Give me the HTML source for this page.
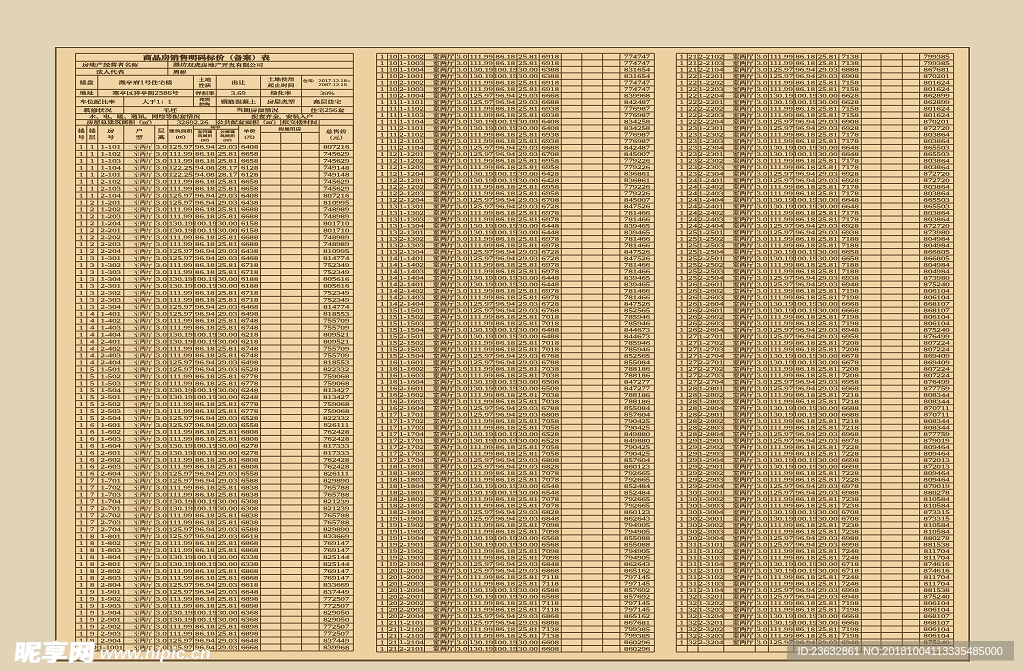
<!DOCTYPE html>
<html lang="zh-CN"><head><meta charset="utf-8"><title>商品房销售明码标价（备案）表</title>
<style>
html,body{margin:0;padding:0;background:#e1d4b6;overflow:hidden}
body{width:1024px;height:671px;position:relative}
svg{display:block;position:absolute;left:0;top:0}
text{font-family:"Liberation Serif","Noto Serif CJK SC",serif;fill:#4a3418}
.b{font-weight:900;stroke-width:0.22}
.h{font-weight:700;stroke:#4a3418;stroke-width:0.1}
.d{stroke:#4a3418;stroke-width:0.12}
.k{font-weight:700;stroke-width:0.1}
.k tspan{stroke:none}
.k1{font-weight:700;stroke:none}
.n{font-weight:400;stroke-width:0.12}
.k tspan{fill:#c2ab84}
.wm{font-family:"Liberation Sans","Noto Sans CJK SC",sans-serif}
</style></head><body>
<div style="will-change:transform;position:absolute;left:0;top:0;width:1024px;height:671px">
<svg width="1024" height="671" viewBox="0 0 1024 671">
<defs><filter id="sh" filterUnits="userSpaceOnUse" x="0" y="0" width="1024" height="671" color-interpolation-filters="sRGB"><feConvolveMatrix order="3" kernelMatrix="0 -0.13 0 -0.13 1.52 -0.13 0 -0.13 0" preserveAlpha="true" edgeMode="duplicate"/></filter></defs>
<g filter="url(#sh)">
<rect x="0" y="0" width="1024" height="671" fill="#e1d4b6"/>
<rect x="53.8" y="46" width="917.4" height="616.5" fill="#f6e7c9" fill-opacity="0.45"/>
<rect x="55" y="47" width="915" height="614.5" fill="#edd1a1"/>
<rect x="57.1" y="48.7" width="910.8" height="610.2" fill="none" stroke="#ffecc8" stroke-opacity="0.3" stroke-width="1.2"/>
<rect x="54.9" y="47" width="1.7" height="614.5" fill="#6b5434"/>
<rect x="968.3" y="47" width="1.7" height="614.5" fill="#6b5434"/>
<rect x="55" y="47" width="915" height="1.1" fill="#6b5434"/>
<rect x="55" y="659.5" width="915" height="2" fill="#6b5434"/>
<rect x="75.55" y="53.35" width="277.8" height="597.6" fill="#efd5a6"/>
<rect x="376.6" y="53.35" width="277.75" height="598.65" fill="#efd5a6"/>
<rect x="676.3" y="53.35" width="277.3" height="598.65" fill="#efd5a6"/>
<g stroke="#5f4222">
<line x1="75.55" y1="143.4" x2="353.35" y2="143.4" stroke-width="0.9"/>
<line x1="75.55" y1="150.35" x2="353.35" y2="150.35" stroke-width="0.9"/>
<line x1="75.55" y1="157.31" x2="353.35" y2="157.31" stroke-width="0.9"/>
<line x1="75.55" y1="164.26" x2="353.35" y2="164.26" stroke-width="0.9"/>
<line x1="75.55" y1="171.21" x2="353.35" y2="171.21" stroke-width="0.9"/>
<line x1="75.55" y1="178.16" x2="353.35" y2="178.16" stroke-width="0.9"/>
<line x1="75.55" y1="185.12" x2="353.35" y2="185.12" stroke-width="0.9"/>
<line x1="75.55" y1="192.07" x2="353.35" y2="192.07" stroke-width="0.9"/>
<line x1="75.55" y1="199.02" x2="353.35" y2="199.02" stroke-width="0.9"/>
<line x1="75.55" y1="205.97" x2="353.35" y2="205.97" stroke-width="0.9"/>
<line x1="75.55" y1="212.93" x2="353.35" y2="212.93" stroke-width="0.9"/>
<line x1="75.55" y1="219.88" x2="353.35" y2="219.88" stroke-width="0.9"/>
<line x1="75.55" y1="226.83" x2="353.35" y2="226.83" stroke-width="0.9"/>
<line x1="75.55" y1="233.79" x2="353.35" y2="233.79" stroke-width="0.9"/>
<line x1="75.55" y1="240.74" x2="353.35" y2="240.74" stroke-width="0.9"/>
<line x1="75.55" y1="247.69" x2="353.35" y2="247.69" stroke-width="0.9"/>
<line x1="75.55" y1="254.64" x2="353.35" y2="254.64" stroke-width="0.9"/>
<line x1="75.55" y1="261.6" x2="353.35" y2="261.6" stroke-width="0.9"/>
<line x1="75.55" y1="268.55" x2="353.35" y2="268.55" stroke-width="0.9"/>
<line x1="75.55" y1="275.5" x2="353.35" y2="275.5" stroke-width="0.9"/>
<line x1="75.55" y1="282.45" x2="353.35" y2="282.45" stroke-width="0.9"/>
<line x1="75.55" y1="289.41" x2="353.35" y2="289.41" stroke-width="0.9"/>
<line x1="75.55" y1="296.36" x2="353.35" y2="296.36" stroke-width="0.9"/>
<line x1="75.55" y1="303.31" x2="353.35" y2="303.31" stroke-width="0.9"/>
<line x1="75.55" y1="310.27" x2="353.35" y2="310.27" stroke-width="0.9"/>
<line x1="75.55" y1="317.22" x2="353.35" y2="317.22" stroke-width="0.9"/>
<line x1="75.55" y1="324.17" x2="353.35" y2="324.17" stroke-width="0.9"/>
<line x1="75.55" y1="331.12" x2="353.35" y2="331.12" stroke-width="0.9"/>
<line x1="75.55" y1="338.08" x2="353.35" y2="338.08" stroke-width="0.9"/>
<line x1="75.55" y1="345.03" x2="353.35" y2="345.03" stroke-width="0.9"/>
<line x1="75.55" y1="351.98" x2="353.35" y2="351.98" stroke-width="0.9"/>
<line x1="75.55" y1="358.93" x2="353.35" y2="358.93" stroke-width="0.9"/>
<line x1="75.55" y1="365.89" x2="353.35" y2="365.89" stroke-width="0.9"/>
<line x1="75.55" y1="372.84" x2="353.35" y2="372.84" stroke-width="0.9"/>
<line x1="75.55" y1="379.79" x2="353.35" y2="379.79" stroke-width="0.9"/>
<line x1="75.55" y1="386.75" x2="353.35" y2="386.75" stroke-width="0.9"/>
<line x1="75.55" y1="393.7" x2="353.35" y2="393.7" stroke-width="0.9"/>
<line x1="75.55" y1="400.65" x2="353.35" y2="400.65" stroke-width="0.9"/>
<line x1="75.55" y1="407.6" x2="353.35" y2="407.6" stroke-width="0.9"/>
<line x1="75.55" y1="414.56" x2="353.35" y2="414.56" stroke-width="0.9"/>
<line x1="75.55" y1="421.51" x2="353.35" y2="421.51" stroke-width="0.9"/>
<line x1="75.55" y1="428.46" x2="353.35" y2="428.46" stroke-width="0.9"/>
<line x1="75.55" y1="435.42" x2="353.35" y2="435.42" stroke-width="0.9"/>
<line x1="75.55" y1="442.37" x2="353.35" y2="442.37" stroke-width="0.9"/>
<line x1="75.55" y1="449.32" x2="353.35" y2="449.32" stroke-width="0.9"/>
<line x1="75.55" y1="456.27" x2="353.35" y2="456.27" stroke-width="0.9"/>
<line x1="75.55" y1="463.23" x2="353.35" y2="463.23" stroke-width="0.9"/>
<line x1="75.55" y1="470.18" x2="353.35" y2="470.18" stroke-width="0.9"/>
<line x1="75.55" y1="477.13" x2="353.35" y2="477.13" stroke-width="0.9"/>
<line x1="75.55" y1="484.08" x2="353.35" y2="484.08" stroke-width="0.9"/>
<line x1="75.55" y1="491.04" x2="353.35" y2="491.04" stroke-width="0.9"/>
<line x1="75.55" y1="497.99" x2="353.35" y2="497.99" stroke-width="0.9"/>
<line x1="75.55" y1="504.94" x2="353.35" y2="504.94" stroke-width="0.9"/>
<line x1="75.55" y1="511.9" x2="353.35" y2="511.9" stroke-width="0.9"/>
<line x1="75.55" y1="518.85" x2="353.35" y2="518.85" stroke-width="0.9"/>
<line x1="75.55" y1="525.8" x2="353.35" y2="525.8" stroke-width="0.9"/>
<line x1="75.55" y1="532.75" x2="353.35" y2="532.75" stroke-width="0.9"/>
<line x1="75.55" y1="539.71" x2="353.35" y2="539.71" stroke-width="0.9"/>
<line x1="75.55" y1="546.66" x2="353.35" y2="546.66" stroke-width="0.9"/>
<line x1="75.55" y1="553.61" x2="353.35" y2="553.61" stroke-width="0.9"/>
<line x1="75.55" y1="560.56" x2="353.35" y2="560.56" stroke-width="0.9"/>
<line x1="75.55" y1="567.52" x2="353.35" y2="567.52" stroke-width="0.9"/>
<line x1="75.55" y1="574.47" x2="353.35" y2="574.47" stroke-width="0.9"/>
<line x1="75.55" y1="581.42" x2="353.35" y2="581.42" stroke-width="0.9"/>
<line x1="75.55" y1="588.38" x2="353.35" y2="588.38" stroke-width="0.9"/>
<line x1="75.55" y1="595.33" x2="353.35" y2="595.33" stroke-width="0.9"/>
<line x1="75.55" y1="602.28" x2="353.35" y2="602.28" stroke-width="0.9"/>
<line x1="75.55" y1="609.23" x2="353.35" y2="609.23" stroke-width="0.9"/>
<line x1="75.55" y1="616.19" x2="353.35" y2="616.19" stroke-width="0.9"/>
<line x1="75.55" y1="623.14" x2="353.35" y2="623.14" stroke-width="0.9"/>
<line x1="75.55" y1="630.09" x2="353.35" y2="630.09" stroke-width="0.9"/>
<line x1="75.55" y1="637.04" x2="353.35" y2="637.04" stroke-width="0.9"/>
<line x1="75.55" y1="644" x2="353.35" y2="644" stroke-width="0.9"/>
<line x1="75.55" y1="650.95" x2="353.35" y2="650.95" stroke-width="0.9"/>
<line x1="75.55" y1="143.4" x2="75.55" y2="650.95" stroke-width="0.96"/>
<line x1="86.75" y1="143.4" x2="86.75" y2="650.95" stroke-width="0.96"/>
<line x1="97.75" y1="143.4" x2="97.75" y2="650.95" stroke-width="0.96"/>
<line x1="123.75" y1="143.4" x2="123.75" y2="650.95" stroke-width="0.96"/>
<line x1="154.75" y1="143.4" x2="154.75" y2="650.95" stroke-width="0.96"/>
<line x1="167.85" y1="143.4" x2="167.85" y2="650.95" stroke-width="0.96"/>
<line x1="193.45" y1="143.4" x2="193.45" y2="650.95" stroke-width="0.96"/>
<line x1="216.25" y1="143.4" x2="216.25" y2="650.95" stroke-width="0.96"/>
<line x1="238.65" y1="143.4" x2="238.65" y2="650.95" stroke-width="0.96"/>
<line x1="260.55" y1="143.4" x2="260.55" y2="650.95" stroke-width="0.96"/>
<line x1="280.75" y1="143.4" x2="280.75" y2="650.95" stroke-width="0.96"/>
<line x1="301.55" y1="143.4" x2="301.55" y2="650.95" stroke-width="0.96"/>
<line x1="319.15" y1="143.4" x2="319.15" y2="650.95" stroke-width="0.96"/>
<line x1="353.35" y1="143.4" x2="353.35" y2="650.95" stroke-width="0.96"/>
<line x1="376.6" y1="53.35" x2="654.35" y2="53.35" stroke-width="0.9"/>
<line x1="376.6" y1="59.86" x2="654.35" y2="59.86" stroke-width="0.9"/>
<line x1="376.6" y1="66.36" x2="654.35" y2="66.36" stroke-width="0.9"/>
<line x1="376.6" y1="72.87" x2="654.35" y2="72.87" stroke-width="0.9"/>
<line x1="376.6" y1="79.38" x2="654.35" y2="79.38" stroke-width="0.9"/>
<line x1="376.6" y1="85.89" x2="654.35" y2="85.89" stroke-width="0.9"/>
<line x1="376.6" y1="92.39" x2="654.35" y2="92.39" stroke-width="0.9"/>
<line x1="376.6" y1="98.9" x2="654.35" y2="98.9" stroke-width="0.9"/>
<line x1="376.6" y1="105.41" x2="654.35" y2="105.41" stroke-width="0.9"/>
<line x1="376.6" y1="111.91" x2="654.35" y2="111.91" stroke-width="0.9"/>
<line x1="376.6" y1="118.42" x2="654.35" y2="118.42" stroke-width="0.9"/>
<line x1="376.6" y1="124.93" x2="654.35" y2="124.93" stroke-width="0.9"/>
<line x1="376.6" y1="131.43" x2="654.35" y2="131.43" stroke-width="0.9"/>
<line x1="376.6" y1="137.94" x2="654.35" y2="137.94" stroke-width="0.9"/>
<line x1="376.6" y1="144.45" x2="654.35" y2="144.45" stroke-width="0.9"/>
<line x1="376.6" y1="150.96" x2="654.35" y2="150.96" stroke-width="0.9"/>
<line x1="376.6" y1="157.46" x2="654.35" y2="157.46" stroke-width="0.9"/>
<line x1="376.6" y1="163.97" x2="654.35" y2="163.97" stroke-width="0.9"/>
<line x1="376.6" y1="170.48" x2="654.35" y2="170.48" stroke-width="0.9"/>
<line x1="376.6" y1="176.98" x2="654.35" y2="176.98" stroke-width="0.9"/>
<line x1="376.6" y1="183.49" x2="654.35" y2="183.49" stroke-width="0.9"/>
<line x1="376.6" y1="190" x2="654.35" y2="190" stroke-width="0.9"/>
<line x1="376.6" y1="196.51" x2="654.35" y2="196.51" stroke-width="0.9"/>
<line x1="376.6" y1="203.01" x2="654.35" y2="203.01" stroke-width="0.9"/>
<line x1="376.6" y1="209.52" x2="654.35" y2="209.52" stroke-width="0.9"/>
<line x1="376.6" y1="216.03" x2="654.35" y2="216.03" stroke-width="0.9"/>
<line x1="376.6" y1="222.53" x2="654.35" y2="222.53" stroke-width="0.9"/>
<line x1="376.6" y1="229.04" x2="654.35" y2="229.04" stroke-width="0.9"/>
<line x1="376.6" y1="235.55" x2="654.35" y2="235.55" stroke-width="0.9"/>
<line x1="376.6" y1="242.05" x2="654.35" y2="242.05" stroke-width="0.9"/>
<line x1="376.6" y1="248.56" x2="654.35" y2="248.56" stroke-width="0.9"/>
<line x1="376.6" y1="255.07" x2="654.35" y2="255.07" stroke-width="0.9"/>
<line x1="376.6" y1="261.58" x2="654.35" y2="261.58" stroke-width="0.9"/>
<line x1="376.6" y1="268.08" x2="654.35" y2="268.08" stroke-width="0.9"/>
<line x1="376.6" y1="274.59" x2="654.35" y2="274.59" stroke-width="0.9"/>
<line x1="376.6" y1="281.1" x2="654.35" y2="281.1" stroke-width="0.9"/>
<line x1="376.6" y1="287.6" x2="654.35" y2="287.6" stroke-width="0.9"/>
<line x1="376.6" y1="294.11" x2="654.35" y2="294.11" stroke-width="0.9"/>
<line x1="376.6" y1="300.62" x2="654.35" y2="300.62" stroke-width="0.9"/>
<line x1="376.6" y1="307.13" x2="654.35" y2="307.13" stroke-width="0.9"/>
<line x1="376.6" y1="313.63" x2="654.35" y2="313.63" stroke-width="0.9"/>
<line x1="376.6" y1="320.14" x2="654.35" y2="320.14" stroke-width="0.9"/>
<line x1="376.6" y1="326.65" x2="654.35" y2="326.65" stroke-width="0.9"/>
<line x1="376.6" y1="333.15" x2="654.35" y2="333.15" stroke-width="0.9"/>
<line x1="376.6" y1="339.66" x2="654.35" y2="339.66" stroke-width="0.9"/>
<line x1="376.6" y1="346.17" x2="654.35" y2="346.17" stroke-width="0.9"/>
<line x1="376.6" y1="352.68" x2="654.35" y2="352.68" stroke-width="0.9"/>
<line x1="376.6" y1="359.18" x2="654.35" y2="359.18" stroke-width="0.9"/>
<line x1="376.6" y1="365.69" x2="654.35" y2="365.69" stroke-width="0.9"/>
<line x1="376.6" y1="372.2" x2="654.35" y2="372.2" stroke-width="0.9"/>
<line x1="376.6" y1="378.7" x2="654.35" y2="378.7" stroke-width="0.9"/>
<line x1="376.6" y1="385.21" x2="654.35" y2="385.21" stroke-width="0.9"/>
<line x1="376.6" y1="391.72" x2="654.35" y2="391.72" stroke-width="0.9"/>
<line x1="376.6" y1="398.22" x2="654.35" y2="398.22" stroke-width="0.9"/>
<line x1="376.6" y1="404.73" x2="654.35" y2="404.73" stroke-width="0.9"/>
<line x1="376.6" y1="411.24" x2="654.35" y2="411.24" stroke-width="0.9"/>
<line x1="376.6" y1="417.75" x2="654.35" y2="417.75" stroke-width="0.9"/>
<line x1="376.6" y1="424.25" x2="654.35" y2="424.25" stroke-width="0.9"/>
<line x1="376.6" y1="430.76" x2="654.35" y2="430.76" stroke-width="0.9"/>
<line x1="376.6" y1="437.27" x2="654.35" y2="437.27" stroke-width="0.9"/>
<line x1="376.6" y1="443.77" x2="654.35" y2="443.77" stroke-width="0.9"/>
<line x1="376.6" y1="450.28" x2="654.35" y2="450.28" stroke-width="0.9"/>
<line x1="376.6" y1="456.79" x2="654.35" y2="456.79" stroke-width="0.9"/>
<line x1="376.6" y1="463.3" x2="654.35" y2="463.3" stroke-width="0.9"/>
<line x1="376.6" y1="469.8" x2="654.35" y2="469.8" stroke-width="0.9"/>
<line x1="376.6" y1="476.31" x2="654.35" y2="476.31" stroke-width="0.9"/>
<line x1="376.6" y1="482.82" x2="654.35" y2="482.82" stroke-width="0.9"/>
<line x1="376.6" y1="489.32" x2="654.35" y2="489.32" stroke-width="0.9"/>
<line x1="376.6" y1="495.83" x2="654.35" y2="495.83" stroke-width="0.9"/>
<line x1="376.6" y1="502.34" x2="654.35" y2="502.34" stroke-width="0.9"/>
<line x1="376.6" y1="508.84" x2="654.35" y2="508.84" stroke-width="0.9"/>
<line x1="376.6" y1="515.35" x2="654.35" y2="515.35" stroke-width="0.9"/>
<line x1="376.6" y1="521.86" x2="654.35" y2="521.86" stroke-width="0.9"/>
<line x1="376.6" y1="528.37" x2="654.35" y2="528.37" stroke-width="0.9"/>
<line x1="376.6" y1="534.87" x2="654.35" y2="534.87" stroke-width="0.9"/>
<line x1="376.6" y1="541.38" x2="654.35" y2="541.38" stroke-width="0.9"/>
<line x1="376.6" y1="547.89" x2="654.35" y2="547.89" stroke-width="0.9"/>
<line x1="376.6" y1="554.39" x2="654.35" y2="554.39" stroke-width="0.9"/>
<line x1="376.6" y1="560.9" x2="654.35" y2="560.9" stroke-width="0.9"/>
<line x1="376.6" y1="567.41" x2="654.35" y2="567.41" stroke-width="0.9"/>
<line x1="376.6" y1="573.92" x2="654.35" y2="573.92" stroke-width="0.9"/>
<line x1="376.6" y1="580.42" x2="654.35" y2="580.42" stroke-width="0.9"/>
<line x1="376.6" y1="586.93" x2="654.35" y2="586.93" stroke-width="0.9"/>
<line x1="376.6" y1="593.44" x2="654.35" y2="593.44" stroke-width="0.9"/>
<line x1="376.6" y1="599.94" x2="654.35" y2="599.94" stroke-width="0.9"/>
<line x1="376.6" y1="606.45" x2="654.35" y2="606.45" stroke-width="0.9"/>
<line x1="376.6" y1="612.96" x2="654.35" y2="612.96" stroke-width="0.9"/>
<line x1="376.6" y1="619.46" x2="654.35" y2="619.46" stroke-width="0.9"/>
<line x1="376.6" y1="625.97" x2="654.35" y2="625.97" stroke-width="0.9"/>
<line x1="376.6" y1="632.48" x2="654.35" y2="632.48" stroke-width="0.9"/>
<line x1="376.6" y1="638.99" x2="654.35" y2="638.99" stroke-width="0.9"/>
<line x1="376.6" y1="645.49" x2="654.35" y2="645.49" stroke-width="0.9"/>
<line x1="376.6" y1="652" x2="654.35" y2="652" stroke-width="0.9"/>
<line x1="376.6" y1="53.35" x2="376.6" y2="652" stroke-width="0.96"/>
<line x1="387.6" y1="53.35" x2="387.6" y2="652" stroke-width="0.96"/>
<line x1="398.6" y1="53.35" x2="398.6" y2="652" stroke-width="0.96"/>
<line x1="424.5" y1="53.35" x2="424.5" y2="652" stroke-width="0.96"/>
<line x1="455.3" y1="53.35" x2="455.3" y2="652" stroke-width="0.96"/>
<line x1="468.4" y1="53.35" x2="468.4" y2="652" stroke-width="0.96"/>
<line x1="493.9" y1="53.35" x2="493.9" y2="652" stroke-width="0.96"/>
<line x1="516.9" y1="53.35" x2="516.9" y2="652" stroke-width="0.96"/>
<line x1="539.3" y1="53.35" x2="539.3" y2="652" stroke-width="0.96"/>
<line x1="561.3" y1="53.35" x2="561.3" y2="652" stroke-width="0.96"/>
<line x1="581.8" y1="53.35" x2="581.8" y2="652" stroke-width="0.96"/>
<line x1="602.6" y1="53.35" x2="602.6" y2="652" stroke-width="0.96"/>
<line x1="619.9" y1="53.35" x2="619.9" y2="652" stroke-width="0.96"/>
<line x1="654.35" y1="53.35" x2="654.35" y2="652" stroke-width="0.96"/>
<line x1="676.3" y1="53.35" x2="953.6" y2="53.35" stroke-width="0.9"/>
<line x1="676.3" y1="59.86" x2="953.6" y2="59.86" stroke-width="0.9"/>
<line x1="676.3" y1="66.36" x2="953.6" y2="66.36" stroke-width="0.9"/>
<line x1="676.3" y1="72.87" x2="953.6" y2="72.87" stroke-width="0.9"/>
<line x1="676.3" y1="79.38" x2="953.6" y2="79.38" stroke-width="0.9"/>
<line x1="676.3" y1="85.89" x2="953.6" y2="85.89" stroke-width="0.9"/>
<line x1="676.3" y1="92.39" x2="953.6" y2="92.39" stroke-width="0.9"/>
<line x1="676.3" y1="98.9" x2="953.6" y2="98.9" stroke-width="0.9"/>
<line x1="676.3" y1="105.41" x2="953.6" y2="105.41" stroke-width="0.9"/>
<line x1="676.3" y1="111.91" x2="953.6" y2="111.91" stroke-width="0.9"/>
<line x1="676.3" y1="118.42" x2="953.6" y2="118.42" stroke-width="0.9"/>
<line x1="676.3" y1="124.93" x2="953.6" y2="124.93" stroke-width="0.9"/>
<line x1="676.3" y1="131.43" x2="953.6" y2="131.43" stroke-width="0.9"/>
<line x1="676.3" y1="137.94" x2="953.6" y2="137.94" stroke-width="0.9"/>
<line x1="676.3" y1="144.45" x2="953.6" y2="144.45" stroke-width="0.9"/>
<line x1="676.3" y1="150.96" x2="953.6" y2="150.96" stroke-width="0.9"/>
<line x1="676.3" y1="157.46" x2="953.6" y2="157.46" stroke-width="0.9"/>
<line x1="676.3" y1="163.97" x2="953.6" y2="163.97" stroke-width="0.9"/>
<line x1="676.3" y1="170.48" x2="953.6" y2="170.48" stroke-width="0.9"/>
<line x1="676.3" y1="176.98" x2="953.6" y2="176.98" stroke-width="0.9"/>
<line x1="676.3" y1="183.49" x2="953.6" y2="183.49" stroke-width="0.9"/>
<line x1="676.3" y1="190" x2="953.6" y2="190" stroke-width="0.9"/>
<line x1="676.3" y1="196.51" x2="953.6" y2="196.51" stroke-width="0.9"/>
<line x1="676.3" y1="203.01" x2="953.6" y2="203.01" stroke-width="0.9"/>
<line x1="676.3" y1="209.52" x2="953.6" y2="209.52" stroke-width="0.9"/>
<line x1="676.3" y1="216.03" x2="953.6" y2="216.03" stroke-width="0.9"/>
<line x1="676.3" y1="222.53" x2="953.6" y2="222.53" stroke-width="0.9"/>
<line x1="676.3" y1="229.04" x2="953.6" y2="229.04" stroke-width="0.9"/>
<line x1="676.3" y1="235.55" x2="953.6" y2="235.55" stroke-width="0.9"/>
<line x1="676.3" y1="242.05" x2="953.6" y2="242.05" stroke-width="0.9"/>
<line x1="676.3" y1="248.56" x2="953.6" y2="248.56" stroke-width="0.9"/>
<line x1="676.3" y1="255.07" x2="953.6" y2="255.07" stroke-width="0.9"/>
<line x1="676.3" y1="261.58" x2="953.6" y2="261.58" stroke-width="0.9"/>
<line x1="676.3" y1="268.08" x2="953.6" y2="268.08" stroke-width="0.9"/>
<line x1="676.3" y1="274.59" x2="953.6" y2="274.59" stroke-width="0.9"/>
<line x1="676.3" y1="281.1" x2="953.6" y2="281.1" stroke-width="0.9"/>
<line x1="676.3" y1="287.6" x2="953.6" y2="287.6" stroke-width="0.9"/>
<line x1="676.3" y1="294.11" x2="953.6" y2="294.11" stroke-width="0.9"/>
<line x1="676.3" y1="300.62" x2="953.6" y2="300.62" stroke-width="0.9"/>
<line x1="676.3" y1="307.13" x2="953.6" y2="307.13" stroke-width="0.9"/>
<line x1="676.3" y1="313.63" x2="953.6" y2="313.63" stroke-width="0.9"/>
<line x1="676.3" y1="320.14" x2="953.6" y2="320.14" stroke-width="0.9"/>
<line x1="676.3" y1="326.65" x2="953.6" y2="326.65" stroke-width="0.9"/>
<line x1="676.3" y1="333.15" x2="953.6" y2="333.15" stroke-width="0.9"/>
<line x1="676.3" y1="339.66" x2="953.6" y2="339.66" stroke-width="0.9"/>
<line x1="676.3" y1="346.17" x2="953.6" y2="346.17" stroke-width="0.9"/>
<line x1="676.3" y1="352.68" x2="953.6" y2="352.68" stroke-width="0.9"/>
<line x1="676.3" y1="359.18" x2="953.6" y2="359.18" stroke-width="0.9"/>
<line x1="676.3" y1="365.69" x2="953.6" y2="365.69" stroke-width="0.9"/>
<line x1="676.3" y1="372.2" x2="953.6" y2="372.2" stroke-width="0.9"/>
<line x1="676.3" y1="378.7" x2="953.6" y2="378.7" stroke-width="0.9"/>
<line x1="676.3" y1="385.21" x2="953.6" y2="385.21" stroke-width="0.9"/>
<line x1="676.3" y1="391.72" x2="953.6" y2="391.72" stroke-width="0.9"/>
<line x1="676.3" y1="398.22" x2="953.6" y2="398.22" stroke-width="0.9"/>
<line x1="676.3" y1="404.73" x2="953.6" y2="404.73" stroke-width="0.9"/>
<line x1="676.3" y1="411.24" x2="953.6" y2="411.24" stroke-width="0.9"/>
<line x1="676.3" y1="417.75" x2="953.6" y2="417.75" stroke-width="0.9"/>
<line x1="676.3" y1="424.25" x2="953.6" y2="424.25" stroke-width="0.9"/>
<line x1="676.3" y1="430.76" x2="953.6" y2="430.76" stroke-width="0.9"/>
<line x1="676.3" y1="437.27" x2="953.6" y2="437.27" stroke-width="0.9"/>
<line x1="676.3" y1="443.77" x2="953.6" y2="443.77" stroke-width="0.9"/>
<line x1="676.3" y1="450.28" x2="953.6" y2="450.28" stroke-width="0.9"/>
<line x1="676.3" y1="456.79" x2="953.6" y2="456.79" stroke-width="0.9"/>
<line x1="676.3" y1="463.3" x2="953.6" y2="463.3" stroke-width="0.9"/>
<line x1="676.3" y1="469.8" x2="953.6" y2="469.8" stroke-width="0.9"/>
<line x1="676.3" y1="476.31" x2="953.6" y2="476.31" stroke-width="0.9"/>
<line x1="676.3" y1="482.82" x2="953.6" y2="482.82" stroke-width="0.9"/>
<line x1="676.3" y1="489.32" x2="953.6" y2="489.32" stroke-width="0.9"/>
<line x1="676.3" y1="495.83" x2="953.6" y2="495.83" stroke-width="0.9"/>
<line x1="676.3" y1="502.34" x2="953.6" y2="502.34" stroke-width="0.9"/>
<line x1="676.3" y1="508.84" x2="953.6" y2="508.84" stroke-width="0.9"/>
<line x1="676.3" y1="515.35" x2="953.6" y2="515.35" stroke-width="0.9"/>
<line x1="676.3" y1="521.86" x2="953.6" y2="521.86" stroke-width="0.9"/>
<line x1="676.3" y1="528.37" x2="953.6" y2="528.37" stroke-width="0.9"/>
<line x1="676.3" y1="534.87" x2="953.6" y2="534.87" stroke-width="0.9"/>
<line x1="676.3" y1="541.38" x2="953.6" y2="541.38" stroke-width="0.9"/>
<line x1="676.3" y1="547.89" x2="953.6" y2="547.89" stroke-width="0.9"/>
<line x1="676.3" y1="554.39" x2="953.6" y2="554.39" stroke-width="0.9"/>
<line x1="676.3" y1="560.9" x2="953.6" y2="560.9" stroke-width="0.9"/>
<line x1="676.3" y1="567.41" x2="953.6" y2="567.41" stroke-width="0.9"/>
<line x1="676.3" y1="573.92" x2="953.6" y2="573.92" stroke-width="0.9"/>
<line x1="676.3" y1="580.42" x2="953.6" y2="580.42" stroke-width="0.9"/>
<line x1="676.3" y1="586.93" x2="953.6" y2="586.93" stroke-width="0.9"/>
<line x1="676.3" y1="593.44" x2="953.6" y2="593.44" stroke-width="0.9"/>
<line x1="676.3" y1="599.94" x2="953.6" y2="599.94" stroke-width="0.9"/>
<line x1="676.3" y1="606.45" x2="953.6" y2="606.45" stroke-width="0.9"/>
<line x1="676.3" y1="612.96" x2="953.6" y2="612.96" stroke-width="0.9"/>
<line x1="676.3" y1="619.46" x2="953.6" y2="619.46" stroke-width="0.9"/>
<line x1="676.3" y1="625.97" x2="953.6" y2="625.97" stroke-width="0.9"/>
<line x1="676.3" y1="632.48" x2="953.6" y2="632.48" stroke-width="0.9"/>
<line x1="676.3" y1="638.99" x2="953.6" y2="638.99" stroke-width="0.9"/>
<line x1="676.3" y1="645.49" x2="953.6" y2="645.49" stroke-width="0.9"/>
<line x1="676.3" y1="652" x2="953.6" y2="652" stroke-width="0.9"/>
<line x1="676.3" y1="53.35" x2="676.3" y2="652" stroke-width="0.96"/>
<line x1="687.3" y1="53.35" x2="687.3" y2="652" stroke-width="0.96"/>
<line x1="698.1" y1="53.35" x2="698.1" y2="652" stroke-width="0.96"/>
<line x1="723.8" y1="53.35" x2="723.8" y2="652" stroke-width="0.96"/>
<line x1="755.3" y1="53.35" x2="755.3" y2="652" stroke-width="0.96"/>
<line x1="768.4" y1="53.35" x2="768.4" y2="652" stroke-width="0.96"/>
<line x1="793.8" y1="53.35" x2="793.8" y2="652" stroke-width="0.96"/>
<line x1="816.6" y1="53.35" x2="816.6" y2="652" stroke-width="0.96"/>
<line x1="838.9" y1="53.35" x2="838.9" y2="652" stroke-width="0.96"/>
<line x1="861.3" y1="53.35" x2="861.3" y2="652" stroke-width="0.96"/>
<line x1="881" y1="53.35" x2="881" y2="652" stroke-width="0.96"/>
<line x1="902.3" y1="53.35" x2="902.3" y2="652" stroke-width="0.96"/>
<line x1="919.6" y1="53.35" x2="919.6" y2="652" stroke-width="0.96"/>
<line x1="953.6" y1="53.35" x2="953.6" y2="652" stroke-width="0.96"/>
<line x1="75.55" y1="53.4" x2="353.35" y2="53.4" stroke-width="0.9"/>
<line x1="75.55" y1="61.3" x2="353.35" y2="61.3" stroke-width="0.9"/>
<line x1="75.55" y1="68.3" x2="353.35" y2="68.3" stroke-width="0.9"/>
<line x1="75.55" y1="75.3" x2="353.35" y2="75.3" stroke-width="0.9"/>
<line x1="75.55" y1="89.4" x2="353.35" y2="89.4" stroke-width="0.9"/>
<line x1="75.55" y1="96.75" x2="353.35" y2="96.75" stroke-width="0.9"/>
<line x1="75.55" y1="106.6" x2="353.35" y2="106.6" stroke-width="0.9"/>
<line x1="75.55" y1="113.6" x2="353.35" y2="113.6" stroke-width="0.9"/>
<line x1="75.55" y1="119.6" x2="353.35" y2="119.6" stroke-width="0.9"/>
<line x1="75.55" y1="125.25" x2="353.35" y2="125.25" stroke-width="0.9"/>
<line x1="75.55" y1="53.4" x2="75.55" y2="143.4" stroke-width="0.96"/>
<line x1="353.35" y1="53.4" x2="353.35" y2="143.4" stroke-width="0.96"/>
<line x1="167.85" y1="61.3" x2="167.85" y2="75.3" stroke-width="0.96"/>
<line x1="97.75" y1="75.3" x2="97.75" y2="96.75" stroke-width="0.96"/>
<line x1="193.45" y1="75.3" x2="193.45" y2="96.75" stroke-width="0.96"/>
<line x1="216.25" y1="75.3" x2="216.25" y2="96.75" stroke-width="0.96"/>
<line x1="260.55" y1="75.3" x2="260.55" y2="96.75" stroke-width="0.96"/>
<line x1="301.55" y1="75.3" x2="301.55" y2="96.75" stroke-width="0.96"/>
<line x1="123.75" y1="96.75" x2="123.75" y2="106.6" stroke-width="0.96"/>
<line x1="193.45" y1="96.75" x2="193.45" y2="106.6" stroke-width="0.96"/>
<line x1="216.25" y1="96.75" x2="216.25" y2="106.6" stroke-width="0.96"/>
<line x1="260.55" y1="96.75" x2="260.55" y2="106.6" stroke-width="0.96"/>
<line x1="301.55" y1="96.75" x2="301.55" y2="106.6" stroke-width="0.96"/>
<line x1="123.75" y1="106.6" x2="123.75" y2="113.6" stroke-width="0.96"/>
<line x1="216.25" y1="106.6" x2="216.25" y2="113.6" stroke-width="0.96"/>
<line x1="301.55" y1="106.6" x2="301.55" y2="113.6" stroke-width="0.96"/>
<line x1="216.25" y1="113.6" x2="216.25" y2="119.6" stroke-width="0.96"/>
<line x1="167.85" y1="119.6" x2="167.85" y2="125.25" stroke-width="0.96"/>
<line x1="216.25" y1="119.6" x2="216.25" y2="125.25" stroke-width="0.96"/>
<line x1="280.75" y1="119.6" x2="280.75" y2="125.25" stroke-width="0.96"/>
<line x1="319.15" y1="119.6" x2="319.15" y2="125.25" stroke-width="0.96"/>
<line x1="75.55" y1="125.25" x2="75.55" y2="143.4" stroke-width="0.96"/>
<line x1="86.75" y1="125.25" x2="86.75" y2="143.4" stroke-width="0.96"/>
<line x1="97.75" y1="125.25" x2="97.75" y2="143.4" stroke-width="0.96"/>
<line x1="123.75" y1="125.25" x2="123.75" y2="143.4" stroke-width="0.96"/>
<line x1="154.75" y1="125.25" x2="154.75" y2="143.4" stroke-width="0.96"/>
<line x1="167.85" y1="125.25" x2="167.85" y2="143.4" stroke-width="0.96"/>
<line x1="193.45" y1="125.25" x2="193.45" y2="143.4" stroke-width="0.96"/>
<line x1="216.25" y1="129.3" x2="216.25" y2="143.4" stroke-width="0.96"/>
<line x1="238.65" y1="125.25" x2="238.65" y2="143.4" stroke-width="0.96"/>
<line x1="260.55" y1="125.25" x2="260.55" y2="143.4" stroke-width="0.96"/>
<line x1="280.75" y1="132.4" x2="280.75" y2="143.4" stroke-width="0.96"/>
<line x1="301.55" y1="132.4" x2="301.55" y2="143.4" stroke-width="0.96"/>
<line x1="319.15" y1="125.25" x2="319.15" y2="143.4" stroke-width="0.96"/>
<line x1="353.35" y1="125.25" x2="353.35" y2="143.4" stroke-width="0.96"/>
<line x1="193.45" y1="129.3" x2="238.65" y2="129.3" stroke-width="0.9"/>
<line x1="260.55" y1="132.4" x2="319.15" y2="132.4" stroke-width="0.9"/>
</g>
<g class="h">
<text transform="matrix(1.44 0.002 0 1 206.35 60)" font-size="6.3" text-anchor="middle" class="b">商品房销售明码标价（备案）表</text>
<text transform="matrix(1.5 0.002 0 1 110.2 66.6)" font-size="4.7" text-anchor="middle">房地产经营者名称</text>
<text transform="matrix(1.5 0.002 0 1 173.1 66.6)" font-size="4.63" text-anchor="start">潍坊双虎房地产开发有限公司</text>
<text transform="matrix(1.5 0.002 0 1 110.2 73.8)" font-size="4.7" text-anchor="middle">法人代表</text>
<text transform="matrix(1.5 0.002 0 1 173.1 73.8)" font-size="4.5" text-anchor="start">周彬</text>
<text transform="matrix(1.5 0.002 0 1 86.65 84.3)" font-size="4.7" text-anchor="middle">楼盘</text>
<text transform="matrix(1.5 0.002 0 1 145.6 84.3)" font-size="4.7" text-anchor="middle">潍亭府<tspan class="n" font-size="5.73">1</tspan>号住宅楼</text>
<text transform="matrix(1.5 0.002 0 1 204.85 81.3)" font-size="4.3" text-anchor="middle">土地</text>
<text transform="matrix(1.5 0.002 0 1 204.85 87.1)" font-size="4.3" text-anchor="middle">性质</text>
<text transform="matrix(1.5 0.002 0 1 238.4 84.3)" font-size="4.7" text-anchor="middle">出让</text>
<text transform="matrix(1.5 0.002 0 1 281.05 80.9)" font-size="4.5" text-anchor="middle">土地使用</text>
<text transform="matrix(1.5 0.002 0 1 281.05 86.9)" font-size="4.5" text-anchor="middle">起止时间</text>
<text transform="matrix(1.5 0.002 0 1 303.1 82)" font-size="3.2" text-anchor="start">住宅:</text>
<text transform="matrix(1.5 0.002 0 1 318.6 82)" font-size="4.2" text-anchor="start" class="n">2017.12.16–</text>
<text transform="matrix(1.5 0.002 0 1 318.6 86)" font-size="4.2" text-anchor="start" class="n">2087.12.15</text>
<text transform="matrix(1.5 0.002 0 1 86.65 94.7)" font-size="4.7" text-anchor="middle">地址</text>
<text transform="matrix(1.5 0.002 0 1 145.6 94.7)" font-size="4.7" text-anchor="middle">寒亭区祥亭街<tspan class="n" font-size="5.73">2586</tspan>号</text>
<text transform="matrix(1.5 0.002 0 1 204.85 94.7)" font-size="4.4" text-anchor="middle">容积率</text>
<text transform="matrix(1.5 0.002 0 1 238.4 94.9)" font-size="5.6" text-anchor="middle" class="n">3.69</text>
<text transform="matrix(1.5 0.002 0 1 281.05 94.7)" font-size="4.7" text-anchor="middle">绿化率</text>
<text transform="matrix(1.5 0.002 0 1 327.45 94.9)" font-size="5.3" text-anchor="middle" class="n">30%</text>
<text transform="matrix(1.5 0.002 0 1 97.6 103.5)" font-size="4.7" text-anchor="middle">车位配比率</text>
<text transform="matrix(1.5 0.002 0 1 156.9 103.5)" font-size="4.7" text-anchor="middle">大于<tspan class="n" font-size="5.73">1</tspan>：<tspan class="n" font-size="5.73">1</tspan></text>
<text transform="matrix(1.5 0.002 0 1 204.85 100.9)" font-size="3.7" text-anchor="middle">建筑</text>
<text transform="matrix(1.5 0.002 0 1 204.85 105.5)" font-size="3.7" text-anchor="middle">结构</text>
<text transform="matrix(1.5 0.002 0 1 238.4 103.5)" font-size="4.7" text-anchor="middle">钢筋混凝土</text>
<text transform="matrix(1.5 0.002 0 1 281.05 103.5)" font-size="4.7" text-anchor="middle">房屋类型</text>
<text transform="matrix(1.5 0.002 0 1 327.45 103.5)" font-size="4.7" text-anchor="middle">高层住宅</text>
<text transform="matrix(1.5 0.002 0 1 97.7 111.9)" font-size="4.7" text-anchor="middle">装修状况</text>
<text transform="matrix(1.5 0.002 0 1 170 111.9)" font-size="4.7" text-anchor="middle">毛坯</text>
<text transform="matrix(1.5 0.002 0 1 257.4 111.9)" font-size="4.7" text-anchor="middle">当期房源情况</text>
<text transform="matrix(1.5 0.002 0 1 327.45 111.9)" font-size="4.7" text-anchor="middle">住宅<tspan class="n" font-size="5.73">256</tspan>套</text>
<text transform="matrix(1.5 0.002 0 1 144.6 118.3)" font-size="4.65" text-anchor="middle">水、电、暖、通讯、网络等配套情况</text>
<text transform="matrix(1.5 0.002 0 1 282.4 118.3)" font-size="4.57" text-anchor="middle">配套齐全，安装入户</text>
<text transform="matrix(1.5 0.002 0 1 121.2 124.1)" font-size="4.65" text-anchor="middle">房屋总建筑面积（㎡）</text>
<text transform="matrix(1.5 0.002 0 1 192.6 124.2)" font-size="5.6" text-anchor="middle" class="n">32692.26</text>
<text transform="matrix(1.5 0.002 0 1 248.4 124.1)" font-size="4.7" text-anchor="middle">公共配套面积（㎡）</text>
<text transform="matrix(1.5 0.002 0 1 299.6 124.1)" font-size="4.7" text-anchor="middle">拟交楼时间</text>
<text transform="matrix(1.5 0.002 0 1 81.15 132.6)" font-size="4.7" text-anchor="middle">楼</text>
<text transform="matrix(1.5 0.002 0 1 81.15 139)" font-size="4.7" text-anchor="middle">号</text>
<text transform="matrix(1.5 0.002 0 1 92.25 132.6)" font-size="4.7" text-anchor="middle">楼</text>
<text transform="matrix(1.5 0.002 0 1 92.25 139)" font-size="4.7" text-anchor="middle">层</text>
<text transform="matrix(1.5 0.002 0 1 110.75 132.6)" font-size="4.7" text-anchor="middle">房</text>
<text transform="matrix(1.5 0.002 0 1 110.75 139)" font-size="4.7" text-anchor="middle">号</text>
<text transform="matrix(1.5 0.002 0 1 139.25 132.6)" font-size="4.7" text-anchor="middle">户</text>
<text transform="matrix(1.5 0.002 0 1 139.25 139)" font-size="4.7" text-anchor="middle">型</text>
<text transform="matrix(1.5 0.002 0 1 161.3 132.6)" font-size="4.7" text-anchor="middle">层</text>
<text transform="matrix(1.5 0.002 0 1 161.3 139)" font-size="4.7" text-anchor="middle">高</text>
<text transform="matrix(1.5 0.002 0 1 180.65 132.5)" font-size="3.95" text-anchor="middle">建筑面积</text>
<text transform="matrix(1.5 0.002 0 1 180.65 138.3)" font-size="3.95" text-anchor="middle">(㎡)</text>
<text transform="matrix(1.5 0.002 0 1 215.25 128.6)" font-size="3.4" text-anchor="middle">其中</text>
<text transform="matrix(1.5 0.002 0 1 204.85 133)" font-size="3.3" text-anchor="middle">套内建</text>
<text transform="matrix(1.5 0.002 0 1 204.85 137.1)" font-size="3.3" text-anchor="middle">筑面积</text>
<text transform="matrix(1.5 0.002 0 1 204.85 141.3)" font-size="3.3" text-anchor="middle">(㎡)</text>
<text transform="matrix(1.5 0.002 0 1 227.45 133)" font-size="3.3" text-anchor="middle">公摊建</text>
<text transform="matrix(1.5 0.002 0 1 227.45 137.1)" font-size="3.3" text-anchor="middle">筑面积</text>
<text transform="matrix(1.5 0.002 0 1 227.45 141.3)" font-size="3.3" text-anchor="middle">(㎡)</text>
<text transform="matrix(1.5 0.002 0 1 249.6 132.5)" font-size="4" text-anchor="middle">单价</text>
<text transform="matrix(1.5 0.002 0 1 249.6 138.3)" font-size="4" text-anchor="middle">(元)</text>
<text transform="matrix(1.5 0.002 0 1 289.85 130.5)" font-size="3.8" text-anchor="middle">附属用房</text>
<text transform="matrix(1.5 0.002 0 1 336.25 133.2)" font-size="4.7" text-anchor="middle">总售价</text>
<text transform="matrix(1.5 0.002 0 1 336.25 139.4)" font-size="4.7" text-anchor="middle">（元）</text>
</g>
<g class="d">
<text transform="matrix(1.56 0.002 0 1 81.15 148.78)" font-size="5.6" text-anchor="middle">1</text>
<text transform="matrix(1.56 0.002 0 1 92.25 148.78)" font-size="5.6" text-anchor="middle">1</text>
<text transform="matrix(1.56 0.002 0 1 110.75 148.78)" font-size="5.6" text-anchor="middle">1-101</text>
<text transform="matrix(1.17 0.002 0 1 139.75 148.93)" font-size="5.4" text-anchor="middle" class="k k1"><tspan>三</tspan>室两厅</text>
<text transform="matrix(1.56 0.002 0 1 161.3 148.78)" font-size="5.6" text-anchor="middle">3.0</text>
<text transform="matrix(1.56 0.002 0 1 180.65 148.78)" font-size="5.6" text-anchor="middle">125.97</text>
<text transform="matrix(1.56 0.002 0 1 204.85 148.78)" font-size="5.6" text-anchor="middle">96.94</text>
<text transform="matrix(1.56 0.002 0 1 227.45 148.78)" font-size="5.6" text-anchor="middle">29.03</text>
<text transform="matrix(1.56 0.002 0 1 249.6 148.78)" font-size="5.6" text-anchor="middle">6408</text>
<text transform="matrix(1.56 0.002 0 1 336.25 148.78)" font-size="5.6" text-anchor="middle">807216</text>
<text transform="matrix(1.56 0.002 0 1 81.15 155.73)" font-size="5.6" text-anchor="middle">1</text>
<text transform="matrix(1.56 0.002 0 1 92.25 155.73)" font-size="5.6" text-anchor="middle">1</text>
<text transform="matrix(1.56 0.002 0 1 110.75 155.73)" font-size="5.6" text-anchor="middle">1-102</text>
<text transform="matrix(1.17 0.002 0 1 139.75 155.88)" font-size="5.4" text-anchor="middle" class="k k1"><tspan>三</tspan>室两厅</text>
<text transform="matrix(1.56 0.002 0 1 161.3 155.73)" font-size="5.6" text-anchor="middle">3.0</text>
<text transform="matrix(1.56 0.002 0 1 180.65 155.73)" font-size="5.6" text-anchor="middle">111.99</text>
<text transform="matrix(1.56 0.002 0 1 204.85 155.73)" font-size="5.6" text-anchor="middle">86.18</text>
<text transform="matrix(1.56 0.002 0 1 227.45 155.73)" font-size="5.6" text-anchor="middle">25.81</text>
<text transform="matrix(1.56 0.002 0 1 249.6 155.73)" font-size="5.6" text-anchor="middle">6658</text>
<text transform="matrix(1.56 0.002 0 1 336.25 155.73)" font-size="5.6" text-anchor="middle">745629</text>
<text transform="matrix(1.56 0.002 0 1 81.15 162.68)" font-size="5.6" text-anchor="middle">1</text>
<text transform="matrix(1.56 0.002 0 1 92.25 162.68)" font-size="5.6" text-anchor="middle">1</text>
<text transform="matrix(1.56 0.002 0 1 110.75 162.68)" font-size="5.6" text-anchor="middle">1-103</text>
<text transform="matrix(1.17 0.002 0 1 139.75 162.83)" font-size="5.4" text-anchor="middle" class="k k1"><tspan>三</tspan>室两厅</text>
<text transform="matrix(1.56 0.002 0 1 161.3 162.68)" font-size="5.6" text-anchor="middle">3.0</text>
<text transform="matrix(1.56 0.002 0 1 180.65 162.68)" font-size="5.6" text-anchor="middle">111.99</text>
<text transform="matrix(1.56 0.002 0 1 204.85 162.68)" font-size="5.6" text-anchor="middle">86.18</text>
<text transform="matrix(1.56 0.002 0 1 227.45 162.68)" font-size="5.6" text-anchor="middle">25.81</text>
<text transform="matrix(1.56 0.002 0 1 249.6 162.68)" font-size="5.6" text-anchor="middle">6658</text>
<text transform="matrix(1.56 0.002 0 1 336.25 162.68)" font-size="5.6" text-anchor="middle">745629</text>
<text transform="matrix(1.56 0.002 0 1 81.15 169.63)" font-size="5.6" text-anchor="middle">1</text>
<text transform="matrix(1.56 0.002 0 1 92.25 169.63)" font-size="5.6" text-anchor="middle">1</text>
<text transform="matrix(1.56 0.002 0 1 110.75 169.63)" font-size="5.6" text-anchor="middle">1-104</text>
<text transform="matrix(1.17 0.002 0 1 139.75 169.78)" font-size="5.4" text-anchor="middle" class="k k1"><tspan>三</tspan>室两厅</text>
<text transform="matrix(1.56 0.002 0 1 161.3 169.63)" font-size="5.6" text-anchor="middle">3.0</text>
<text transform="matrix(1.56 0.002 0 1 180.65 169.63)" font-size="5.6" text-anchor="middle">122.25</text>
<text transform="matrix(1.56 0.002 0 1 204.85 169.63)" font-size="5.6" text-anchor="middle">94.08</text>
<text transform="matrix(1.56 0.002 0 1 227.45 169.63)" font-size="5.6" text-anchor="middle">28.17</text>
<text transform="matrix(1.56 0.002 0 1 249.6 169.63)" font-size="5.6" text-anchor="middle">6128</text>
<text transform="matrix(1.56 0.002 0 1 336.25 169.63)" font-size="5.6" text-anchor="middle">749148</text>
<text transform="matrix(1.56 0.002 0 1 81.15 176.59)" font-size="5.6" text-anchor="middle">1</text>
<text transform="matrix(1.56 0.002 0 1 92.25 176.59)" font-size="5.6" text-anchor="middle">1</text>
<text transform="matrix(1.56 0.002 0 1 110.75 176.59)" font-size="5.6" text-anchor="middle">2-101</text>
<text transform="matrix(1.17 0.002 0 1 139.75 176.74)" font-size="5.4" text-anchor="middle" class="k k1"><tspan>三</tspan>室两厅</text>
<text transform="matrix(1.56 0.002 0 1 161.3 176.59)" font-size="5.6" text-anchor="middle">3.0</text>
<text transform="matrix(1.56 0.002 0 1 180.65 176.59)" font-size="5.6" text-anchor="middle">122.25</text>
<text transform="matrix(1.56 0.002 0 1 204.85 176.59)" font-size="5.6" text-anchor="middle">94.08</text>
<text transform="matrix(1.56 0.002 0 1 227.45 176.59)" font-size="5.6" text-anchor="middle">28.17</text>
<text transform="matrix(1.56 0.002 0 1 249.6 176.59)" font-size="5.6" text-anchor="middle">6128</text>
<text transform="matrix(1.56 0.002 0 1 336.25 176.59)" font-size="5.6" text-anchor="middle">749148</text>
<text transform="matrix(1.56 0.002 0 1 81.15 183.54)" font-size="5.6" text-anchor="middle">1</text>
<text transform="matrix(1.56 0.002 0 1 92.25 183.54)" font-size="5.6" text-anchor="middle">1</text>
<text transform="matrix(1.56 0.002 0 1 110.75 183.54)" font-size="5.6" text-anchor="middle">2-102</text>
<text transform="matrix(1.17 0.002 0 1 139.75 183.69)" font-size="5.4" text-anchor="middle" class="k k1"><tspan>三</tspan>室两厅</text>
<text transform="matrix(1.56 0.002 0 1 161.3 183.54)" font-size="5.6" text-anchor="middle">3.0</text>
<text transform="matrix(1.56 0.002 0 1 180.65 183.54)" font-size="5.6" text-anchor="middle">111.99</text>
<text transform="matrix(1.56 0.002 0 1 204.85 183.54)" font-size="5.6" text-anchor="middle">86.18</text>
<text transform="matrix(1.56 0.002 0 1 227.45 183.54)" font-size="5.6" text-anchor="middle">25.81</text>
<text transform="matrix(1.56 0.002 0 1 249.6 183.54)" font-size="5.6" text-anchor="middle">6658</text>
<text transform="matrix(1.56 0.002 0 1 336.25 183.54)" font-size="5.6" text-anchor="middle">745629</text>
<text transform="matrix(1.56 0.002 0 1 81.15 190.49)" font-size="5.6" text-anchor="middle">1</text>
<text transform="matrix(1.56 0.002 0 1 92.25 190.49)" font-size="5.6" text-anchor="middle">1</text>
<text transform="matrix(1.56 0.002 0 1 110.75 190.49)" font-size="5.6" text-anchor="middle">2-103</text>
<text transform="matrix(1.17 0.002 0 1 139.75 190.64)" font-size="5.4" text-anchor="middle" class="k k1"><tspan>三</tspan>室两厅</text>
<text transform="matrix(1.56 0.002 0 1 161.3 190.49)" font-size="5.6" text-anchor="middle">3.0</text>
<text transform="matrix(1.56 0.002 0 1 180.65 190.49)" font-size="5.6" text-anchor="middle">111.99</text>
<text transform="matrix(1.56 0.002 0 1 204.85 190.49)" font-size="5.6" text-anchor="middle">86.18</text>
<text transform="matrix(1.56 0.002 0 1 227.45 190.49)" font-size="5.6" text-anchor="middle">25.81</text>
<text transform="matrix(1.56 0.002 0 1 249.6 190.49)" font-size="5.6" text-anchor="middle">6658</text>
<text transform="matrix(1.56 0.002 0 1 336.25 190.49)" font-size="5.6" text-anchor="middle">745629</text>
<text transform="matrix(1.56 0.002 0 1 81.15 197.45)" font-size="5.6" text-anchor="middle">1</text>
<text transform="matrix(1.56 0.002 0 1 92.25 197.45)" font-size="5.6" text-anchor="middle">1</text>
<text transform="matrix(1.56 0.002 0 1 110.75 197.45)" font-size="5.6" text-anchor="middle">2-104</text>
<text transform="matrix(1.17 0.002 0 1 139.75 197.6)" font-size="5.4" text-anchor="middle" class="k k1"><tspan>三</tspan>室两厅</text>
<text transform="matrix(1.56 0.002 0 1 161.3 197.45)" font-size="5.6" text-anchor="middle">3.0</text>
<text transform="matrix(1.56 0.002 0 1 180.65 197.45)" font-size="5.6" text-anchor="middle">125.97</text>
<text transform="matrix(1.56 0.002 0 1 204.85 197.45)" font-size="5.6" text-anchor="middle">96.94</text>
<text transform="matrix(1.56 0.002 0 1 227.45 197.45)" font-size="5.6" text-anchor="middle">29.03</text>
<text transform="matrix(1.56 0.002 0 1 249.6 197.45)" font-size="5.6" text-anchor="middle">6408</text>
<text transform="matrix(1.56 0.002 0 1 336.25 197.45)" font-size="5.6" text-anchor="middle">807216</text>
<text transform="matrix(1.56 0.002 0 1 81.15 204.4)" font-size="5.6" text-anchor="middle">1</text>
<text transform="matrix(1.56 0.002 0 1 92.25 204.4)" font-size="5.6" text-anchor="middle">2</text>
<text transform="matrix(1.56 0.002 0 1 110.75 204.4)" font-size="5.6" text-anchor="middle">1-201</text>
<text transform="matrix(1.17 0.002 0 1 139.75 204.55)" font-size="5.4" text-anchor="middle" class="k k1"><tspan>三</tspan>室两厅</text>
<text transform="matrix(1.56 0.002 0 1 161.3 204.4)" font-size="5.6" text-anchor="middle">3.0</text>
<text transform="matrix(1.56 0.002 0 1 180.65 204.4)" font-size="5.6" text-anchor="middle">125.97</text>
<text transform="matrix(1.56 0.002 0 1 204.85 204.4)" font-size="5.6" text-anchor="middle">96.94</text>
<text transform="matrix(1.56 0.002 0 1 227.45 204.4)" font-size="5.6" text-anchor="middle">29.03</text>
<text transform="matrix(1.56 0.002 0 1 249.6 204.4)" font-size="5.6" text-anchor="middle">6438</text>
<text transform="matrix(1.56 0.002 0 1 336.25 204.4)" font-size="5.6" text-anchor="middle">810995</text>
<text transform="matrix(1.56 0.002 0 1 81.15 211.35)" font-size="5.6" text-anchor="middle">1</text>
<text transform="matrix(1.56 0.002 0 1 92.25 211.35)" font-size="5.6" text-anchor="middle">2</text>
<text transform="matrix(1.56 0.002 0 1 110.75 211.35)" font-size="5.6" text-anchor="middle">1-202</text>
<text transform="matrix(1.17 0.002 0 1 139.75 211.5)" font-size="5.4" text-anchor="middle" class="k k1"><tspan>三</tspan>室两厅</text>
<text transform="matrix(1.56 0.002 0 1 161.3 211.35)" font-size="5.6" text-anchor="middle">3.0</text>
<text transform="matrix(1.56 0.002 0 1 180.65 211.35)" font-size="5.6" text-anchor="middle">111.99</text>
<text transform="matrix(1.56 0.002 0 1 204.85 211.35)" font-size="5.6" text-anchor="middle">86.18</text>
<text transform="matrix(1.56 0.002 0 1 227.45 211.35)" font-size="5.6" text-anchor="middle">25.81</text>
<text transform="matrix(1.56 0.002 0 1 249.6 211.35)" font-size="5.6" text-anchor="middle">6688</text>
<text transform="matrix(1.56 0.002 0 1 336.25 211.35)" font-size="5.6" text-anchor="middle">748989</text>
<text transform="matrix(1.56 0.002 0 1 81.15 218.3)" font-size="5.6" text-anchor="middle">1</text>
<text transform="matrix(1.56 0.002 0 1 92.25 218.3)" font-size="5.6" text-anchor="middle">2</text>
<text transform="matrix(1.56 0.002 0 1 110.75 218.3)" font-size="5.6" text-anchor="middle">1-203</text>
<text transform="matrix(1.17 0.002 0 1 139.75 218.45)" font-size="5.4" text-anchor="middle" class="k k1"><tspan>三</tspan>室两厅</text>
<text transform="matrix(1.56 0.002 0 1 161.3 218.3)" font-size="5.6" text-anchor="middle">3.0</text>
<text transform="matrix(1.56 0.002 0 1 180.65 218.3)" font-size="5.6" text-anchor="middle">111.99</text>
<text transform="matrix(1.56 0.002 0 1 204.85 218.3)" font-size="5.6" text-anchor="middle">86.18</text>
<text transform="matrix(1.56 0.002 0 1 227.45 218.3)" font-size="5.6" text-anchor="middle">25.81</text>
<text transform="matrix(1.56 0.002 0 1 249.6 218.3)" font-size="5.6" text-anchor="middle">6688</text>
<text transform="matrix(1.56 0.002 0 1 336.25 218.3)" font-size="5.6" text-anchor="middle">748989</text>
<text transform="matrix(1.56 0.002 0 1 81.15 225.26)" font-size="5.6" text-anchor="middle">1</text>
<text transform="matrix(1.56 0.002 0 1 92.25 225.26)" font-size="5.6" text-anchor="middle">2</text>
<text transform="matrix(1.56 0.002 0 1 110.75 225.26)" font-size="5.6" text-anchor="middle">1-204</text>
<text transform="matrix(1.17 0.002 0 1 139.75 225.41)" font-size="5.4" text-anchor="middle" class="k k1"><tspan>三</tspan>室两厅</text>
<text transform="matrix(1.56 0.002 0 1 161.3 225.26)" font-size="5.6" text-anchor="middle">3.0</text>
<text transform="matrix(1.56 0.002 0 1 180.65 225.26)" font-size="5.6" text-anchor="middle">130.19</text>
<text transform="matrix(1.56 0.002 0 1 204.85 225.26)" font-size="5.6" text-anchor="middle">100.19</text>
<text transform="matrix(1.56 0.002 0 1 227.45 225.26)" font-size="5.6" text-anchor="middle">30.00</text>
<text transform="matrix(1.56 0.002 0 1 249.6 225.26)" font-size="5.6" text-anchor="middle">6158</text>
<text transform="matrix(1.56 0.002 0 1 336.25 225.26)" font-size="5.6" text-anchor="middle">801710</text>
<text transform="matrix(1.56 0.002 0 1 81.15 232.21)" font-size="5.6" text-anchor="middle">1</text>
<text transform="matrix(1.56 0.002 0 1 92.25 232.21)" font-size="5.6" text-anchor="middle">2</text>
<text transform="matrix(1.56 0.002 0 1 110.75 232.21)" font-size="5.6" text-anchor="middle">2-201</text>
<text transform="matrix(1.17 0.002 0 1 139.75 232.36)" font-size="5.4" text-anchor="middle" class="k k1"><tspan>三</tspan>室两厅</text>
<text transform="matrix(1.56 0.002 0 1 161.3 232.21)" font-size="5.6" text-anchor="middle">3.0</text>
<text transform="matrix(1.56 0.002 0 1 180.65 232.21)" font-size="5.6" text-anchor="middle">130.19</text>
<text transform="matrix(1.56 0.002 0 1 204.85 232.21)" font-size="5.6" text-anchor="middle">100.19</text>
<text transform="matrix(1.56 0.002 0 1 227.45 232.21)" font-size="5.6" text-anchor="middle">30.00</text>
<text transform="matrix(1.56 0.002 0 1 249.6 232.21)" font-size="5.6" text-anchor="middle">6158</text>
<text transform="matrix(1.56 0.002 0 1 336.25 232.21)" font-size="5.6" text-anchor="middle">801710</text>
<text transform="matrix(1.56 0.002 0 1 81.15 239.16)" font-size="5.6" text-anchor="middle">1</text>
<text transform="matrix(1.56 0.002 0 1 92.25 239.16)" font-size="5.6" text-anchor="middle">2</text>
<text transform="matrix(1.56 0.002 0 1 110.75 239.16)" font-size="5.6" text-anchor="middle">2-202</text>
<text transform="matrix(1.17 0.002 0 1 139.75 239.31)" font-size="5.4" text-anchor="middle" class="k k1"><tspan>三</tspan>室两厅</text>
<text transform="matrix(1.56 0.002 0 1 161.3 239.16)" font-size="5.6" text-anchor="middle">3.0</text>
<text transform="matrix(1.56 0.002 0 1 180.65 239.16)" font-size="5.6" text-anchor="middle">111.99</text>
<text transform="matrix(1.56 0.002 0 1 204.85 239.16)" font-size="5.6" text-anchor="middle">86.18</text>
<text transform="matrix(1.56 0.002 0 1 227.45 239.16)" font-size="5.6" text-anchor="middle">25.81</text>
<text transform="matrix(1.56 0.002 0 1 249.6 239.16)" font-size="5.6" text-anchor="middle">6688</text>
<text transform="matrix(1.56 0.002 0 1 336.25 239.16)" font-size="5.6" text-anchor="middle">748989</text>
<text transform="matrix(1.56 0.002 0 1 81.15 246.11)" font-size="5.6" text-anchor="middle">1</text>
<text transform="matrix(1.56 0.002 0 1 92.25 246.11)" font-size="5.6" text-anchor="middle">2</text>
<text transform="matrix(1.56 0.002 0 1 110.75 246.11)" font-size="5.6" text-anchor="middle">2-203</text>
<text transform="matrix(1.17 0.002 0 1 139.75 246.26)" font-size="5.4" text-anchor="middle" class="k k1"><tspan>三</tspan>室两厅</text>
<text transform="matrix(1.56 0.002 0 1 161.3 246.11)" font-size="5.6" text-anchor="middle">3.0</text>
<text transform="matrix(1.56 0.002 0 1 180.65 246.11)" font-size="5.6" text-anchor="middle">111.99</text>
<text transform="matrix(1.56 0.002 0 1 204.85 246.11)" font-size="5.6" text-anchor="middle">86.18</text>
<text transform="matrix(1.56 0.002 0 1 227.45 246.11)" font-size="5.6" text-anchor="middle">25.81</text>
<text transform="matrix(1.56 0.002 0 1 249.6 246.11)" font-size="5.6" text-anchor="middle">6688</text>
<text transform="matrix(1.56 0.002 0 1 336.25 246.11)" font-size="5.6" text-anchor="middle">748989</text>
<text transform="matrix(1.56 0.002 0 1 81.15 253.07)" font-size="5.6" text-anchor="middle">1</text>
<text transform="matrix(1.56 0.002 0 1 92.25 253.07)" font-size="5.6" text-anchor="middle">2</text>
<text transform="matrix(1.56 0.002 0 1 110.75 253.07)" font-size="5.6" text-anchor="middle">2-204</text>
<text transform="matrix(1.17 0.002 0 1 139.75 253.22)" font-size="5.4" text-anchor="middle" class="k k1"><tspan>三</tspan>室两厅</text>
<text transform="matrix(1.56 0.002 0 1 161.3 253.07)" font-size="5.6" text-anchor="middle">3.0</text>
<text transform="matrix(1.56 0.002 0 1 180.65 253.07)" font-size="5.6" text-anchor="middle">125.97</text>
<text transform="matrix(1.56 0.002 0 1 204.85 253.07)" font-size="5.6" text-anchor="middle">96.94</text>
<text transform="matrix(1.56 0.002 0 1 227.45 253.07)" font-size="5.6" text-anchor="middle">29.03</text>
<text transform="matrix(1.56 0.002 0 1 249.6 253.07)" font-size="5.6" text-anchor="middle">6438</text>
<text transform="matrix(1.56 0.002 0 1 336.25 253.07)" font-size="5.6" text-anchor="middle">810995</text>
<text transform="matrix(1.56 0.002 0 1 81.15 260.02)" font-size="5.6" text-anchor="middle">1</text>
<text transform="matrix(1.56 0.002 0 1 92.25 260.02)" font-size="5.6" text-anchor="middle">3</text>
<text transform="matrix(1.56 0.002 0 1 110.75 260.02)" font-size="5.6" text-anchor="middle">1-301</text>
<text transform="matrix(1.17 0.002 0 1 139.75 260.17)" font-size="5.4" text-anchor="middle" class="k k1"><tspan>三</tspan>室两厅</text>
<text transform="matrix(1.56 0.002 0 1 161.3 260.02)" font-size="5.6" text-anchor="middle">3.0</text>
<text transform="matrix(1.56 0.002 0 1 180.65 260.02)" font-size="5.6" text-anchor="middle">125.97</text>
<text transform="matrix(1.56 0.002 0 1 204.85 260.02)" font-size="5.6" text-anchor="middle">96.94</text>
<text transform="matrix(1.56 0.002 0 1 227.45 260.02)" font-size="5.6" text-anchor="middle">29.03</text>
<text transform="matrix(1.56 0.002 0 1 249.6 260.02)" font-size="5.6" text-anchor="middle">6468</text>
<text transform="matrix(1.56 0.002 0 1 336.25 260.02)" font-size="5.6" text-anchor="middle">814774</text>
<text transform="matrix(1.56 0.002 0 1 81.15 266.97)" font-size="5.6" text-anchor="middle">1</text>
<text transform="matrix(1.56 0.002 0 1 92.25 266.97)" font-size="5.6" text-anchor="middle">3</text>
<text transform="matrix(1.56 0.002 0 1 110.75 266.97)" font-size="5.6" text-anchor="middle">1-302</text>
<text transform="matrix(1.17 0.002 0 1 139.75 267.12)" font-size="5.4" text-anchor="middle" class="k k1"><tspan>三</tspan>室两厅</text>
<text transform="matrix(1.56 0.002 0 1 161.3 266.97)" font-size="5.6" text-anchor="middle">3.0</text>
<text transform="matrix(1.56 0.002 0 1 180.65 266.97)" font-size="5.6" text-anchor="middle">111.99</text>
<text transform="matrix(1.56 0.002 0 1 204.85 266.97)" font-size="5.6" text-anchor="middle">86.18</text>
<text transform="matrix(1.56 0.002 0 1 227.45 266.97)" font-size="5.6" text-anchor="middle">25.81</text>
<text transform="matrix(1.56 0.002 0 1 249.6 266.97)" font-size="5.6" text-anchor="middle">6718</text>
<text transform="matrix(1.56 0.002 0 1 336.25 266.97)" font-size="5.6" text-anchor="middle">752349</text>
<text transform="matrix(1.56 0.002 0 1 81.15 273.93)" font-size="5.6" text-anchor="middle">1</text>
<text transform="matrix(1.56 0.002 0 1 92.25 273.93)" font-size="5.6" text-anchor="middle">3</text>
<text transform="matrix(1.56 0.002 0 1 110.75 273.93)" font-size="5.6" text-anchor="middle">1-303</text>
<text transform="matrix(1.17 0.002 0 1 139.75 274.08)" font-size="5.4" text-anchor="middle" class="k k1"><tspan>三</tspan>室两厅</text>
<text transform="matrix(1.56 0.002 0 1 161.3 273.93)" font-size="5.6" text-anchor="middle">3.0</text>
<text transform="matrix(1.56 0.002 0 1 180.65 273.93)" font-size="5.6" text-anchor="middle">111.99</text>
<text transform="matrix(1.56 0.002 0 1 204.85 273.93)" font-size="5.6" text-anchor="middle">86.18</text>
<text transform="matrix(1.56 0.002 0 1 227.45 273.93)" font-size="5.6" text-anchor="middle">25.81</text>
<text transform="matrix(1.56 0.002 0 1 249.6 273.93)" font-size="5.6" text-anchor="middle">6718</text>
<text transform="matrix(1.56 0.002 0 1 336.25 273.93)" font-size="5.6" text-anchor="middle">752349</text>
<text transform="matrix(1.56 0.002 0 1 81.15 280.88)" font-size="5.6" text-anchor="middle">1</text>
<text transform="matrix(1.56 0.002 0 1 92.25 280.88)" font-size="5.6" text-anchor="middle">3</text>
<text transform="matrix(1.56 0.002 0 1 110.75 280.88)" font-size="5.6" text-anchor="middle">1-304</text>
<text transform="matrix(1.17 0.002 0 1 139.75 281.03)" font-size="5.4" text-anchor="middle" class="k k1"><tspan>三</tspan>室两厅</text>
<text transform="matrix(1.56 0.002 0 1 161.3 280.88)" font-size="5.6" text-anchor="middle">3.0</text>
<text transform="matrix(1.56 0.002 0 1 180.65 280.88)" font-size="5.6" text-anchor="middle">130.19</text>
<text transform="matrix(1.56 0.002 0 1 204.85 280.88)" font-size="5.6" text-anchor="middle">100.19</text>
<text transform="matrix(1.56 0.002 0 1 227.45 280.88)" font-size="5.6" text-anchor="middle">30.00</text>
<text transform="matrix(1.56 0.002 0 1 249.6 280.88)" font-size="5.6" text-anchor="middle">6188</text>
<text transform="matrix(1.56 0.002 0 1 336.25 280.88)" font-size="5.6" text-anchor="middle">805616</text>
<text transform="matrix(1.56 0.002 0 1 81.15 287.83)" font-size="5.6" text-anchor="middle">1</text>
<text transform="matrix(1.56 0.002 0 1 92.25 287.83)" font-size="5.6" text-anchor="middle">3</text>
<text transform="matrix(1.56 0.002 0 1 110.75 287.83)" font-size="5.6" text-anchor="middle">2-301</text>
<text transform="matrix(1.17 0.002 0 1 139.75 287.98)" font-size="5.4" text-anchor="middle" class="k k1"><tspan>三</tspan>室两厅</text>
<text transform="matrix(1.56 0.002 0 1 161.3 287.83)" font-size="5.6" text-anchor="middle">3.0</text>
<text transform="matrix(1.56 0.002 0 1 180.65 287.83)" font-size="5.6" text-anchor="middle">130.19</text>
<text transform="matrix(1.56 0.002 0 1 204.85 287.83)" font-size="5.6" text-anchor="middle">100.19</text>
<text transform="matrix(1.56 0.002 0 1 227.45 287.83)" font-size="5.6" text-anchor="middle">30.00</text>
<text transform="matrix(1.56 0.002 0 1 249.6 287.83)" font-size="5.6" text-anchor="middle">6188</text>
<text transform="matrix(1.56 0.002 0 1 336.25 287.83)" font-size="5.6" text-anchor="middle">805616</text>
<text transform="matrix(1.56 0.002 0 1 81.15 294.78)" font-size="5.6" text-anchor="middle">1</text>
<text transform="matrix(1.56 0.002 0 1 92.25 294.78)" font-size="5.6" text-anchor="middle">3</text>
<text transform="matrix(1.56 0.002 0 1 110.75 294.78)" font-size="5.6" text-anchor="middle">2-302</text>
<text transform="matrix(1.17 0.002 0 1 139.75 294.93)" font-size="5.4" text-anchor="middle" class="k k1"><tspan>三</tspan>室两厅</text>
<text transform="matrix(1.56 0.002 0 1 161.3 294.78)" font-size="5.6" text-anchor="middle">3.0</text>
<text transform="matrix(1.56 0.002 0 1 180.65 294.78)" font-size="5.6" text-anchor="middle">111.99</text>
<text transform="matrix(1.56 0.002 0 1 204.85 294.78)" font-size="5.6" text-anchor="middle">86.18</text>
<text transform="matrix(1.56 0.002 0 1 227.45 294.78)" font-size="5.6" text-anchor="middle">25.81</text>
<text transform="matrix(1.56 0.002 0 1 249.6 294.78)" font-size="5.6" text-anchor="middle">6718</text>
<text transform="matrix(1.56 0.002 0 1 336.25 294.78)" font-size="5.6" text-anchor="middle">752349</text>
<text transform="matrix(1.56 0.002 0 1 81.15 301.74)" font-size="5.6" text-anchor="middle">1</text>
<text transform="matrix(1.56 0.002 0 1 92.25 301.74)" font-size="5.6" text-anchor="middle">3</text>
<text transform="matrix(1.56 0.002 0 1 110.75 301.74)" font-size="5.6" text-anchor="middle">2-303</text>
<text transform="matrix(1.17 0.002 0 1 139.75 301.89)" font-size="5.4" text-anchor="middle" class="k k1"><tspan>三</tspan>室两厅</text>
<text transform="matrix(1.56 0.002 0 1 161.3 301.74)" font-size="5.6" text-anchor="middle">3.0</text>
<text transform="matrix(1.56 0.002 0 1 180.65 301.74)" font-size="5.6" text-anchor="middle">111.99</text>
<text transform="matrix(1.56 0.002 0 1 204.85 301.74)" font-size="5.6" text-anchor="middle">86.18</text>
<text transform="matrix(1.56 0.002 0 1 227.45 301.74)" font-size="5.6" text-anchor="middle">25.81</text>
<text transform="matrix(1.56 0.002 0 1 249.6 301.74)" font-size="5.6" text-anchor="middle">6718</text>
<text transform="matrix(1.56 0.002 0 1 336.25 301.74)" font-size="5.6" text-anchor="middle">752349</text>
<text transform="matrix(1.56 0.002 0 1 81.15 308.69)" font-size="5.6" text-anchor="middle">1</text>
<text transform="matrix(1.56 0.002 0 1 92.25 308.69)" font-size="5.6" text-anchor="middle">3</text>
<text transform="matrix(1.56 0.002 0 1 110.75 308.69)" font-size="5.6" text-anchor="middle">2-304</text>
<text transform="matrix(1.17 0.002 0 1 139.75 308.84)" font-size="5.4" text-anchor="middle" class="k k1"><tspan>三</tspan>室两厅</text>
<text transform="matrix(1.56 0.002 0 1 161.3 308.69)" font-size="5.6" text-anchor="middle">3.0</text>
<text transform="matrix(1.56 0.002 0 1 180.65 308.69)" font-size="5.6" text-anchor="middle">125.97</text>
<text transform="matrix(1.56 0.002 0 1 204.85 308.69)" font-size="5.6" text-anchor="middle">96.94</text>
<text transform="matrix(1.56 0.002 0 1 227.45 308.69)" font-size="5.6" text-anchor="middle">29.03</text>
<text transform="matrix(1.56 0.002 0 1 249.6 308.69)" font-size="5.6" text-anchor="middle">6468</text>
<text transform="matrix(1.56 0.002 0 1 336.25 308.69)" font-size="5.6" text-anchor="middle">814774</text>
<text transform="matrix(1.56 0.002 0 1 81.15 315.64)" font-size="5.6" text-anchor="middle">1</text>
<text transform="matrix(1.56 0.002 0 1 92.25 315.64)" font-size="5.6" text-anchor="middle">4</text>
<text transform="matrix(1.56 0.002 0 1 110.75 315.64)" font-size="5.6" text-anchor="middle">1-401</text>
<text transform="matrix(1.17 0.002 0 1 139.75 315.79)" font-size="5.4" text-anchor="middle" class="k k1"><tspan>三</tspan>室两厅</text>
<text transform="matrix(1.56 0.002 0 1 161.3 315.64)" font-size="5.6" text-anchor="middle">3.0</text>
<text transform="matrix(1.56 0.002 0 1 180.65 315.64)" font-size="5.6" text-anchor="middle">125.97</text>
<text transform="matrix(1.56 0.002 0 1 204.85 315.64)" font-size="5.6" text-anchor="middle">96.94</text>
<text transform="matrix(1.56 0.002 0 1 227.45 315.64)" font-size="5.6" text-anchor="middle">29.03</text>
<text transform="matrix(1.56 0.002 0 1 249.6 315.64)" font-size="5.6" text-anchor="middle">6498</text>
<text transform="matrix(1.56 0.002 0 1 336.25 315.64)" font-size="5.6" text-anchor="middle">818553</text>
<text transform="matrix(1.56 0.002 0 1 81.15 322.59)" font-size="5.6" text-anchor="middle">1</text>
<text transform="matrix(1.56 0.002 0 1 92.25 322.59)" font-size="5.6" text-anchor="middle">4</text>
<text transform="matrix(1.56 0.002 0 1 110.75 322.59)" font-size="5.6" text-anchor="middle">1-402</text>
<text transform="matrix(1.17 0.002 0 1 139.75 322.74)" font-size="5.4" text-anchor="middle" class="k k1"><tspan>三</tspan>室两厅</text>
<text transform="matrix(1.56 0.002 0 1 161.3 322.59)" font-size="5.6" text-anchor="middle">3.0</text>
<text transform="matrix(1.56 0.002 0 1 180.65 322.59)" font-size="5.6" text-anchor="middle">111.99</text>
<text transform="matrix(1.56 0.002 0 1 204.85 322.59)" font-size="5.6" text-anchor="middle">86.18</text>
<text transform="matrix(1.56 0.002 0 1 227.45 322.59)" font-size="5.6" text-anchor="middle">25.81</text>
<text transform="matrix(1.56 0.002 0 1 249.6 322.59)" font-size="5.6" text-anchor="middle">6748</text>
<text transform="matrix(1.56 0.002 0 1 336.25 322.59)" font-size="5.6" text-anchor="middle">755709</text>
<text transform="matrix(1.56 0.002 0 1 81.15 329.55)" font-size="5.6" text-anchor="middle">1</text>
<text transform="matrix(1.56 0.002 0 1 92.25 329.55)" font-size="5.6" text-anchor="middle">4</text>
<text transform="matrix(1.56 0.002 0 1 110.75 329.55)" font-size="5.6" text-anchor="middle">1-403</text>
<text transform="matrix(1.17 0.002 0 1 139.75 329.7)" font-size="5.4" text-anchor="middle" class="k k1"><tspan>三</tspan>室两厅</text>
<text transform="matrix(1.56 0.002 0 1 161.3 329.55)" font-size="5.6" text-anchor="middle">3.0</text>
<text transform="matrix(1.56 0.002 0 1 180.65 329.55)" font-size="5.6" text-anchor="middle">111.99</text>
<text transform="matrix(1.56 0.002 0 1 204.85 329.55)" font-size="5.6" text-anchor="middle">86.18</text>
<text transform="matrix(1.56 0.002 0 1 227.45 329.55)" font-size="5.6" text-anchor="middle">25.81</text>
<text transform="matrix(1.56 0.002 0 1 249.6 329.55)" font-size="5.6" text-anchor="middle">6748</text>
<text transform="matrix(1.56 0.002 0 1 336.25 329.55)" font-size="5.6" text-anchor="middle">755709</text>
<text transform="matrix(1.56 0.002 0 1 81.15 336.5)" font-size="5.6" text-anchor="middle">1</text>
<text transform="matrix(1.56 0.002 0 1 92.25 336.5)" font-size="5.6" text-anchor="middle">4</text>
<text transform="matrix(1.56 0.002 0 1 110.75 336.5)" font-size="5.6" text-anchor="middle">1-404</text>
<text transform="matrix(1.17 0.002 0 1 139.75 336.65)" font-size="5.4" text-anchor="middle" class="k k1"><tspan>三</tspan>室两厅</text>
<text transform="matrix(1.56 0.002 0 1 161.3 336.5)" font-size="5.6" text-anchor="middle">3.0</text>
<text transform="matrix(1.56 0.002 0 1 180.65 336.5)" font-size="5.6" text-anchor="middle">130.19</text>
<text transform="matrix(1.56 0.002 0 1 204.85 336.5)" font-size="5.6" text-anchor="middle">100.19</text>
<text transform="matrix(1.56 0.002 0 1 227.45 336.5)" font-size="5.6" text-anchor="middle">30.00</text>
<text transform="matrix(1.56 0.002 0 1 249.6 336.5)" font-size="5.6" text-anchor="middle">6218</text>
<text transform="matrix(1.56 0.002 0 1 336.25 336.5)" font-size="5.6" text-anchor="middle">809521</text>
<text transform="matrix(1.56 0.002 0 1 81.15 343.45)" font-size="5.6" text-anchor="middle">1</text>
<text transform="matrix(1.56 0.002 0 1 92.25 343.45)" font-size="5.6" text-anchor="middle">4</text>
<text transform="matrix(1.56 0.002 0 1 110.75 343.45)" font-size="5.6" text-anchor="middle">2-401</text>
<text transform="matrix(1.17 0.002 0 1 139.75 343.6)" font-size="5.4" text-anchor="middle" class="k k1"><tspan>三</tspan>室两厅</text>
<text transform="matrix(1.56 0.002 0 1 161.3 343.45)" font-size="5.6" text-anchor="middle">3.0</text>
<text transform="matrix(1.56 0.002 0 1 180.65 343.45)" font-size="5.6" text-anchor="middle">130.19</text>
<text transform="matrix(1.56 0.002 0 1 204.85 343.45)" font-size="5.6" text-anchor="middle">100.19</text>
<text transform="matrix(1.56 0.002 0 1 227.45 343.45)" font-size="5.6" text-anchor="middle">30.00</text>
<text transform="matrix(1.56 0.002 0 1 249.6 343.45)" font-size="5.6" text-anchor="middle">6218</text>
<text transform="matrix(1.56 0.002 0 1 336.25 343.45)" font-size="5.6" text-anchor="middle">809521</text>
<text transform="matrix(1.56 0.002 0 1 81.15 350.41)" font-size="5.6" text-anchor="middle">1</text>
<text transform="matrix(1.56 0.002 0 1 92.25 350.41)" font-size="5.6" text-anchor="middle">4</text>
<text transform="matrix(1.56 0.002 0 1 110.75 350.41)" font-size="5.6" text-anchor="middle">2-402</text>
<text transform="matrix(1.17 0.002 0 1 139.75 350.56)" font-size="5.4" text-anchor="middle" class="k k1"><tspan>三</tspan>室两厅</text>
<text transform="matrix(1.56 0.002 0 1 161.3 350.41)" font-size="5.6" text-anchor="middle">3.0</text>
<text transform="matrix(1.56 0.002 0 1 180.65 350.41)" font-size="5.6" text-anchor="middle">111.99</text>
<text transform="matrix(1.56 0.002 0 1 204.85 350.41)" font-size="5.6" text-anchor="middle">86.18</text>
<text transform="matrix(1.56 0.002 0 1 227.45 350.41)" font-size="5.6" text-anchor="middle">25.81</text>
<text transform="matrix(1.56 0.002 0 1 249.6 350.41)" font-size="5.6" text-anchor="middle">6748</text>
<text transform="matrix(1.56 0.002 0 1 336.25 350.41)" font-size="5.6" text-anchor="middle">755709</text>
<text transform="matrix(1.56 0.002 0 1 81.15 357.36)" font-size="5.6" text-anchor="middle">1</text>
<text transform="matrix(1.56 0.002 0 1 92.25 357.36)" font-size="5.6" text-anchor="middle">4</text>
<text transform="matrix(1.56 0.002 0 1 110.75 357.36)" font-size="5.6" text-anchor="middle">2-403</text>
<text transform="matrix(1.17 0.002 0 1 139.75 357.51)" font-size="5.4" text-anchor="middle" class="k k1"><tspan>三</tspan>室两厅</text>
<text transform="matrix(1.56 0.002 0 1 161.3 357.36)" font-size="5.6" text-anchor="middle">3.0</text>
<text transform="matrix(1.56 0.002 0 1 180.65 357.36)" font-size="5.6" text-anchor="middle">111.99</text>
<text transform="matrix(1.56 0.002 0 1 204.85 357.36)" font-size="5.6" text-anchor="middle">86.18</text>
<text transform="matrix(1.56 0.002 0 1 227.45 357.36)" font-size="5.6" text-anchor="middle">25.81</text>
<text transform="matrix(1.56 0.002 0 1 249.6 357.36)" font-size="5.6" text-anchor="middle">6748</text>
<text transform="matrix(1.56 0.002 0 1 336.25 357.36)" font-size="5.6" text-anchor="middle">755709</text>
<text transform="matrix(1.56 0.002 0 1 81.15 364.31)" font-size="5.6" text-anchor="middle">1</text>
<text transform="matrix(1.56 0.002 0 1 92.25 364.31)" font-size="5.6" text-anchor="middle">4</text>
<text transform="matrix(1.56 0.002 0 1 110.75 364.31)" font-size="5.6" text-anchor="middle">2-404</text>
<text transform="matrix(1.17 0.002 0 1 139.75 364.46)" font-size="5.4" text-anchor="middle" class="k k1"><tspan>三</tspan>室两厅</text>
<text transform="matrix(1.56 0.002 0 1 161.3 364.31)" font-size="5.6" text-anchor="middle">3.0</text>
<text transform="matrix(1.56 0.002 0 1 180.65 364.31)" font-size="5.6" text-anchor="middle">125.97</text>
<text transform="matrix(1.56 0.002 0 1 204.85 364.31)" font-size="5.6" text-anchor="middle">96.94</text>
<text transform="matrix(1.56 0.002 0 1 227.45 364.31)" font-size="5.6" text-anchor="middle">29.03</text>
<text transform="matrix(1.56 0.002 0 1 249.6 364.31)" font-size="5.6" text-anchor="middle">6498</text>
<text transform="matrix(1.56 0.002 0 1 336.25 364.31)" font-size="5.6" text-anchor="middle">818553</text>
<text transform="matrix(1.56 0.002 0 1 81.15 371.26)" font-size="5.6" text-anchor="middle">1</text>
<text transform="matrix(1.56 0.002 0 1 92.25 371.26)" font-size="5.6" text-anchor="middle">5</text>
<text transform="matrix(1.56 0.002 0 1 110.75 371.26)" font-size="5.6" text-anchor="middle">1-501</text>
<text transform="matrix(1.17 0.002 0 1 139.75 371.41)" font-size="5.4" text-anchor="middle" class="k k1"><tspan>三</tspan>室两厅</text>
<text transform="matrix(1.56 0.002 0 1 161.3 371.26)" font-size="5.6" text-anchor="middle">3.0</text>
<text transform="matrix(1.56 0.002 0 1 180.65 371.26)" font-size="5.6" text-anchor="middle">125.97</text>
<text transform="matrix(1.56 0.002 0 1 204.85 371.26)" font-size="5.6" text-anchor="middle">96.94</text>
<text transform="matrix(1.56 0.002 0 1 227.45 371.26)" font-size="5.6" text-anchor="middle">29.03</text>
<text transform="matrix(1.56 0.002 0 1 249.6 371.26)" font-size="5.6" text-anchor="middle">6528</text>
<text transform="matrix(1.56 0.002 0 1 336.25 371.26)" font-size="5.6" text-anchor="middle">822332</text>
<text transform="matrix(1.56 0.002 0 1 81.15 378.22)" font-size="5.6" text-anchor="middle">1</text>
<text transform="matrix(1.56 0.002 0 1 92.25 378.22)" font-size="5.6" text-anchor="middle">5</text>
<text transform="matrix(1.56 0.002 0 1 110.75 378.22)" font-size="5.6" text-anchor="middle">1-502</text>
<text transform="matrix(1.17 0.002 0 1 139.75 378.37)" font-size="5.4" text-anchor="middle" class="k k1"><tspan>三</tspan>室两厅</text>
<text transform="matrix(1.56 0.002 0 1 161.3 378.22)" font-size="5.6" text-anchor="middle">3.0</text>
<text transform="matrix(1.56 0.002 0 1 180.65 378.22)" font-size="5.6" text-anchor="middle">111.99</text>
<text transform="matrix(1.56 0.002 0 1 204.85 378.22)" font-size="5.6" text-anchor="middle">86.18</text>
<text transform="matrix(1.56 0.002 0 1 227.45 378.22)" font-size="5.6" text-anchor="middle">25.81</text>
<text transform="matrix(1.56 0.002 0 1 249.6 378.22)" font-size="5.6" text-anchor="middle">6778</text>
<text transform="matrix(1.56 0.002 0 1 336.25 378.22)" font-size="5.6" text-anchor="middle">759068</text>
<text transform="matrix(1.56 0.002 0 1 81.15 385.17)" font-size="5.6" text-anchor="middle">1</text>
<text transform="matrix(1.56 0.002 0 1 92.25 385.17)" font-size="5.6" text-anchor="middle">5</text>
<text transform="matrix(1.56 0.002 0 1 110.75 385.17)" font-size="5.6" text-anchor="middle">1-503</text>
<text transform="matrix(1.17 0.002 0 1 139.75 385.32)" font-size="5.4" text-anchor="middle" class="k k1"><tspan>三</tspan>室两厅</text>
<text transform="matrix(1.56 0.002 0 1 161.3 385.17)" font-size="5.6" text-anchor="middle">3.0</text>
<text transform="matrix(1.56 0.002 0 1 180.65 385.17)" font-size="5.6" text-anchor="middle">111.99</text>
<text transform="matrix(1.56 0.002 0 1 204.85 385.17)" font-size="5.6" text-anchor="middle">86.18</text>
<text transform="matrix(1.56 0.002 0 1 227.45 385.17)" font-size="5.6" text-anchor="middle">25.81</text>
<text transform="matrix(1.56 0.002 0 1 249.6 385.17)" font-size="5.6" text-anchor="middle">6778</text>
<text transform="matrix(1.56 0.002 0 1 336.25 385.17)" font-size="5.6" text-anchor="middle">759068</text>
<text transform="matrix(1.56 0.002 0 1 81.15 392.12)" font-size="5.6" text-anchor="middle">1</text>
<text transform="matrix(1.56 0.002 0 1 92.25 392.12)" font-size="5.6" text-anchor="middle">5</text>
<text transform="matrix(1.56 0.002 0 1 110.75 392.12)" font-size="5.6" text-anchor="middle">1-504</text>
<text transform="matrix(1.17 0.002 0 1 139.75 392.27)" font-size="5.4" text-anchor="middle" class="k k1"><tspan>三</tspan>室两厅</text>
<text transform="matrix(1.56 0.002 0 1 161.3 392.12)" font-size="5.6" text-anchor="middle">3.0</text>
<text transform="matrix(1.56 0.002 0 1 180.65 392.12)" font-size="5.6" text-anchor="middle">130.19</text>
<text transform="matrix(1.56 0.002 0 1 204.85 392.12)" font-size="5.6" text-anchor="middle">100.19</text>
<text transform="matrix(1.56 0.002 0 1 227.45 392.12)" font-size="5.6" text-anchor="middle">30.00</text>
<text transform="matrix(1.56 0.002 0 1 249.6 392.12)" font-size="5.6" text-anchor="middle">6248</text>
<text transform="matrix(1.56 0.002 0 1 336.25 392.12)" font-size="5.6" text-anchor="middle">813427</text>
<text transform="matrix(1.56 0.002 0 1 81.15 399.08)" font-size="5.6" text-anchor="middle">1</text>
<text transform="matrix(1.56 0.002 0 1 92.25 399.08)" font-size="5.6" text-anchor="middle">5</text>
<text transform="matrix(1.56 0.002 0 1 110.75 399.08)" font-size="5.6" text-anchor="middle">2-501</text>
<text transform="matrix(1.17 0.002 0 1 139.75 399.23)" font-size="5.4" text-anchor="middle" class="k k1"><tspan>三</tspan>室两厅</text>
<text transform="matrix(1.56 0.002 0 1 161.3 399.08)" font-size="5.6" text-anchor="middle">3.0</text>
<text transform="matrix(1.56 0.002 0 1 180.65 399.08)" font-size="5.6" text-anchor="middle">130.19</text>
<text transform="matrix(1.56 0.002 0 1 204.85 399.08)" font-size="5.6" text-anchor="middle">100.19</text>
<text transform="matrix(1.56 0.002 0 1 227.45 399.08)" font-size="5.6" text-anchor="middle">30.00</text>
<text transform="matrix(1.56 0.002 0 1 249.6 399.08)" font-size="5.6" text-anchor="middle">6248</text>
<text transform="matrix(1.56 0.002 0 1 336.25 399.08)" font-size="5.6" text-anchor="middle">813427</text>
<text transform="matrix(1.56 0.002 0 1 81.15 406.03)" font-size="5.6" text-anchor="middle">1</text>
<text transform="matrix(1.56 0.002 0 1 92.25 406.03)" font-size="5.6" text-anchor="middle">5</text>
<text transform="matrix(1.56 0.002 0 1 110.75 406.03)" font-size="5.6" text-anchor="middle">2-502</text>
<text transform="matrix(1.17 0.002 0 1 139.75 406.18)" font-size="5.4" text-anchor="middle" class="k k1"><tspan>三</tspan>室两厅</text>
<text transform="matrix(1.56 0.002 0 1 161.3 406.03)" font-size="5.6" text-anchor="middle">3.0</text>
<text transform="matrix(1.56 0.002 0 1 180.65 406.03)" font-size="5.6" text-anchor="middle">111.99</text>
<text transform="matrix(1.56 0.002 0 1 204.85 406.03)" font-size="5.6" text-anchor="middle">86.18</text>
<text transform="matrix(1.56 0.002 0 1 227.45 406.03)" font-size="5.6" text-anchor="middle">25.81</text>
<text transform="matrix(1.56 0.002 0 1 249.6 406.03)" font-size="5.6" text-anchor="middle">6778</text>
<text transform="matrix(1.56 0.002 0 1 336.25 406.03)" font-size="5.6" text-anchor="middle">759068</text>
<text transform="matrix(1.56 0.002 0 1 81.15 412.98)" font-size="5.6" text-anchor="middle">1</text>
<text transform="matrix(1.56 0.002 0 1 92.25 412.98)" font-size="5.6" text-anchor="middle">5</text>
<text transform="matrix(1.56 0.002 0 1 110.75 412.98)" font-size="5.6" text-anchor="middle">2-503</text>
<text transform="matrix(1.17 0.002 0 1 139.75 413.13)" font-size="5.4" text-anchor="middle" class="k k1"><tspan>三</tspan>室两厅</text>
<text transform="matrix(1.56 0.002 0 1 161.3 412.98)" font-size="5.6" text-anchor="middle">3.0</text>
<text transform="matrix(1.56 0.002 0 1 180.65 412.98)" font-size="5.6" text-anchor="middle">111.99</text>
<text transform="matrix(1.56 0.002 0 1 204.85 412.98)" font-size="5.6" text-anchor="middle">86.18</text>
<text transform="matrix(1.56 0.002 0 1 227.45 412.98)" font-size="5.6" text-anchor="middle">25.81</text>
<text transform="matrix(1.56 0.002 0 1 249.6 412.98)" font-size="5.6" text-anchor="middle">6778</text>
<text transform="matrix(1.56 0.002 0 1 336.25 412.98)" font-size="5.6" text-anchor="middle">759068</text>
<text transform="matrix(1.56 0.002 0 1 81.15 419.93)" font-size="5.6" text-anchor="middle">1</text>
<text transform="matrix(1.56 0.002 0 1 92.25 419.93)" font-size="5.6" text-anchor="middle">5</text>
<text transform="matrix(1.56 0.002 0 1 110.75 419.93)" font-size="5.6" text-anchor="middle">2-504</text>
<text transform="matrix(1.17 0.002 0 1 139.75 420.08)" font-size="5.4" text-anchor="middle" class="k k1"><tspan>三</tspan>室两厅</text>
<text transform="matrix(1.56 0.002 0 1 161.3 419.93)" font-size="5.6" text-anchor="middle">3.0</text>
<text transform="matrix(1.56 0.002 0 1 180.65 419.93)" font-size="5.6" text-anchor="middle">125.97</text>
<text transform="matrix(1.56 0.002 0 1 204.85 419.93)" font-size="5.6" text-anchor="middle">96.94</text>
<text transform="matrix(1.56 0.002 0 1 227.45 419.93)" font-size="5.6" text-anchor="middle">29.03</text>
<text transform="matrix(1.56 0.002 0 1 249.6 419.93)" font-size="5.6" text-anchor="middle">6528</text>
<text transform="matrix(1.56 0.002 0 1 336.25 419.93)" font-size="5.6" text-anchor="middle">822332</text>
<text transform="matrix(1.56 0.002 0 1 81.15 426.89)" font-size="5.6" text-anchor="middle">1</text>
<text transform="matrix(1.56 0.002 0 1 92.25 426.89)" font-size="5.6" text-anchor="middle">6</text>
<text transform="matrix(1.56 0.002 0 1 110.75 426.89)" font-size="5.6" text-anchor="middle">1-601</text>
<text transform="matrix(1.17 0.002 0 1 139.75 427.04)" font-size="5.4" text-anchor="middle" class="k k1"><tspan>三</tspan>室两厅</text>
<text transform="matrix(1.56 0.002 0 1 161.3 426.89)" font-size="5.6" text-anchor="middle">3.0</text>
<text transform="matrix(1.56 0.002 0 1 180.65 426.89)" font-size="5.6" text-anchor="middle">125.97</text>
<text transform="matrix(1.56 0.002 0 1 204.85 426.89)" font-size="5.6" text-anchor="middle">96.94</text>
<text transform="matrix(1.56 0.002 0 1 227.45 426.89)" font-size="5.6" text-anchor="middle">29.03</text>
<text transform="matrix(1.56 0.002 0 1 249.6 426.89)" font-size="5.6" text-anchor="middle">6558</text>
<text transform="matrix(1.56 0.002 0 1 336.25 426.89)" font-size="5.6" text-anchor="middle">826111</text>
<text transform="matrix(1.56 0.002 0 1 81.15 433.84)" font-size="5.6" text-anchor="middle">1</text>
<text transform="matrix(1.56 0.002 0 1 92.25 433.84)" font-size="5.6" text-anchor="middle">6</text>
<text transform="matrix(1.56 0.002 0 1 110.75 433.84)" font-size="5.6" text-anchor="middle">1-602</text>
<text transform="matrix(1.17 0.002 0 1 139.75 433.99)" font-size="5.4" text-anchor="middle" class="k k1"><tspan>三</tspan>室两厅</text>
<text transform="matrix(1.56 0.002 0 1 161.3 433.84)" font-size="5.6" text-anchor="middle">3.0</text>
<text transform="matrix(1.56 0.002 0 1 180.65 433.84)" font-size="5.6" text-anchor="middle">111.99</text>
<text transform="matrix(1.56 0.002 0 1 204.85 433.84)" font-size="5.6" text-anchor="middle">86.18</text>
<text transform="matrix(1.56 0.002 0 1 227.45 433.84)" font-size="5.6" text-anchor="middle">25.81</text>
<text transform="matrix(1.56 0.002 0 1 249.6 433.84)" font-size="5.6" text-anchor="middle">6808</text>
<text transform="matrix(1.56 0.002 0 1 336.25 433.84)" font-size="5.6" text-anchor="middle">762428</text>
<text transform="matrix(1.56 0.002 0 1 81.15 440.79)" font-size="5.6" text-anchor="middle">1</text>
<text transform="matrix(1.56 0.002 0 1 92.25 440.79)" font-size="5.6" text-anchor="middle">6</text>
<text transform="matrix(1.56 0.002 0 1 110.75 440.79)" font-size="5.6" text-anchor="middle">1-603</text>
<text transform="matrix(1.17 0.002 0 1 139.75 440.94)" font-size="5.4" text-anchor="middle" class="k k1"><tspan>三</tspan>室两厅</text>
<text transform="matrix(1.56 0.002 0 1 161.3 440.79)" font-size="5.6" text-anchor="middle">3.0</text>
<text transform="matrix(1.56 0.002 0 1 180.65 440.79)" font-size="5.6" text-anchor="middle">111.99</text>
<text transform="matrix(1.56 0.002 0 1 204.85 440.79)" font-size="5.6" text-anchor="middle">86.18</text>
<text transform="matrix(1.56 0.002 0 1 227.45 440.79)" font-size="5.6" text-anchor="middle">25.81</text>
<text transform="matrix(1.56 0.002 0 1 249.6 440.79)" font-size="5.6" text-anchor="middle">6808</text>
<text transform="matrix(1.56 0.002 0 1 336.25 440.79)" font-size="5.6" text-anchor="middle">762428</text>
<text transform="matrix(1.56 0.002 0 1 81.15 447.74)" font-size="5.6" text-anchor="middle">1</text>
<text transform="matrix(1.56 0.002 0 1 92.25 447.74)" font-size="5.6" text-anchor="middle">6</text>
<text transform="matrix(1.56 0.002 0 1 110.75 447.74)" font-size="5.6" text-anchor="middle">1-604</text>
<text transform="matrix(1.17 0.002 0 1 139.75 447.89)" font-size="5.4" text-anchor="middle" class="k k1"><tspan>三</tspan>室两厅</text>
<text transform="matrix(1.56 0.002 0 1 161.3 447.74)" font-size="5.6" text-anchor="middle">3.0</text>
<text transform="matrix(1.56 0.002 0 1 180.65 447.74)" font-size="5.6" text-anchor="middle">130.19</text>
<text transform="matrix(1.56 0.002 0 1 204.85 447.74)" font-size="5.6" text-anchor="middle">100.19</text>
<text transform="matrix(1.56 0.002 0 1 227.45 447.74)" font-size="5.6" text-anchor="middle">30.00</text>
<text transform="matrix(1.56 0.002 0 1 249.6 447.74)" font-size="5.6" text-anchor="middle">6278</text>
<text transform="matrix(1.56 0.002 0 1 336.25 447.74)" font-size="5.6" text-anchor="middle">817333</text>
<text transform="matrix(1.56 0.002 0 1 81.15 454.7)" font-size="5.6" text-anchor="middle">1</text>
<text transform="matrix(1.56 0.002 0 1 92.25 454.7)" font-size="5.6" text-anchor="middle">6</text>
<text transform="matrix(1.56 0.002 0 1 110.75 454.7)" font-size="5.6" text-anchor="middle">2-601</text>
<text transform="matrix(1.17 0.002 0 1 139.75 454.85)" font-size="5.4" text-anchor="middle" class="k k1"><tspan>三</tspan>室两厅</text>
<text transform="matrix(1.56 0.002 0 1 161.3 454.7)" font-size="5.6" text-anchor="middle">3.0</text>
<text transform="matrix(1.56 0.002 0 1 180.65 454.7)" font-size="5.6" text-anchor="middle">130.19</text>
<text transform="matrix(1.56 0.002 0 1 204.85 454.7)" font-size="5.6" text-anchor="middle">100.19</text>
<text transform="matrix(1.56 0.002 0 1 227.45 454.7)" font-size="5.6" text-anchor="middle">30.00</text>
<text transform="matrix(1.56 0.002 0 1 249.6 454.7)" font-size="5.6" text-anchor="middle">6278</text>
<text transform="matrix(1.56 0.002 0 1 336.25 454.7)" font-size="5.6" text-anchor="middle">817333</text>
<text transform="matrix(1.56 0.002 0 1 81.15 461.65)" font-size="5.6" text-anchor="middle">1</text>
<text transform="matrix(1.56 0.002 0 1 92.25 461.65)" font-size="5.6" text-anchor="middle">6</text>
<text transform="matrix(1.56 0.002 0 1 110.75 461.65)" font-size="5.6" text-anchor="middle">2-602</text>
<text transform="matrix(1.17 0.002 0 1 139.75 461.8)" font-size="5.4" text-anchor="middle" class="k k1"><tspan>三</tspan>室两厅</text>
<text transform="matrix(1.56 0.002 0 1 161.3 461.65)" font-size="5.6" text-anchor="middle">3.0</text>
<text transform="matrix(1.56 0.002 0 1 180.65 461.65)" font-size="5.6" text-anchor="middle">111.99</text>
<text transform="matrix(1.56 0.002 0 1 204.85 461.65)" font-size="5.6" text-anchor="middle">86.18</text>
<text transform="matrix(1.56 0.002 0 1 227.45 461.65)" font-size="5.6" text-anchor="middle">25.81</text>
<text transform="matrix(1.56 0.002 0 1 249.6 461.65)" font-size="5.6" text-anchor="middle">6808</text>
<text transform="matrix(1.56 0.002 0 1 336.25 461.65)" font-size="5.6" text-anchor="middle">762428</text>
<text transform="matrix(1.56 0.002 0 1 81.15 468.6)" font-size="5.6" text-anchor="middle">1</text>
<text transform="matrix(1.56 0.002 0 1 92.25 468.6)" font-size="5.6" text-anchor="middle">6</text>
<text transform="matrix(1.56 0.002 0 1 110.75 468.6)" font-size="5.6" text-anchor="middle">2-603</text>
<text transform="matrix(1.17 0.002 0 1 139.75 468.75)" font-size="5.4" text-anchor="middle" class="k k1"><tspan>三</tspan>室两厅</text>
<text transform="matrix(1.56 0.002 0 1 161.3 468.6)" font-size="5.6" text-anchor="middle">3.0</text>
<text transform="matrix(1.56 0.002 0 1 180.65 468.6)" font-size="5.6" text-anchor="middle">111.99</text>
<text transform="matrix(1.56 0.002 0 1 204.85 468.6)" font-size="5.6" text-anchor="middle">86.18</text>
<text transform="matrix(1.56 0.002 0 1 227.45 468.6)" font-size="5.6" text-anchor="middle">25.81</text>
<text transform="matrix(1.56 0.002 0 1 249.6 468.6)" font-size="5.6" text-anchor="middle">6808</text>
<text transform="matrix(1.56 0.002 0 1 336.25 468.6)" font-size="5.6" text-anchor="middle">762428</text>
<text transform="matrix(1.56 0.002 0 1 81.15 475.56)" font-size="5.6" text-anchor="middle">1</text>
<text transform="matrix(1.56 0.002 0 1 92.25 475.56)" font-size="5.6" text-anchor="middle">6</text>
<text transform="matrix(1.56 0.002 0 1 110.75 475.56)" font-size="5.6" text-anchor="middle">2-604</text>
<text transform="matrix(1.17 0.002 0 1 139.75 475.71)" font-size="5.4" text-anchor="middle" class="k k1"><tspan>三</tspan>室两厅</text>
<text transform="matrix(1.56 0.002 0 1 161.3 475.56)" font-size="5.6" text-anchor="middle">3.0</text>
<text transform="matrix(1.56 0.002 0 1 180.65 475.56)" font-size="5.6" text-anchor="middle">125.97</text>
<text transform="matrix(1.56 0.002 0 1 204.85 475.56)" font-size="5.6" text-anchor="middle">96.94</text>
<text transform="matrix(1.56 0.002 0 1 227.45 475.56)" font-size="5.6" text-anchor="middle">29.03</text>
<text transform="matrix(1.56 0.002 0 1 249.6 475.56)" font-size="5.6" text-anchor="middle">6558</text>
<text transform="matrix(1.56 0.002 0 1 336.25 475.56)" font-size="5.6" text-anchor="middle">826111</text>
<text transform="matrix(1.56 0.002 0 1 81.15 482.51)" font-size="5.6" text-anchor="middle">1</text>
<text transform="matrix(1.56 0.002 0 1 92.25 482.51)" font-size="5.6" text-anchor="middle">7</text>
<text transform="matrix(1.56 0.002 0 1 110.75 482.51)" font-size="5.6" text-anchor="middle">1-701</text>
<text transform="matrix(1.17 0.002 0 1 139.75 482.66)" font-size="5.4" text-anchor="middle" class="k k1"><tspan>三</tspan>室两厅</text>
<text transform="matrix(1.56 0.002 0 1 161.3 482.51)" font-size="5.6" text-anchor="middle">3.0</text>
<text transform="matrix(1.56 0.002 0 1 180.65 482.51)" font-size="5.6" text-anchor="middle">125.97</text>
<text transform="matrix(1.56 0.002 0 1 204.85 482.51)" font-size="5.6" text-anchor="middle">96.94</text>
<text transform="matrix(1.56 0.002 0 1 227.45 482.51)" font-size="5.6" text-anchor="middle">29.03</text>
<text transform="matrix(1.56 0.002 0 1 249.6 482.51)" font-size="5.6" text-anchor="middle">6588</text>
<text transform="matrix(1.56 0.002 0 1 336.25 482.51)" font-size="5.6" text-anchor="middle">829890</text>
<text transform="matrix(1.56 0.002 0 1 81.15 489.46)" font-size="5.6" text-anchor="middle">1</text>
<text transform="matrix(1.56 0.002 0 1 92.25 489.46)" font-size="5.6" text-anchor="middle">7</text>
<text transform="matrix(1.56 0.002 0 1 110.75 489.46)" font-size="5.6" text-anchor="middle">1-702</text>
<text transform="matrix(1.17 0.002 0 1 139.75 489.61)" font-size="5.4" text-anchor="middle" class="k k1"><tspan>三</tspan>室两厅</text>
<text transform="matrix(1.56 0.002 0 1 161.3 489.46)" font-size="5.6" text-anchor="middle">3.0</text>
<text transform="matrix(1.56 0.002 0 1 180.65 489.46)" font-size="5.6" text-anchor="middle">111.99</text>
<text transform="matrix(1.56 0.002 0 1 204.85 489.46)" font-size="5.6" text-anchor="middle">86.18</text>
<text transform="matrix(1.56 0.002 0 1 227.45 489.46)" font-size="5.6" text-anchor="middle">25.81</text>
<text transform="matrix(1.56 0.002 0 1 249.6 489.46)" font-size="5.6" text-anchor="middle">6838</text>
<text transform="matrix(1.56 0.002 0 1 336.25 489.46)" font-size="5.6" text-anchor="middle">765788</text>
<text transform="matrix(1.56 0.002 0 1 81.15 496.41)" font-size="5.6" text-anchor="middle">1</text>
<text transform="matrix(1.56 0.002 0 1 92.25 496.41)" font-size="5.6" text-anchor="middle">7</text>
<text transform="matrix(1.56 0.002 0 1 110.75 496.41)" font-size="5.6" text-anchor="middle">1-703</text>
<text transform="matrix(1.17 0.002 0 1 139.75 496.56)" font-size="5.4" text-anchor="middle" class="k k1"><tspan>三</tspan>室两厅</text>
<text transform="matrix(1.56 0.002 0 1 161.3 496.41)" font-size="5.6" text-anchor="middle">3.0</text>
<text transform="matrix(1.56 0.002 0 1 180.65 496.41)" font-size="5.6" text-anchor="middle">111.99</text>
<text transform="matrix(1.56 0.002 0 1 204.85 496.41)" font-size="5.6" text-anchor="middle">86.18</text>
<text transform="matrix(1.56 0.002 0 1 227.45 496.41)" font-size="5.6" text-anchor="middle">25.81</text>
<text transform="matrix(1.56 0.002 0 1 249.6 496.41)" font-size="5.6" text-anchor="middle">6838</text>
<text transform="matrix(1.56 0.002 0 1 336.25 496.41)" font-size="5.6" text-anchor="middle">765788</text>
<text transform="matrix(1.56 0.002 0 1 81.15 503.37)" font-size="5.6" text-anchor="middle">1</text>
<text transform="matrix(1.56 0.002 0 1 92.25 503.37)" font-size="5.6" text-anchor="middle">7</text>
<text transform="matrix(1.56 0.002 0 1 110.75 503.37)" font-size="5.6" text-anchor="middle">1-704</text>
<text transform="matrix(1.17 0.002 0 1 139.75 503.52)" font-size="5.4" text-anchor="middle" class="k k1"><tspan>三</tspan>室两厅</text>
<text transform="matrix(1.56 0.002 0 1 161.3 503.37)" font-size="5.6" text-anchor="middle">3.0</text>
<text transform="matrix(1.56 0.002 0 1 180.65 503.37)" font-size="5.6" text-anchor="middle">130.19</text>
<text transform="matrix(1.56 0.002 0 1 204.85 503.37)" font-size="5.6" text-anchor="middle">100.19</text>
<text transform="matrix(1.56 0.002 0 1 227.45 503.37)" font-size="5.6" text-anchor="middle">30.00</text>
<text transform="matrix(1.56 0.002 0 1 249.6 503.37)" font-size="5.6" text-anchor="middle">6308</text>
<text transform="matrix(1.56 0.002 0 1 336.25 503.37)" font-size="5.6" text-anchor="middle">821239</text>
<text transform="matrix(1.56 0.002 0 1 81.15 510.32)" font-size="5.6" text-anchor="middle">1</text>
<text transform="matrix(1.56 0.002 0 1 92.25 510.32)" font-size="5.6" text-anchor="middle">7</text>
<text transform="matrix(1.56 0.002 0 1 110.75 510.32)" font-size="5.6" text-anchor="middle">2-701</text>
<text transform="matrix(1.17 0.002 0 1 139.75 510.47)" font-size="5.4" text-anchor="middle" class="k k1"><tspan>三</tspan>室两厅</text>
<text transform="matrix(1.56 0.002 0 1 161.3 510.32)" font-size="5.6" text-anchor="middle">3.0</text>
<text transform="matrix(1.56 0.002 0 1 180.65 510.32)" font-size="5.6" text-anchor="middle">130.19</text>
<text transform="matrix(1.56 0.002 0 1 204.85 510.32)" font-size="5.6" text-anchor="middle">100.19</text>
<text transform="matrix(1.56 0.002 0 1 227.45 510.32)" font-size="5.6" text-anchor="middle">30.00</text>
<text transform="matrix(1.56 0.002 0 1 249.6 510.32)" font-size="5.6" text-anchor="middle">6308</text>
<text transform="matrix(1.56 0.002 0 1 336.25 510.32)" font-size="5.6" text-anchor="middle">821239</text>
<text transform="matrix(1.56 0.002 0 1 81.15 517.27)" font-size="5.6" text-anchor="middle">1</text>
<text transform="matrix(1.56 0.002 0 1 92.25 517.27)" font-size="5.6" text-anchor="middle">7</text>
<text transform="matrix(1.56 0.002 0 1 110.75 517.27)" font-size="5.6" text-anchor="middle">2-702</text>
<text transform="matrix(1.17 0.002 0 1 139.75 517.42)" font-size="5.4" text-anchor="middle" class="k k1"><tspan>三</tspan>室两厅</text>
<text transform="matrix(1.56 0.002 0 1 161.3 517.27)" font-size="5.6" text-anchor="middle">3.0</text>
<text transform="matrix(1.56 0.002 0 1 180.65 517.27)" font-size="5.6" text-anchor="middle">111.99</text>
<text transform="matrix(1.56 0.002 0 1 204.85 517.27)" font-size="5.6" text-anchor="middle">86.18</text>
<text transform="matrix(1.56 0.002 0 1 227.45 517.27)" font-size="5.6" text-anchor="middle">25.81</text>
<text transform="matrix(1.56 0.002 0 1 249.6 517.27)" font-size="5.6" text-anchor="middle">6838</text>
<text transform="matrix(1.56 0.002 0 1 336.25 517.27)" font-size="5.6" text-anchor="middle">765788</text>
<text transform="matrix(1.56 0.002 0 1 81.15 524.22)" font-size="5.6" text-anchor="middle">1</text>
<text transform="matrix(1.56 0.002 0 1 92.25 524.22)" font-size="5.6" text-anchor="middle">7</text>
<text transform="matrix(1.56 0.002 0 1 110.75 524.22)" font-size="5.6" text-anchor="middle">2-703</text>
<text transform="matrix(1.17 0.002 0 1 139.75 524.37)" font-size="5.4" text-anchor="middle" class="k k1"><tspan>三</tspan>室两厅</text>
<text transform="matrix(1.56 0.002 0 1 161.3 524.22)" font-size="5.6" text-anchor="middle">3.0</text>
<text transform="matrix(1.56 0.002 0 1 180.65 524.22)" font-size="5.6" text-anchor="middle">111.99</text>
<text transform="matrix(1.56 0.002 0 1 204.85 524.22)" font-size="5.6" text-anchor="middle">86.18</text>
<text transform="matrix(1.56 0.002 0 1 227.45 524.22)" font-size="5.6" text-anchor="middle">25.81</text>
<text transform="matrix(1.56 0.002 0 1 249.6 524.22)" font-size="5.6" text-anchor="middle">6838</text>
<text transform="matrix(1.56 0.002 0 1 336.25 524.22)" font-size="5.6" text-anchor="middle">765788</text>
<text transform="matrix(1.56 0.002 0 1 81.15 531.18)" font-size="5.6" text-anchor="middle">1</text>
<text transform="matrix(1.56 0.002 0 1 92.25 531.18)" font-size="5.6" text-anchor="middle">7</text>
<text transform="matrix(1.56 0.002 0 1 110.75 531.18)" font-size="5.6" text-anchor="middle">2-704</text>
<text transform="matrix(1.17 0.002 0 1 139.75 531.33)" font-size="5.4" text-anchor="middle" class="k k1"><tspan>三</tspan>室两厅</text>
<text transform="matrix(1.56 0.002 0 1 161.3 531.18)" font-size="5.6" text-anchor="middle">3.0</text>
<text transform="matrix(1.56 0.002 0 1 180.65 531.18)" font-size="5.6" text-anchor="middle">125.97</text>
<text transform="matrix(1.56 0.002 0 1 204.85 531.18)" font-size="5.6" text-anchor="middle">96.94</text>
<text transform="matrix(1.56 0.002 0 1 227.45 531.18)" font-size="5.6" text-anchor="middle">29.03</text>
<text transform="matrix(1.56 0.002 0 1 249.6 531.18)" font-size="5.6" text-anchor="middle">6588</text>
<text transform="matrix(1.56 0.002 0 1 336.25 531.18)" font-size="5.6" text-anchor="middle">829890</text>
<text transform="matrix(1.56 0.002 0 1 81.15 538.13)" font-size="5.6" text-anchor="middle">1</text>
<text transform="matrix(1.56 0.002 0 1 92.25 538.13)" font-size="5.6" text-anchor="middle">8</text>
<text transform="matrix(1.56 0.002 0 1 110.75 538.13)" font-size="5.6" text-anchor="middle">1-801</text>
<text transform="matrix(1.17 0.002 0 1 139.75 538.28)" font-size="5.4" text-anchor="middle" class="k k1"><tspan>三</tspan>室两厅</text>
<text transform="matrix(1.56 0.002 0 1 161.3 538.13)" font-size="5.6" text-anchor="middle">3.0</text>
<text transform="matrix(1.56 0.002 0 1 180.65 538.13)" font-size="5.6" text-anchor="middle">125.97</text>
<text transform="matrix(1.56 0.002 0 1 204.85 538.13)" font-size="5.6" text-anchor="middle">96.94</text>
<text transform="matrix(1.56 0.002 0 1 227.45 538.13)" font-size="5.6" text-anchor="middle">29.03</text>
<text transform="matrix(1.56 0.002 0 1 249.6 538.13)" font-size="5.6" text-anchor="middle">6618</text>
<text transform="matrix(1.56 0.002 0 1 336.25 538.13)" font-size="5.6" text-anchor="middle">833669</text>
<text transform="matrix(1.56 0.002 0 1 81.15 545.08)" font-size="5.6" text-anchor="middle">1</text>
<text transform="matrix(1.56 0.002 0 1 92.25 545.08)" font-size="5.6" text-anchor="middle">8</text>
<text transform="matrix(1.56 0.002 0 1 110.75 545.08)" font-size="5.6" text-anchor="middle">1-802</text>
<text transform="matrix(1.17 0.002 0 1 139.75 545.23)" font-size="5.4" text-anchor="middle" class="k k1"><tspan>三</tspan>室两厅</text>
<text transform="matrix(1.56 0.002 0 1 161.3 545.08)" font-size="5.6" text-anchor="middle">3.0</text>
<text transform="matrix(1.56 0.002 0 1 180.65 545.08)" font-size="5.6" text-anchor="middle">111.99</text>
<text transform="matrix(1.56 0.002 0 1 204.85 545.08)" font-size="5.6" text-anchor="middle">86.18</text>
<text transform="matrix(1.56 0.002 0 1 227.45 545.08)" font-size="5.6" text-anchor="middle">25.81</text>
<text transform="matrix(1.56 0.002 0 1 249.6 545.08)" font-size="5.6" text-anchor="middle">6868</text>
<text transform="matrix(1.56 0.002 0 1 336.25 545.08)" font-size="5.6" text-anchor="middle">769147</text>
<text transform="matrix(1.56 0.002 0 1 81.15 552.04)" font-size="5.6" text-anchor="middle">1</text>
<text transform="matrix(1.56 0.002 0 1 92.25 552.04)" font-size="5.6" text-anchor="middle">8</text>
<text transform="matrix(1.56 0.002 0 1 110.75 552.04)" font-size="5.6" text-anchor="middle">1-803</text>
<text transform="matrix(1.17 0.002 0 1 139.75 552.19)" font-size="5.4" text-anchor="middle" class="k k1"><tspan>三</tspan>室两厅</text>
<text transform="matrix(1.56 0.002 0 1 161.3 552.04)" font-size="5.6" text-anchor="middle">3.0</text>
<text transform="matrix(1.56 0.002 0 1 180.65 552.04)" font-size="5.6" text-anchor="middle">111.99</text>
<text transform="matrix(1.56 0.002 0 1 204.85 552.04)" font-size="5.6" text-anchor="middle">86.18</text>
<text transform="matrix(1.56 0.002 0 1 227.45 552.04)" font-size="5.6" text-anchor="middle">25.81</text>
<text transform="matrix(1.56 0.002 0 1 249.6 552.04)" font-size="5.6" text-anchor="middle">6868</text>
<text transform="matrix(1.56 0.002 0 1 336.25 552.04)" font-size="5.6" text-anchor="middle">769147</text>
<text transform="matrix(1.56 0.002 0 1 81.15 558.99)" font-size="5.6" text-anchor="middle">1</text>
<text transform="matrix(1.56 0.002 0 1 92.25 558.99)" font-size="5.6" text-anchor="middle">8</text>
<text transform="matrix(1.56 0.002 0 1 110.75 558.99)" font-size="5.6" text-anchor="middle">1-804</text>
<text transform="matrix(1.17 0.002 0 1 139.75 559.14)" font-size="5.4" text-anchor="middle" class="k k1"><tspan>三</tspan>室两厅</text>
<text transform="matrix(1.56 0.002 0 1 161.3 558.99)" font-size="5.6" text-anchor="middle">3.0</text>
<text transform="matrix(1.56 0.002 0 1 180.65 558.99)" font-size="5.6" text-anchor="middle">130.19</text>
<text transform="matrix(1.56 0.002 0 1 204.85 558.99)" font-size="5.6" text-anchor="middle">100.19</text>
<text transform="matrix(1.56 0.002 0 1 227.45 558.99)" font-size="5.6" text-anchor="middle">30.00</text>
<text transform="matrix(1.56 0.002 0 1 249.6 558.99)" font-size="5.6" text-anchor="middle">6338</text>
<text transform="matrix(1.56 0.002 0 1 336.25 558.99)" font-size="5.6" text-anchor="middle">825144</text>
<text transform="matrix(1.56 0.002 0 1 81.15 565.94)" font-size="5.6" text-anchor="middle">1</text>
<text transform="matrix(1.56 0.002 0 1 92.25 565.94)" font-size="5.6" text-anchor="middle">8</text>
<text transform="matrix(1.56 0.002 0 1 110.75 565.94)" font-size="5.6" text-anchor="middle">2-801</text>
<text transform="matrix(1.17 0.002 0 1 139.75 566.09)" font-size="5.4" text-anchor="middle" class="k k1"><tspan>三</tspan>室两厅</text>
<text transform="matrix(1.56 0.002 0 1 161.3 565.94)" font-size="5.6" text-anchor="middle">3.0</text>
<text transform="matrix(1.56 0.002 0 1 180.65 565.94)" font-size="5.6" text-anchor="middle">130.19</text>
<text transform="matrix(1.56 0.002 0 1 204.85 565.94)" font-size="5.6" text-anchor="middle">100.19</text>
<text transform="matrix(1.56 0.002 0 1 227.45 565.94)" font-size="5.6" text-anchor="middle">30.00</text>
<text transform="matrix(1.56 0.002 0 1 249.6 565.94)" font-size="5.6" text-anchor="middle">6338</text>
<text transform="matrix(1.56 0.002 0 1 336.25 565.94)" font-size="5.6" text-anchor="middle">825144</text>
<text transform="matrix(1.56 0.002 0 1 81.15 572.89)" font-size="5.6" text-anchor="middle">1</text>
<text transform="matrix(1.56 0.002 0 1 92.25 572.89)" font-size="5.6" text-anchor="middle">8</text>
<text transform="matrix(1.56 0.002 0 1 110.75 572.89)" font-size="5.6" text-anchor="middle">2-802</text>
<text transform="matrix(1.17 0.002 0 1 139.75 573.04)" font-size="5.4" text-anchor="middle" class="k k1"><tspan>三</tspan>室两厅</text>
<text transform="matrix(1.56 0.002 0 1 161.3 572.89)" font-size="5.6" text-anchor="middle">3.0</text>
<text transform="matrix(1.56 0.002 0 1 180.65 572.89)" font-size="5.6" text-anchor="middle">111.99</text>
<text transform="matrix(1.56 0.002 0 1 204.85 572.89)" font-size="5.6" text-anchor="middle">86.18</text>
<text transform="matrix(1.56 0.002 0 1 227.45 572.89)" font-size="5.6" text-anchor="middle">25.81</text>
<text transform="matrix(1.56 0.002 0 1 249.6 572.89)" font-size="5.6" text-anchor="middle">6868</text>
<text transform="matrix(1.56 0.002 0 1 336.25 572.89)" font-size="5.6" text-anchor="middle">769147</text>
<text transform="matrix(1.56 0.002 0 1 81.15 579.85)" font-size="5.6" text-anchor="middle">1</text>
<text transform="matrix(1.56 0.002 0 1 92.25 579.85)" font-size="5.6" text-anchor="middle">8</text>
<text transform="matrix(1.56 0.002 0 1 110.75 579.85)" font-size="5.6" text-anchor="middle">2-803</text>
<text transform="matrix(1.17 0.002 0 1 139.75 580)" font-size="5.4" text-anchor="middle" class="k k1"><tspan>三</tspan>室两厅</text>
<text transform="matrix(1.56 0.002 0 1 161.3 579.85)" font-size="5.6" text-anchor="middle">3.0</text>
<text transform="matrix(1.56 0.002 0 1 180.65 579.85)" font-size="5.6" text-anchor="middle">111.99</text>
<text transform="matrix(1.56 0.002 0 1 204.85 579.85)" font-size="5.6" text-anchor="middle">86.18</text>
<text transform="matrix(1.56 0.002 0 1 227.45 579.85)" font-size="5.6" text-anchor="middle">25.81</text>
<text transform="matrix(1.56 0.002 0 1 249.6 579.85)" font-size="5.6" text-anchor="middle">6868</text>
<text transform="matrix(1.56 0.002 0 1 336.25 579.85)" font-size="5.6" text-anchor="middle">769147</text>
<text transform="matrix(1.56 0.002 0 1 81.15 586.8)" font-size="5.6" text-anchor="middle">1</text>
<text transform="matrix(1.56 0.002 0 1 92.25 586.8)" font-size="5.6" text-anchor="middle">8</text>
<text transform="matrix(1.56 0.002 0 1 110.75 586.8)" font-size="5.6" text-anchor="middle">2-804</text>
<text transform="matrix(1.17 0.002 0 1 139.75 586.95)" font-size="5.4" text-anchor="middle" class="k k1"><tspan>三</tspan>室两厅</text>
<text transform="matrix(1.56 0.002 0 1 161.3 586.8)" font-size="5.6" text-anchor="middle">3.0</text>
<text transform="matrix(1.56 0.002 0 1 180.65 586.8)" font-size="5.6" text-anchor="middle">125.97</text>
<text transform="matrix(1.56 0.002 0 1 204.85 586.8)" font-size="5.6" text-anchor="middle">96.94</text>
<text transform="matrix(1.56 0.002 0 1 227.45 586.8)" font-size="5.6" text-anchor="middle">29.03</text>
<text transform="matrix(1.56 0.002 0 1 249.6 586.8)" font-size="5.6" text-anchor="middle">6618</text>
<text transform="matrix(1.56 0.002 0 1 336.25 586.8)" font-size="5.6" text-anchor="middle">833669</text>
<text transform="matrix(1.56 0.002 0 1 81.15 593.75)" font-size="5.6" text-anchor="middle">1</text>
<text transform="matrix(1.56 0.002 0 1 92.25 593.75)" font-size="5.6" text-anchor="middle">9</text>
<text transform="matrix(1.56 0.002 0 1 110.75 593.75)" font-size="5.6" text-anchor="middle">1-901</text>
<text transform="matrix(1.17 0.002 0 1 139.75 593.9)" font-size="5.4" text-anchor="middle" class="k k1"><tspan>三</tspan>室两厅</text>
<text transform="matrix(1.56 0.002 0 1 161.3 593.75)" font-size="5.6" text-anchor="middle">3.0</text>
<text transform="matrix(1.56 0.002 0 1 180.65 593.75)" font-size="5.6" text-anchor="middle">125.97</text>
<text transform="matrix(1.56 0.002 0 1 204.85 593.75)" font-size="5.6" text-anchor="middle">96.94</text>
<text transform="matrix(1.56 0.002 0 1 227.45 593.75)" font-size="5.6" text-anchor="middle">29.03</text>
<text transform="matrix(1.56 0.002 0 1 249.6 593.75)" font-size="5.6" text-anchor="middle">6648</text>
<text transform="matrix(1.56 0.002 0 1 336.25 593.75)" font-size="5.6" text-anchor="middle">837449</text>
<text transform="matrix(1.56 0.002 0 1 81.15 600.7)" font-size="5.6" text-anchor="middle">1</text>
<text transform="matrix(1.56 0.002 0 1 92.25 600.7)" font-size="5.6" text-anchor="middle">9</text>
<text transform="matrix(1.56 0.002 0 1 110.75 600.7)" font-size="5.6" text-anchor="middle">1-902</text>
<text transform="matrix(1.17 0.002 0 1 139.75 600.85)" font-size="5.4" text-anchor="middle" class="k k1"><tspan>三</tspan>室两厅</text>
<text transform="matrix(1.56 0.002 0 1 161.3 600.7)" font-size="5.6" text-anchor="middle">3.0</text>
<text transform="matrix(1.56 0.002 0 1 180.65 600.7)" font-size="5.6" text-anchor="middle">111.99</text>
<text transform="matrix(1.56 0.002 0 1 204.85 600.7)" font-size="5.6" text-anchor="middle">86.18</text>
<text transform="matrix(1.56 0.002 0 1 227.45 600.7)" font-size="5.6" text-anchor="middle">25.81</text>
<text transform="matrix(1.56 0.002 0 1 249.6 600.7)" font-size="5.6" text-anchor="middle">6898</text>
<text transform="matrix(1.56 0.002 0 1 336.25 600.7)" font-size="5.6" text-anchor="middle">772507</text>
<text transform="matrix(1.56 0.002 0 1 81.15 607.66)" font-size="5.6" text-anchor="middle">1</text>
<text transform="matrix(1.56 0.002 0 1 92.25 607.66)" font-size="5.6" text-anchor="middle">9</text>
<text transform="matrix(1.56 0.002 0 1 110.75 607.66)" font-size="5.6" text-anchor="middle">1-903</text>
<text transform="matrix(1.17 0.002 0 1 139.75 607.81)" font-size="5.4" text-anchor="middle" class="k k1"><tspan>三</tspan>室两厅</text>
<text transform="matrix(1.56 0.002 0 1 161.3 607.66)" font-size="5.6" text-anchor="middle">3.0</text>
<text transform="matrix(1.56 0.002 0 1 180.65 607.66)" font-size="5.6" text-anchor="middle">111.99</text>
<text transform="matrix(1.56 0.002 0 1 204.85 607.66)" font-size="5.6" text-anchor="middle">86.18</text>
<text transform="matrix(1.56 0.002 0 1 227.45 607.66)" font-size="5.6" text-anchor="middle">25.81</text>
<text transform="matrix(1.56 0.002 0 1 249.6 607.66)" font-size="5.6" text-anchor="middle">6898</text>
<text transform="matrix(1.56 0.002 0 1 336.25 607.66)" font-size="5.6" text-anchor="middle">772507</text>
<text transform="matrix(1.56 0.002 0 1 81.15 614.61)" font-size="5.6" text-anchor="middle">1</text>
<text transform="matrix(1.56 0.002 0 1 92.25 614.61)" font-size="5.6" text-anchor="middle">9</text>
<text transform="matrix(1.56 0.002 0 1 110.75 614.61)" font-size="5.6" text-anchor="middle">1-904</text>
<text transform="matrix(1.17 0.002 0 1 139.75 614.76)" font-size="5.4" text-anchor="middle" class="k k1"><tspan>三</tspan>室两厅</text>
<text transform="matrix(1.56 0.002 0 1 161.3 614.61)" font-size="5.6" text-anchor="middle">3.0</text>
<text transform="matrix(1.56 0.002 0 1 180.65 614.61)" font-size="5.6" text-anchor="middle">130.19</text>
<text transform="matrix(1.56 0.002 0 1 204.85 614.61)" font-size="5.6" text-anchor="middle">100.19</text>
<text transform="matrix(1.56 0.002 0 1 227.45 614.61)" font-size="5.6" text-anchor="middle">30.00</text>
<text transform="matrix(1.56 0.002 0 1 249.6 614.61)" font-size="5.6" text-anchor="middle">6368</text>
<text transform="matrix(1.56 0.002 0 1 336.25 614.61)" font-size="5.6" text-anchor="middle">829050</text>
<text transform="matrix(1.56 0.002 0 1 81.15 621.56)" font-size="5.6" text-anchor="middle">1</text>
<text transform="matrix(1.56 0.002 0 1 92.25 621.56)" font-size="5.6" text-anchor="middle">9</text>
<text transform="matrix(1.56 0.002 0 1 110.75 621.56)" font-size="5.6" text-anchor="middle">2-901</text>
<text transform="matrix(1.17 0.002 0 1 139.75 621.71)" font-size="5.4" text-anchor="middle" class="k k1"><tspan>三</tspan>室两厅</text>
<text transform="matrix(1.56 0.002 0 1 161.3 621.56)" font-size="5.6" text-anchor="middle">3.0</text>
<text transform="matrix(1.56 0.002 0 1 180.65 621.56)" font-size="5.6" text-anchor="middle">130.19</text>
<text transform="matrix(1.56 0.002 0 1 204.85 621.56)" font-size="5.6" text-anchor="middle">100.19</text>
<text transform="matrix(1.56 0.002 0 1 227.45 621.56)" font-size="5.6" text-anchor="middle">30.00</text>
<text transform="matrix(1.56 0.002 0 1 249.6 621.56)" font-size="5.6" text-anchor="middle">6368</text>
<text transform="matrix(1.56 0.002 0 1 336.25 621.56)" font-size="5.6" text-anchor="middle">829050</text>
<text transform="matrix(1.56 0.002 0 1 81.15 628.52)" font-size="5.6" text-anchor="middle">1</text>
<text transform="matrix(1.56 0.002 0 1 92.25 628.52)" font-size="5.6" text-anchor="middle">9</text>
<text transform="matrix(1.56 0.002 0 1 110.75 628.52)" font-size="5.6" text-anchor="middle">2-902</text>
<text transform="matrix(1.17 0.002 0 1 139.75 628.67)" font-size="5.4" text-anchor="middle" class="k k1"><tspan>三</tspan>室两厅</text>
<text transform="matrix(1.56 0.002 0 1 161.3 628.52)" font-size="5.6" text-anchor="middle">3.0</text>
<text transform="matrix(1.56 0.002 0 1 180.65 628.52)" font-size="5.6" text-anchor="middle">111.99</text>
<text transform="matrix(1.56 0.002 0 1 204.85 628.52)" font-size="5.6" text-anchor="middle">86.18</text>
<text transform="matrix(1.56 0.002 0 1 227.45 628.52)" font-size="5.6" text-anchor="middle">25.81</text>
<text transform="matrix(1.56 0.002 0 1 249.6 628.52)" font-size="5.6" text-anchor="middle">6898</text>
<text transform="matrix(1.56 0.002 0 1 336.25 628.52)" font-size="5.6" text-anchor="middle">772507</text>
<text transform="matrix(1.56 0.002 0 1 81.15 635.47)" font-size="5.6" text-anchor="middle">1</text>
<text transform="matrix(1.56 0.002 0 1 92.25 635.47)" font-size="5.6" text-anchor="middle">9</text>
<text transform="matrix(1.56 0.002 0 1 110.75 635.47)" font-size="5.6" text-anchor="middle">2-903</text>
<text transform="matrix(1.17 0.002 0 1 139.75 635.62)" font-size="5.4" text-anchor="middle" class="k k1"><tspan>三</tspan>室两厅</text>
<text transform="matrix(1.56 0.002 0 1 161.3 635.47)" font-size="5.6" text-anchor="middle">3.0</text>
<text transform="matrix(1.56 0.002 0 1 180.65 635.47)" font-size="5.6" text-anchor="middle">111.99</text>
<text transform="matrix(1.56 0.002 0 1 204.85 635.47)" font-size="5.6" text-anchor="middle">86.18</text>
<text transform="matrix(1.56 0.002 0 1 227.45 635.47)" font-size="5.6" text-anchor="middle">25.81</text>
<text transform="matrix(1.56 0.002 0 1 249.6 635.47)" font-size="5.6" text-anchor="middle">6898</text>
<text transform="matrix(1.56 0.002 0 1 336.25 635.47)" font-size="5.6" text-anchor="middle">772507</text>
<text transform="matrix(1.56 0.002 0 1 81.15 642.42)" font-size="5.6" text-anchor="middle">1</text>
<text transform="matrix(1.56 0.002 0 1 92.25 642.42)" font-size="5.6" text-anchor="middle">9</text>
<text transform="matrix(1.56 0.002 0 1 110.75 642.42)" font-size="5.6" text-anchor="middle">2-904</text>
<text transform="matrix(1.17 0.002 0 1 139.75 642.57)" font-size="5.4" text-anchor="middle" class="k k1"><tspan>三</tspan>室两厅</text>
<text transform="matrix(1.56 0.002 0 1 161.3 642.42)" font-size="5.6" text-anchor="middle">3.0</text>
<text transform="matrix(1.56 0.002 0 1 180.65 642.42)" font-size="5.6" text-anchor="middle">125.97</text>
<text transform="matrix(1.56 0.002 0 1 204.85 642.42)" font-size="5.6" text-anchor="middle">96.94</text>
<text transform="matrix(1.56 0.002 0 1 227.45 642.42)" font-size="5.6" text-anchor="middle">29.03</text>
<text transform="matrix(1.56 0.002 0 1 249.6 642.42)" font-size="5.6" text-anchor="middle">6648</text>
<text transform="matrix(1.56 0.002 0 1 336.25 642.42)" font-size="5.6" text-anchor="middle">837449</text>
<text transform="matrix(1.56 0.002 0 1 81.15 649.37)" font-size="5.6" text-anchor="middle">1</text>
<text transform="matrix(1.56 0.002 0 1 92.25 649.37)" font-size="5.6" text-anchor="middle">10</text>
<text transform="matrix(1.56 0.002 0 1 110.75 649.37)" font-size="5.6" text-anchor="middle">1-1001</text>
<text transform="matrix(1.17 0.002 0 1 139.75 649.52)" font-size="5.4" text-anchor="middle" class="k k1"><tspan>三</tspan>室两厅</text>
<text transform="matrix(1.56 0.002 0 1 161.3 649.37)" font-size="5.6" text-anchor="middle">3.0</text>
<text transform="matrix(1.56 0.002 0 1 180.65 649.37)" font-size="5.6" text-anchor="middle">125.97</text>
<text transform="matrix(1.56 0.002 0 1 204.85 649.37)" font-size="5.6" text-anchor="middle">96.94</text>
<text transform="matrix(1.56 0.002 0 1 227.45 649.37)" font-size="5.6" text-anchor="middle">29.03</text>
<text transform="matrix(1.56 0.002 0 1 249.6 649.37)" font-size="5.6" text-anchor="middle">6668</text>
<text transform="matrix(1.56 0.002 0 1 336.25 649.37)" font-size="5.6" text-anchor="middle">839968</text>
<text transform="matrix(1.56 0.002 0 1 382.1 58.5)" font-size="5.6" text-anchor="middle">1</text>
<text transform="matrix(1.56 0.002 0 1 393.1 58.5)" font-size="5.6" text-anchor="middle">10</text>
<text transform="matrix(1.56 0.002 0 1 411.55 58.5)" font-size="5.6" text-anchor="middle">1-1002</text>
<text transform="matrix(1.29 0.002 0 1 439.9 58.65)" font-size="5.5" text-anchor="middle" class="k"><tspan>三</tspan>室两厅</text>
<text transform="matrix(1.56 0.002 0 1 461.85 58.5)" font-size="5.6" text-anchor="middle">3.0</text>
<text transform="matrix(1.56 0.002 0 1 481.15 58.5)" font-size="5.6" text-anchor="middle">111.99</text>
<text transform="matrix(1.56 0.002 0 1 505.4 58.5)" font-size="5.6" text-anchor="middle">86.18</text>
<text transform="matrix(1.56 0.002 0 1 528.1 58.5)" font-size="5.6" text-anchor="middle">25.81</text>
<text transform="matrix(1.56 0.002 0 1 550.3 58.5)" font-size="5.6" text-anchor="middle">6918</text>
<text transform="matrix(1.56 0.002 0 1 637.12 58.5)" font-size="5.6" text-anchor="middle">774747</text>
<text transform="matrix(1.56 0.002 0 1 382.1 65.01)" font-size="5.6" text-anchor="middle">1</text>
<text transform="matrix(1.56 0.002 0 1 393.1 65.01)" font-size="5.6" text-anchor="middle">10</text>
<text transform="matrix(1.56 0.002 0 1 411.55 65.01)" font-size="5.6" text-anchor="middle">1-1003</text>
<text transform="matrix(1.29 0.002 0 1 439.9 65.16)" font-size="5.5" text-anchor="middle" class="k"><tspan>三</tspan>室两厅</text>
<text transform="matrix(1.56 0.002 0 1 461.85 65.01)" font-size="5.6" text-anchor="middle">3.0</text>
<text transform="matrix(1.56 0.002 0 1 481.15 65.01)" font-size="5.6" text-anchor="middle">111.99</text>
<text transform="matrix(1.56 0.002 0 1 505.4 65.01)" font-size="5.6" text-anchor="middle">86.18</text>
<text transform="matrix(1.56 0.002 0 1 528.1 65.01)" font-size="5.6" text-anchor="middle">25.81</text>
<text transform="matrix(1.56 0.002 0 1 550.3 65.01)" font-size="5.6" text-anchor="middle">6918</text>
<text transform="matrix(1.56 0.002 0 1 637.12 65.01)" font-size="5.6" text-anchor="middle">774747</text>
<text transform="matrix(1.56 0.002 0 1 382.1 71.52)" font-size="5.6" text-anchor="middle">1</text>
<text transform="matrix(1.56 0.002 0 1 393.1 71.52)" font-size="5.6" text-anchor="middle">10</text>
<text transform="matrix(1.56 0.002 0 1 411.55 71.52)" font-size="5.6" text-anchor="middle">1-1004</text>
<text transform="matrix(1.29 0.002 0 1 439.9 71.67)" font-size="5.5" text-anchor="middle" class="k"><tspan>三</tspan>室两厅</text>
<text transform="matrix(1.56 0.002 0 1 461.85 71.52)" font-size="5.6" text-anchor="middle">3.0</text>
<text transform="matrix(1.56 0.002 0 1 481.15 71.52)" font-size="5.6" text-anchor="middle">130.19</text>
<text transform="matrix(1.56 0.002 0 1 505.4 71.52)" font-size="5.6" text-anchor="middle">100.19</text>
<text transform="matrix(1.56 0.002 0 1 528.1 71.52)" font-size="5.6" text-anchor="middle">30.00</text>
<text transform="matrix(1.56 0.002 0 1 550.3 71.52)" font-size="5.6" text-anchor="middle">6388</text>
<text transform="matrix(1.56 0.002 0 1 637.12 71.52)" font-size="5.6" text-anchor="middle">831654</text>
<text transform="matrix(1.56 0.002 0 1 382.1 78.02)" font-size="5.6" text-anchor="middle">1</text>
<text transform="matrix(1.56 0.002 0 1 393.1 78.02)" font-size="5.6" text-anchor="middle">10</text>
<text transform="matrix(1.56 0.002 0 1 411.55 78.02)" font-size="5.6" text-anchor="middle">2-1001</text>
<text transform="matrix(1.29 0.002 0 1 439.9 78.17)" font-size="5.5" text-anchor="middle" class="k"><tspan>三</tspan>室两厅</text>
<text transform="matrix(1.56 0.002 0 1 461.85 78.02)" font-size="5.6" text-anchor="middle">3.0</text>
<text transform="matrix(1.56 0.002 0 1 481.15 78.02)" font-size="5.6" text-anchor="middle">130.19</text>
<text transform="matrix(1.56 0.002 0 1 505.4 78.02)" font-size="5.6" text-anchor="middle">100.19</text>
<text transform="matrix(1.56 0.002 0 1 528.1 78.02)" font-size="5.6" text-anchor="middle">30.00</text>
<text transform="matrix(1.56 0.002 0 1 550.3 78.02)" font-size="5.6" text-anchor="middle">6388</text>
<text transform="matrix(1.56 0.002 0 1 637.12 78.02)" font-size="5.6" text-anchor="middle">831654</text>
<text transform="matrix(1.56 0.002 0 1 382.1 84.53)" font-size="5.6" text-anchor="middle">1</text>
<text transform="matrix(1.56 0.002 0 1 393.1 84.53)" font-size="5.6" text-anchor="middle">10</text>
<text transform="matrix(1.56 0.002 0 1 411.55 84.53)" font-size="5.6" text-anchor="middle">2-1002</text>
<text transform="matrix(1.29 0.002 0 1 439.9 84.68)" font-size="5.5" text-anchor="middle" class="k"><tspan>三</tspan>室两厅</text>
<text transform="matrix(1.56 0.002 0 1 461.85 84.53)" font-size="5.6" text-anchor="middle">3.0</text>
<text transform="matrix(1.56 0.002 0 1 481.15 84.53)" font-size="5.6" text-anchor="middle">111.99</text>
<text transform="matrix(1.56 0.002 0 1 505.4 84.53)" font-size="5.6" text-anchor="middle">86.18</text>
<text transform="matrix(1.56 0.002 0 1 528.1 84.53)" font-size="5.6" text-anchor="middle">25.81</text>
<text transform="matrix(1.56 0.002 0 1 550.3 84.53)" font-size="5.6" text-anchor="middle">6918</text>
<text transform="matrix(1.56 0.002 0 1 637.12 84.53)" font-size="5.6" text-anchor="middle">774747</text>
<text transform="matrix(1.56 0.002 0 1 382.1 91.04)" font-size="5.6" text-anchor="middle">1</text>
<text transform="matrix(1.56 0.002 0 1 393.1 91.04)" font-size="5.6" text-anchor="middle">10</text>
<text transform="matrix(1.56 0.002 0 1 411.55 91.04)" font-size="5.6" text-anchor="middle">2-1003</text>
<text transform="matrix(1.29 0.002 0 1 439.9 91.19)" font-size="5.5" text-anchor="middle" class="k"><tspan>三</tspan>室两厅</text>
<text transform="matrix(1.56 0.002 0 1 461.85 91.04)" font-size="5.6" text-anchor="middle">3.0</text>
<text transform="matrix(1.56 0.002 0 1 481.15 91.04)" font-size="5.6" text-anchor="middle">111.99</text>
<text transform="matrix(1.56 0.002 0 1 505.4 91.04)" font-size="5.6" text-anchor="middle">86.18</text>
<text transform="matrix(1.56 0.002 0 1 528.1 91.04)" font-size="5.6" text-anchor="middle">25.81</text>
<text transform="matrix(1.56 0.002 0 1 550.3 91.04)" font-size="5.6" text-anchor="middle">6918</text>
<text transform="matrix(1.56 0.002 0 1 637.12 91.04)" font-size="5.6" text-anchor="middle">774747</text>
<text transform="matrix(1.56 0.002 0 1 382.1 97.55)" font-size="5.6" text-anchor="middle">1</text>
<text transform="matrix(1.56 0.002 0 1 393.1 97.55)" font-size="5.6" text-anchor="middle">10</text>
<text transform="matrix(1.56 0.002 0 1 411.55 97.55)" font-size="5.6" text-anchor="middle">2-1004</text>
<text transform="matrix(1.29 0.002 0 1 439.9 97.7)" font-size="5.5" text-anchor="middle" class="k"><tspan>三</tspan>室两厅</text>
<text transform="matrix(1.56 0.002 0 1 461.85 97.55)" font-size="5.6" text-anchor="middle">3.0</text>
<text transform="matrix(1.56 0.002 0 1 481.15 97.55)" font-size="5.6" text-anchor="middle">125.97</text>
<text transform="matrix(1.56 0.002 0 1 505.4 97.55)" font-size="5.6" text-anchor="middle">96.94</text>
<text transform="matrix(1.56 0.002 0 1 528.1 97.55)" font-size="5.6" text-anchor="middle">29.03</text>
<text transform="matrix(1.56 0.002 0 1 550.3 97.55)" font-size="5.6" text-anchor="middle">6668</text>
<text transform="matrix(1.56 0.002 0 1 637.12 97.55)" font-size="5.6" text-anchor="middle">839968</text>
<text transform="matrix(1.56 0.002 0 1 382.1 104.05)" font-size="5.6" text-anchor="middle">1</text>
<text transform="matrix(1.56 0.002 0 1 393.1 104.05)" font-size="5.6" text-anchor="middle">11</text>
<text transform="matrix(1.56 0.002 0 1 411.55 104.05)" font-size="5.6" text-anchor="middle">1-1101</text>
<text transform="matrix(1.29 0.002 0 1 439.9 104.2)" font-size="5.5" text-anchor="middle" class="k"><tspan>三</tspan>室两厅</text>
<text transform="matrix(1.56 0.002 0 1 461.85 104.05)" font-size="5.6" text-anchor="middle">3.0</text>
<text transform="matrix(1.56 0.002 0 1 481.15 104.05)" font-size="5.6" text-anchor="middle">125.97</text>
<text transform="matrix(1.56 0.002 0 1 505.4 104.05)" font-size="5.6" text-anchor="middle">96.94</text>
<text transform="matrix(1.56 0.002 0 1 528.1 104.05)" font-size="5.6" text-anchor="middle">29.03</text>
<text transform="matrix(1.56 0.002 0 1 550.3 104.05)" font-size="5.6" text-anchor="middle">6688</text>
<text transform="matrix(1.56 0.002 0 1 637.12 104.05)" font-size="5.6" text-anchor="middle">842487</text>
<text transform="matrix(1.56 0.002 0 1 382.1 110.56)" font-size="5.6" text-anchor="middle">1</text>
<text transform="matrix(1.56 0.002 0 1 393.1 110.56)" font-size="5.6" text-anchor="middle">11</text>
<text transform="matrix(1.56 0.002 0 1 411.55 110.56)" font-size="5.6" text-anchor="middle">1-1102</text>
<text transform="matrix(1.29 0.002 0 1 439.9 110.71)" font-size="5.5" text-anchor="middle" class="k"><tspan>三</tspan>室两厅</text>
<text transform="matrix(1.56 0.002 0 1 461.85 110.56)" font-size="5.6" text-anchor="middle">3.0</text>
<text transform="matrix(1.56 0.002 0 1 481.15 110.56)" font-size="5.6" text-anchor="middle">111.99</text>
<text transform="matrix(1.56 0.002 0 1 505.4 110.56)" font-size="5.6" text-anchor="middle">86.18</text>
<text transform="matrix(1.56 0.002 0 1 528.1 110.56)" font-size="5.6" text-anchor="middle">25.81</text>
<text transform="matrix(1.56 0.002 0 1 550.3 110.56)" font-size="5.6" text-anchor="middle">6938</text>
<text transform="matrix(1.56 0.002 0 1 637.12 110.56)" font-size="5.6" text-anchor="middle">776987</text>
<text transform="matrix(1.56 0.002 0 1 382.1 117.07)" font-size="5.6" text-anchor="middle">1</text>
<text transform="matrix(1.56 0.002 0 1 393.1 117.07)" font-size="5.6" text-anchor="middle">11</text>
<text transform="matrix(1.56 0.002 0 1 411.55 117.07)" font-size="5.6" text-anchor="middle">1-1103</text>
<text transform="matrix(1.29 0.002 0 1 439.9 117.22)" font-size="5.5" text-anchor="middle" class="k"><tspan>三</tspan>室两厅</text>
<text transform="matrix(1.56 0.002 0 1 461.85 117.07)" font-size="5.6" text-anchor="middle">3.0</text>
<text transform="matrix(1.56 0.002 0 1 481.15 117.07)" font-size="5.6" text-anchor="middle">111.99</text>
<text transform="matrix(1.56 0.002 0 1 505.4 117.07)" font-size="5.6" text-anchor="middle">86.18</text>
<text transform="matrix(1.56 0.002 0 1 528.1 117.07)" font-size="5.6" text-anchor="middle">25.81</text>
<text transform="matrix(1.56 0.002 0 1 550.3 117.07)" font-size="5.6" text-anchor="middle">6938</text>
<text transform="matrix(1.56 0.002 0 1 637.12 117.07)" font-size="5.6" text-anchor="middle">776987</text>
<text transform="matrix(1.56 0.002 0 1 382.1 123.57)" font-size="5.6" text-anchor="middle">1</text>
<text transform="matrix(1.56 0.002 0 1 393.1 123.57)" font-size="5.6" text-anchor="middle">11</text>
<text transform="matrix(1.56 0.002 0 1 411.55 123.57)" font-size="5.6" text-anchor="middle">1-1104</text>
<text transform="matrix(1.29 0.002 0 1 439.9 123.72)" font-size="5.5" text-anchor="middle" class="k"><tspan>三</tspan>室两厅</text>
<text transform="matrix(1.56 0.002 0 1 461.85 123.57)" font-size="5.6" text-anchor="middle">3.0</text>
<text transform="matrix(1.56 0.002 0 1 481.15 123.57)" font-size="5.6" text-anchor="middle">130.19</text>
<text transform="matrix(1.56 0.002 0 1 505.4 123.57)" font-size="5.6" text-anchor="middle">100.19</text>
<text transform="matrix(1.56 0.002 0 1 528.1 123.57)" font-size="5.6" text-anchor="middle">30.00</text>
<text transform="matrix(1.56 0.002 0 1 550.3 123.57)" font-size="5.6" text-anchor="middle">6408</text>
<text transform="matrix(1.56 0.002 0 1 637.12 123.57)" font-size="5.6" text-anchor="middle">834258</text>
<text transform="matrix(1.56 0.002 0 1 382.1 130.08)" font-size="5.6" text-anchor="middle">1</text>
<text transform="matrix(1.56 0.002 0 1 393.1 130.08)" font-size="5.6" text-anchor="middle">11</text>
<text transform="matrix(1.56 0.002 0 1 411.55 130.08)" font-size="5.6" text-anchor="middle">2-1101</text>
<text transform="matrix(1.29 0.002 0 1 439.9 130.23)" font-size="5.5" text-anchor="middle" class="k"><tspan>三</tspan>室两厅</text>
<text transform="matrix(1.56 0.002 0 1 461.85 130.08)" font-size="5.6" text-anchor="middle">3.0</text>
<text transform="matrix(1.56 0.002 0 1 481.15 130.08)" font-size="5.6" text-anchor="middle">130.19</text>
<text transform="matrix(1.56 0.002 0 1 505.4 130.08)" font-size="5.6" text-anchor="middle">100.19</text>
<text transform="matrix(1.56 0.002 0 1 528.1 130.08)" font-size="5.6" text-anchor="middle">30.00</text>
<text transform="matrix(1.56 0.002 0 1 550.3 130.08)" font-size="5.6" text-anchor="middle">6408</text>
<text transform="matrix(1.56 0.002 0 1 637.12 130.08)" font-size="5.6" text-anchor="middle">834258</text>
<text transform="matrix(1.56 0.002 0 1 382.1 136.59)" font-size="5.6" text-anchor="middle">1</text>
<text transform="matrix(1.56 0.002 0 1 393.1 136.59)" font-size="5.6" text-anchor="middle">11</text>
<text transform="matrix(1.56 0.002 0 1 411.55 136.59)" font-size="5.6" text-anchor="middle">2-1102</text>
<text transform="matrix(1.29 0.002 0 1 439.9 136.74)" font-size="5.5" text-anchor="middle" class="k"><tspan>三</tspan>室两厅</text>
<text transform="matrix(1.56 0.002 0 1 461.85 136.59)" font-size="5.6" text-anchor="middle">3.0</text>
<text transform="matrix(1.56 0.002 0 1 481.15 136.59)" font-size="5.6" text-anchor="middle">111.99</text>
<text transform="matrix(1.56 0.002 0 1 505.4 136.59)" font-size="5.6" text-anchor="middle">86.18</text>
<text transform="matrix(1.56 0.002 0 1 528.1 136.59)" font-size="5.6" text-anchor="middle">25.81</text>
<text transform="matrix(1.56 0.002 0 1 550.3 136.59)" font-size="5.6" text-anchor="middle">6938</text>
<text transform="matrix(1.56 0.002 0 1 637.12 136.59)" font-size="5.6" text-anchor="middle">776987</text>
<text transform="matrix(1.56 0.002 0 1 382.1 143.1)" font-size="5.6" text-anchor="middle">1</text>
<text transform="matrix(1.56 0.002 0 1 393.1 143.1)" font-size="5.6" text-anchor="middle">11</text>
<text transform="matrix(1.56 0.002 0 1 411.55 143.1)" font-size="5.6" text-anchor="middle">2-1103</text>
<text transform="matrix(1.29 0.002 0 1 439.9 143.25)" font-size="5.5" text-anchor="middle" class="k"><tspan>三</tspan>室两厅</text>
<text transform="matrix(1.56 0.002 0 1 461.85 143.1)" font-size="5.6" text-anchor="middle">3.0</text>
<text transform="matrix(1.56 0.002 0 1 481.15 143.1)" font-size="5.6" text-anchor="middle">111.99</text>
<text transform="matrix(1.56 0.002 0 1 505.4 143.1)" font-size="5.6" text-anchor="middle">86.18</text>
<text transform="matrix(1.56 0.002 0 1 528.1 143.1)" font-size="5.6" text-anchor="middle">25.81</text>
<text transform="matrix(1.56 0.002 0 1 550.3 143.1)" font-size="5.6" text-anchor="middle">6938</text>
<text transform="matrix(1.56 0.002 0 1 637.12 143.1)" font-size="5.6" text-anchor="middle">776987</text>
<text transform="matrix(1.56 0.002 0 1 382.1 149.6)" font-size="5.6" text-anchor="middle">1</text>
<text transform="matrix(1.56 0.002 0 1 393.1 149.6)" font-size="5.6" text-anchor="middle">11</text>
<text transform="matrix(1.56 0.002 0 1 411.55 149.6)" font-size="5.6" text-anchor="middle">2-1104</text>
<text transform="matrix(1.29 0.002 0 1 439.9 149.75)" font-size="5.5" text-anchor="middle" class="k"><tspan>三</tspan>室两厅</text>
<text transform="matrix(1.56 0.002 0 1 461.85 149.6)" font-size="5.6" text-anchor="middle">3.0</text>
<text transform="matrix(1.56 0.002 0 1 481.15 149.6)" font-size="5.6" text-anchor="middle">125.97</text>
<text transform="matrix(1.56 0.002 0 1 505.4 149.6)" font-size="5.6" text-anchor="middle">96.94</text>
<text transform="matrix(1.56 0.002 0 1 528.1 149.6)" font-size="5.6" text-anchor="middle">29.03</text>
<text transform="matrix(1.56 0.002 0 1 550.3 149.6)" font-size="5.6" text-anchor="middle">6688</text>
<text transform="matrix(1.56 0.002 0 1 637.12 149.6)" font-size="5.6" text-anchor="middle">842487</text>
<text transform="matrix(1.56 0.002 0 1 382.1 156.11)" font-size="5.6" text-anchor="middle">1</text>
<text transform="matrix(1.56 0.002 0 1 393.1 156.11)" font-size="5.6" text-anchor="middle">12</text>
<text transform="matrix(1.56 0.002 0 1 411.55 156.11)" font-size="5.6" text-anchor="middle">1-1201</text>
<text transform="matrix(1.29 0.002 0 1 439.9 156.26)" font-size="5.5" text-anchor="middle" class="k"><tspan>三</tspan>室两厅</text>
<text transform="matrix(1.56 0.002 0 1 461.85 156.11)" font-size="5.6" text-anchor="middle">3.0</text>
<text transform="matrix(1.56 0.002 0 1 481.15 156.11)" font-size="5.6" text-anchor="middle">125.97</text>
<text transform="matrix(1.56 0.002 0 1 505.4 156.11)" font-size="5.6" text-anchor="middle">96.94</text>
<text transform="matrix(1.56 0.002 0 1 528.1 156.11)" font-size="5.6" text-anchor="middle">29.03</text>
<text transform="matrix(1.56 0.002 0 1 550.3 156.11)" font-size="5.6" text-anchor="middle">6708</text>
<text transform="matrix(1.56 0.002 0 1 637.12 156.11)" font-size="5.6" text-anchor="middle">845007</text>
<text transform="matrix(1.56 0.002 0 1 382.1 162.62)" font-size="5.6" text-anchor="middle">1</text>
<text transform="matrix(1.56 0.002 0 1 393.1 162.62)" font-size="5.6" text-anchor="middle">12</text>
<text transform="matrix(1.56 0.002 0 1 411.55 162.62)" font-size="5.6" text-anchor="middle">1-1202</text>
<text transform="matrix(1.29 0.002 0 1 439.9 162.77)" font-size="5.5" text-anchor="middle" class="k"><tspan>三</tspan>室两厅</text>
<text transform="matrix(1.56 0.002 0 1 461.85 162.62)" font-size="5.6" text-anchor="middle">3.0</text>
<text transform="matrix(1.56 0.002 0 1 481.15 162.62)" font-size="5.6" text-anchor="middle">111.99</text>
<text transform="matrix(1.56 0.002 0 1 505.4 162.62)" font-size="5.6" text-anchor="middle">86.18</text>
<text transform="matrix(1.56 0.002 0 1 528.1 162.62)" font-size="5.6" text-anchor="middle">25.81</text>
<text transform="matrix(1.56 0.002 0 1 550.3 162.62)" font-size="5.6" text-anchor="middle">6958</text>
<text transform="matrix(1.56 0.002 0 1 637.12 162.62)" font-size="5.6" text-anchor="middle">779226</text>
<text transform="matrix(1.56 0.002 0 1 382.1 169.12)" font-size="5.6" text-anchor="middle">1</text>
<text transform="matrix(1.56 0.002 0 1 393.1 169.12)" font-size="5.6" text-anchor="middle">12</text>
<text transform="matrix(1.56 0.002 0 1 411.55 169.12)" font-size="5.6" text-anchor="middle">1-1203</text>
<text transform="matrix(1.29 0.002 0 1 439.9 169.27)" font-size="5.5" text-anchor="middle" class="k"><tspan>三</tspan>室两厅</text>
<text transform="matrix(1.56 0.002 0 1 461.85 169.12)" font-size="5.6" text-anchor="middle">3.0</text>
<text transform="matrix(1.56 0.002 0 1 481.15 169.12)" font-size="5.6" text-anchor="middle">111.99</text>
<text transform="matrix(1.56 0.002 0 1 505.4 169.12)" font-size="5.6" text-anchor="middle">86.18</text>
<text transform="matrix(1.56 0.002 0 1 528.1 169.12)" font-size="5.6" text-anchor="middle">25.81</text>
<text transform="matrix(1.56 0.002 0 1 550.3 169.12)" font-size="5.6" text-anchor="middle">6958</text>
<text transform="matrix(1.56 0.002 0 1 637.12 169.12)" font-size="5.6" text-anchor="middle">779226</text>
<text transform="matrix(1.56 0.002 0 1 382.1 175.63)" font-size="5.6" text-anchor="middle">1</text>
<text transform="matrix(1.56 0.002 0 1 393.1 175.63)" font-size="5.6" text-anchor="middle">12</text>
<text transform="matrix(1.56 0.002 0 1 411.55 175.63)" font-size="5.6" text-anchor="middle">1-1204</text>
<text transform="matrix(1.29 0.002 0 1 439.9 175.78)" font-size="5.5" text-anchor="middle" class="k"><tspan>三</tspan>室两厅</text>
<text transform="matrix(1.56 0.002 0 1 461.85 175.63)" font-size="5.6" text-anchor="middle">3.0</text>
<text transform="matrix(1.56 0.002 0 1 481.15 175.63)" font-size="5.6" text-anchor="middle">130.19</text>
<text transform="matrix(1.56 0.002 0 1 505.4 175.63)" font-size="5.6" text-anchor="middle">100.19</text>
<text transform="matrix(1.56 0.002 0 1 528.1 175.63)" font-size="5.6" text-anchor="middle">30.00</text>
<text transform="matrix(1.56 0.002 0 1 550.3 175.63)" font-size="5.6" text-anchor="middle">6428</text>
<text transform="matrix(1.56 0.002 0 1 637.12 175.63)" font-size="5.6" text-anchor="middle">836861</text>
<text transform="matrix(1.56 0.002 0 1 382.1 182.14)" font-size="5.6" text-anchor="middle">1</text>
<text transform="matrix(1.56 0.002 0 1 393.1 182.14)" font-size="5.6" text-anchor="middle">12</text>
<text transform="matrix(1.56 0.002 0 1 411.55 182.14)" font-size="5.6" text-anchor="middle">2-1201</text>
<text transform="matrix(1.29 0.002 0 1 439.9 182.29)" font-size="5.5" text-anchor="middle" class="k"><tspan>三</tspan>室两厅</text>
<text transform="matrix(1.56 0.002 0 1 461.85 182.14)" font-size="5.6" text-anchor="middle">3.0</text>
<text transform="matrix(1.56 0.002 0 1 481.15 182.14)" font-size="5.6" text-anchor="middle">130.19</text>
<text transform="matrix(1.56 0.002 0 1 505.4 182.14)" font-size="5.6" text-anchor="middle">100.19</text>
<text transform="matrix(1.56 0.002 0 1 528.1 182.14)" font-size="5.6" text-anchor="middle">30.00</text>
<text transform="matrix(1.56 0.002 0 1 550.3 182.14)" font-size="5.6" text-anchor="middle">6428</text>
<text transform="matrix(1.56 0.002 0 1 637.12 182.14)" font-size="5.6" text-anchor="middle">836861</text>
<text transform="matrix(1.56 0.002 0 1 382.1 188.64)" font-size="5.6" text-anchor="middle">1</text>
<text transform="matrix(1.56 0.002 0 1 393.1 188.64)" font-size="5.6" text-anchor="middle">12</text>
<text transform="matrix(1.56 0.002 0 1 411.55 188.64)" font-size="5.6" text-anchor="middle">2-1202</text>
<text transform="matrix(1.29 0.002 0 1 439.9 188.79)" font-size="5.5" text-anchor="middle" class="k"><tspan>三</tspan>室两厅</text>
<text transform="matrix(1.56 0.002 0 1 461.85 188.64)" font-size="5.6" text-anchor="middle">3.0</text>
<text transform="matrix(1.56 0.002 0 1 481.15 188.64)" font-size="5.6" text-anchor="middle">111.99</text>
<text transform="matrix(1.56 0.002 0 1 505.4 188.64)" font-size="5.6" text-anchor="middle">86.18</text>
<text transform="matrix(1.56 0.002 0 1 528.1 188.64)" font-size="5.6" text-anchor="middle">25.81</text>
<text transform="matrix(1.56 0.002 0 1 550.3 188.64)" font-size="5.6" text-anchor="middle">6958</text>
<text transform="matrix(1.56 0.002 0 1 637.12 188.64)" font-size="5.6" text-anchor="middle">779226</text>
<text transform="matrix(1.56 0.002 0 1 382.1 195.15)" font-size="5.6" text-anchor="middle">1</text>
<text transform="matrix(1.56 0.002 0 1 393.1 195.15)" font-size="5.6" text-anchor="middle">12</text>
<text transform="matrix(1.56 0.002 0 1 411.55 195.15)" font-size="5.6" text-anchor="middle">2-1203</text>
<text transform="matrix(1.29 0.002 0 1 439.9 195.3)" font-size="5.5" text-anchor="middle" class="k"><tspan>三</tspan>室两厅</text>
<text transform="matrix(1.56 0.002 0 1 461.85 195.15)" font-size="5.6" text-anchor="middle">3.0</text>
<text transform="matrix(1.56 0.002 0 1 481.15 195.15)" font-size="5.6" text-anchor="middle">111.99</text>
<text transform="matrix(1.56 0.002 0 1 505.4 195.15)" font-size="5.6" text-anchor="middle">86.18</text>
<text transform="matrix(1.56 0.002 0 1 528.1 195.15)" font-size="5.6" text-anchor="middle">25.81</text>
<text transform="matrix(1.56 0.002 0 1 550.3 195.15)" font-size="5.6" text-anchor="middle">6958</text>
<text transform="matrix(1.56 0.002 0 1 637.12 195.15)" font-size="5.6" text-anchor="middle">779226</text>
<text transform="matrix(1.56 0.002 0 1 382.1 201.66)" font-size="5.6" text-anchor="middle">1</text>
<text transform="matrix(1.56 0.002 0 1 393.1 201.66)" font-size="5.6" text-anchor="middle">12</text>
<text transform="matrix(1.56 0.002 0 1 411.55 201.66)" font-size="5.6" text-anchor="middle">2-1204</text>
<text transform="matrix(1.29 0.002 0 1 439.9 201.81)" font-size="5.5" text-anchor="middle" class="k"><tspan>三</tspan>室两厅</text>
<text transform="matrix(1.56 0.002 0 1 461.85 201.66)" font-size="5.6" text-anchor="middle">3.0</text>
<text transform="matrix(1.56 0.002 0 1 481.15 201.66)" font-size="5.6" text-anchor="middle">125.97</text>
<text transform="matrix(1.56 0.002 0 1 505.4 201.66)" font-size="5.6" text-anchor="middle">96.94</text>
<text transform="matrix(1.56 0.002 0 1 528.1 201.66)" font-size="5.6" text-anchor="middle">29.03</text>
<text transform="matrix(1.56 0.002 0 1 550.3 201.66)" font-size="5.6" text-anchor="middle">6708</text>
<text transform="matrix(1.56 0.002 0 1 637.12 201.66)" font-size="5.6" text-anchor="middle">845007</text>
<text transform="matrix(1.56 0.002 0 1 382.1 208.17)" font-size="5.6" text-anchor="middle">1</text>
<text transform="matrix(1.56 0.002 0 1 393.1 208.17)" font-size="5.6" text-anchor="middle">13</text>
<text transform="matrix(1.56 0.002 0 1 411.55 208.17)" font-size="5.6" text-anchor="middle">1-1301</text>
<text transform="matrix(1.29 0.002 0 1 439.9 208.32)" font-size="5.5" text-anchor="middle" class="k"><tspan>三</tspan>室两厅</text>
<text transform="matrix(1.56 0.002 0 1 461.85 208.17)" font-size="5.6" text-anchor="middle">3.0</text>
<text transform="matrix(1.56 0.002 0 1 481.15 208.17)" font-size="5.6" text-anchor="middle">125.97</text>
<text transform="matrix(1.56 0.002 0 1 505.4 208.17)" font-size="5.6" text-anchor="middle">96.94</text>
<text transform="matrix(1.56 0.002 0 1 528.1 208.17)" font-size="5.6" text-anchor="middle">29.03</text>
<text transform="matrix(1.56 0.002 0 1 550.3 208.17)" font-size="5.6" text-anchor="middle">6728</text>
<text transform="matrix(1.56 0.002 0 1 637.12 208.17)" font-size="5.6" text-anchor="middle">847526</text>
<text transform="matrix(1.56 0.002 0 1 382.1 214.67)" font-size="5.6" text-anchor="middle">1</text>
<text transform="matrix(1.56 0.002 0 1 393.1 214.67)" font-size="5.6" text-anchor="middle">13</text>
<text transform="matrix(1.56 0.002 0 1 411.55 214.67)" font-size="5.6" text-anchor="middle">1-1302</text>
<text transform="matrix(1.29 0.002 0 1 439.9 214.82)" font-size="5.5" text-anchor="middle" class="k"><tspan>三</tspan>室两厅</text>
<text transform="matrix(1.56 0.002 0 1 461.85 214.67)" font-size="5.6" text-anchor="middle">3.0</text>
<text transform="matrix(1.56 0.002 0 1 481.15 214.67)" font-size="5.6" text-anchor="middle">111.99</text>
<text transform="matrix(1.56 0.002 0 1 505.4 214.67)" font-size="5.6" text-anchor="middle">86.18</text>
<text transform="matrix(1.56 0.002 0 1 528.1 214.67)" font-size="5.6" text-anchor="middle">25.81</text>
<text transform="matrix(1.56 0.002 0 1 550.3 214.67)" font-size="5.6" text-anchor="middle">6978</text>
<text transform="matrix(1.56 0.002 0 1 637.12 214.67)" font-size="5.6" text-anchor="middle">781466</text>
<text transform="matrix(1.56 0.002 0 1 382.1 221.18)" font-size="5.6" text-anchor="middle">1</text>
<text transform="matrix(1.56 0.002 0 1 393.1 221.18)" font-size="5.6" text-anchor="middle">13</text>
<text transform="matrix(1.56 0.002 0 1 411.55 221.18)" font-size="5.6" text-anchor="middle">1-1303</text>
<text transform="matrix(1.29 0.002 0 1 439.9 221.33)" font-size="5.5" text-anchor="middle" class="k"><tspan>三</tspan>室两厅</text>
<text transform="matrix(1.56 0.002 0 1 461.85 221.18)" font-size="5.6" text-anchor="middle">3.0</text>
<text transform="matrix(1.56 0.002 0 1 481.15 221.18)" font-size="5.6" text-anchor="middle">111.99</text>
<text transform="matrix(1.56 0.002 0 1 505.4 221.18)" font-size="5.6" text-anchor="middle">86.18</text>
<text transform="matrix(1.56 0.002 0 1 528.1 221.18)" font-size="5.6" text-anchor="middle">25.81</text>
<text transform="matrix(1.56 0.002 0 1 550.3 221.18)" font-size="5.6" text-anchor="middle">6978</text>
<text transform="matrix(1.56 0.002 0 1 637.12 221.18)" font-size="5.6" text-anchor="middle">781466</text>
<text transform="matrix(1.56 0.002 0 1 382.1 227.69)" font-size="5.6" text-anchor="middle">1</text>
<text transform="matrix(1.56 0.002 0 1 393.1 227.69)" font-size="5.6" text-anchor="middle">13</text>
<text transform="matrix(1.56 0.002 0 1 411.55 227.69)" font-size="5.6" text-anchor="middle">1-1304</text>
<text transform="matrix(1.29 0.002 0 1 439.9 227.84)" font-size="5.5" text-anchor="middle" class="k"><tspan>三</tspan>室两厅</text>
<text transform="matrix(1.56 0.002 0 1 461.85 227.69)" font-size="5.6" text-anchor="middle">3.0</text>
<text transform="matrix(1.56 0.002 0 1 481.15 227.69)" font-size="5.6" text-anchor="middle">130.19</text>
<text transform="matrix(1.56 0.002 0 1 505.4 227.69)" font-size="5.6" text-anchor="middle">100.19</text>
<text transform="matrix(1.56 0.002 0 1 528.1 227.69)" font-size="5.6" text-anchor="middle">30.00</text>
<text transform="matrix(1.56 0.002 0 1 550.3 227.69)" font-size="5.6" text-anchor="middle">6448</text>
<text transform="matrix(1.56 0.002 0 1 637.12 227.69)" font-size="5.6" text-anchor="middle">839465</text>
<text transform="matrix(1.56 0.002 0 1 382.1 234.19)" font-size="5.6" text-anchor="middle">1</text>
<text transform="matrix(1.56 0.002 0 1 393.1 234.19)" font-size="5.6" text-anchor="middle">13</text>
<text transform="matrix(1.56 0.002 0 1 411.55 234.19)" font-size="5.6" text-anchor="middle">2-1301</text>
<text transform="matrix(1.29 0.002 0 1 439.9 234.34)" font-size="5.5" text-anchor="middle" class="k"><tspan>三</tspan>室两厅</text>
<text transform="matrix(1.56 0.002 0 1 461.85 234.19)" font-size="5.6" text-anchor="middle">3.0</text>
<text transform="matrix(1.56 0.002 0 1 481.15 234.19)" font-size="5.6" text-anchor="middle">130.19</text>
<text transform="matrix(1.56 0.002 0 1 505.4 234.19)" font-size="5.6" text-anchor="middle">100.19</text>
<text transform="matrix(1.56 0.002 0 1 528.1 234.19)" font-size="5.6" text-anchor="middle">30.00</text>
<text transform="matrix(1.56 0.002 0 1 550.3 234.19)" font-size="5.6" text-anchor="middle">6448</text>
<text transform="matrix(1.56 0.002 0 1 637.12 234.19)" font-size="5.6" text-anchor="middle">839465</text>
<text transform="matrix(1.56 0.002 0 1 382.1 240.7)" font-size="5.6" text-anchor="middle">1</text>
<text transform="matrix(1.56 0.002 0 1 393.1 240.7)" font-size="5.6" text-anchor="middle">13</text>
<text transform="matrix(1.56 0.002 0 1 411.55 240.7)" font-size="5.6" text-anchor="middle">2-1302</text>
<text transform="matrix(1.29 0.002 0 1 439.9 240.85)" font-size="5.5" text-anchor="middle" class="k"><tspan>三</tspan>室两厅</text>
<text transform="matrix(1.56 0.002 0 1 461.85 240.7)" font-size="5.6" text-anchor="middle">3.0</text>
<text transform="matrix(1.56 0.002 0 1 481.15 240.7)" font-size="5.6" text-anchor="middle">111.99</text>
<text transform="matrix(1.56 0.002 0 1 505.4 240.7)" font-size="5.6" text-anchor="middle">86.18</text>
<text transform="matrix(1.56 0.002 0 1 528.1 240.7)" font-size="5.6" text-anchor="middle">25.81</text>
<text transform="matrix(1.56 0.002 0 1 550.3 240.7)" font-size="5.6" text-anchor="middle">6978</text>
<text transform="matrix(1.56 0.002 0 1 637.12 240.7)" font-size="5.6" text-anchor="middle">781466</text>
<text transform="matrix(1.56 0.002 0 1 382.1 247.21)" font-size="5.6" text-anchor="middle">1</text>
<text transform="matrix(1.56 0.002 0 1 393.1 247.21)" font-size="5.6" text-anchor="middle">13</text>
<text transform="matrix(1.56 0.002 0 1 411.55 247.21)" font-size="5.6" text-anchor="middle">2-1303</text>
<text transform="matrix(1.29 0.002 0 1 439.9 247.36)" font-size="5.5" text-anchor="middle" class="k"><tspan>三</tspan>室两厅</text>
<text transform="matrix(1.56 0.002 0 1 461.85 247.21)" font-size="5.6" text-anchor="middle">3.0</text>
<text transform="matrix(1.56 0.002 0 1 481.15 247.21)" font-size="5.6" text-anchor="middle">111.99</text>
<text transform="matrix(1.56 0.002 0 1 505.4 247.21)" font-size="5.6" text-anchor="middle">86.18</text>
<text transform="matrix(1.56 0.002 0 1 528.1 247.21)" font-size="5.6" text-anchor="middle">25.81</text>
<text transform="matrix(1.56 0.002 0 1 550.3 247.21)" font-size="5.6" text-anchor="middle">6978</text>
<text transform="matrix(1.56 0.002 0 1 637.12 247.21)" font-size="5.6" text-anchor="middle">781466</text>
<text transform="matrix(1.56 0.002 0 1 382.1 253.72)" font-size="5.6" text-anchor="middle">1</text>
<text transform="matrix(1.56 0.002 0 1 393.1 253.72)" font-size="5.6" text-anchor="middle">13</text>
<text transform="matrix(1.56 0.002 0 1 411.55 253.72)" font-size="5.6" text-anchor="middle">2-1304</text>
<text transform="matrix(1.29 0.002 0 1 439.9 253.87)" font-size="5.5" text-anchor="middle" class="k"><tspan>三</tspan>室两厅</text>
<text transform="matrix(1.56 0.002 0 1 461.85 253.72)" font-size="5.6" text-anchor="middle">3.0</text>
<text transform="matrix(1.56 0.002 0 1 481.15 253.72)" font-size="5.6" text-anchor="middle">125.97</text>
<text transform="matrix(1.56 0.002 0 1 505.4 253.72)" font-size="5.6" text-anchor="middle">96.94</text>
<text transform="matrix(1.56 0.002 0 1 528.1 253.72)" font-size="5.6" text-anchor="middle">29.03</text>
<text transform="matrix(1.56 0.002 0 1 550.3 253.72)" font-size="5.6" text-anchor="middle">6728</text>
<text transform="matrix(1.56 0.002 0 1 637.12 253.72)" font-size="5.6" text-anchor="middle">847526</text>
<text transform="matrix(1.56 0.002 0 1 382.1 260.22)" font-size="5.6" text-anchor="middle">1</text>
<text transform="matrix(1.56 0.002 0 1 393.1 260.22)" font-size="5.6" text-anchor="middle">14</text>
<text transform="matrix(1.56 0.002 0 1 411.55 260.22)" font-size="5.6" text-anchor="middle">1-1401</text>
<text transform="matrix(1.29 0.002 0 1 439.9 260.37)" font-size="5.5" text-anchor="middle" class="k"><tspan>三</tspan>室两厅</text>
<text transform="matrix(1.56 0.002 0 1 461.85 260.22)" font-size="5.6" text-anchor="middle">3.0</text>
<text transform="matrix(1.56 0.002 0 1 481.15 260.22)" font-size="5.6" text-anchor="middle">125.97</text>
<text transform="matrix(1.56 0.002 0 1 505.4 260.22)" font-size="5.6" text-anchor="middle">96.94</text>
<text transform="matrix(1.56 0.002 0 1 528.1 260.22)" font-size="5.6" text-anchor="middle">29.03</text>
<text transform="matrix(1.56 0.002 0 1 550.3 260.22)" font-size="5.6" text-anchor="middle">6728</text>
<text transform="matrix(1.56 0.002 0 1 637.12 260.22)" font-size="5.6" text-anchor="middle">847526</text>
<text transform="matrix(1.56 0.002 0 1 382.1 266.73)" font-size="5.6" text-anchor="middle">1</text>
<text transform="matrix(1.56 0.002 0 1 393.1 266.73)" font-size="5.6" text-anchor="middle">14</text>
<text transform="matrix(1.56 0.002 0 1 411.55 266.73)" font-size="5.6" text-anchor="middle">1-1402</text>
<text transform="matrix(1.29 0.002 0 1 439.9 266.88)" font-size="5.5" text-anchor="middle" class="k"><tspan>三</tspan>室两厅</text>
<text transform="matrix(1.56 0.002 0 1 461.85 266.73)" font-size="5.6" text-anchor="middle">3.0</text>
<text transform="matrix(1.56 0.002 0 1 481.15 266.73)" font-size="5.6" text-anchor="middle">111.99</text>
<text transform="matrix(1.56 0.002 0 1 505.4 266.73)" font-size="5.6" text-anchor="middle">86.18</text>
<text transform="matrix(1.56 0.002 0 1 528.1 266.73)" font-size="5.6" text-anchor="middle">25.81</text>
<text transform="matrix(1.56 0.002 0 1 550.3 266.73)" font-size="5.6" text-anchor="middle">6978</text>
<text transform="matrix(1.56 0.002 0 1 637.12 266.73)" font-size="5.6" text-anchor="middle">781466</text>
<text transform="matrix(1.56 0.002 0 1 382.1 273.24)" font-size="5.6" text-anchor="middle">1</text>
<text transform="matrix(1.56 0.002 0 1 393.1 273.24)" font-size="5.6" text-anchor="middle">14</text>
<text transform="matrix(1.56 0.002 0 1 411.55 273.24)" font-size="5.6" text-anchor="middle">1-1403</text>
<text transform="matrix(1.29 0.002 0 1 439.9 273.39)" font-size="5.5" text-anchor="middle" class="k"><tspan>三</tspan>室两厅</text>
<text transform="matrix(1.56 0.002 0 1 461.85 273.24)" font-size="5.6" text-anchor="middle">3.0</text>
<text transform="matrix(1.56 0.002 0 1 481.15 273.24)" font-size="5.6" text-anchor="middle">111.99</text>
<text transform="matrix(1.56 0.002 0 1 505.4 273.24)" font-size="5.6" text-anchor="middle">86.18</text>
<text transform="matrix(1.56 0.002 0 1 528.1 273.24)" font-size="5.6" text-anchor="middle">25.81</text>
<text transform="matrix(1.56 0.002 0 1 550.3 273.24)" font-size="5.6" text-anchor="middle">6978</text>
<text transform="matrix(1.56 0.002 0 1 637.12 273.24)" font-size="5.6" text-anchor="middle">781466</text>
<text transform="matrix(1.56 0.002 0 1 382.1 279.74)" font-size="5.6" text-anchor="middle">1</text>
<text transform="matrix(1.56 0.002 0 1 393.1 279.74)" font-size="5.6" text-anchor="middle">14</text>
<text transform="matrix(1.56 0.002 0 1 411.55 279.74)" font-size="5.6" text-anchor="middle">1-1404</text>
<text transform="matrix(1.29 0.002 0 1 439.9 279.89)" font-size="5.5" text-anchor="middle" class="k"><tspan>三</tspan>室两厅</text>
<text transform="matrix(1.56 0.002 0 1 461.85 279.74)" font-size="5.6" text-anchor="middle">3.0</text>
<text transform="matrix(1.56 0.002 0 1 481.15 279.74)" font-size="5.6" text-anchor="middle">130.19</text>
<text transform="matrix(1.56 0.002 0 1 505.4 279.74)" font-size="5.6" text-anchor="middle">100.19</text>
<text transform="matrix(1.56 0.002 0 1 528.1 279.74)" font-size="5.6" text-anchor="middle">30.00</text>
<text transform="matrix(1.56 0.002 0 1 550.3 279.74)" font-size="5.6" text-anchor="middle">6448</text>
<text transform="matrix(1.56 0.002 0 1 637.12 279.74)" font-size="5.6" text-anchor="middle">839465</text>
<text transform="matrix(1.56 0.002 0 1 382.1 286.25)" font-size="5.6" text-anchor="middle">1</text>
<text transform="matrix(1.56 0.002 0 1 393.1 286.25)" font-size="5.6" text-anchor="middle">14</text>
<text transform="matrix(1.56 0.002 0 1 411.55 286.25)" font-size="5.6" text-anchor="middle">2-1401</text>
<text transform="matrix(1.29 0.002 0 1 439.9 286.4)" font-size="5.5" text-anchor="middle" class="k"><tspan>三</tspan>室两厅</text>
<text transform="matrix(1.56 0.002 0 1 461.85 286.25)" font-size="5.6" text-anchor="middle">3.0</text>
<text transform="matrix(1.56 0.002 0 1 481.15 286.25)" font-size="5.6" text-anchor="middle">130.19</text>
<text transform="matrix(1.56 0.002 0 1 505.4 286.25)" font-size="5.6" text-anchor="middle">100.19</text>
<text transform="matrix(1.56 0.002 0 1 528.1 286.25)" font-size="5.6" text-anchor="middle">30.00</text>
<text transform="matrix(1.56 0.002 0 1 550.3 286.25)" font-size="5.6" text-anchor="middle">6448</text>
<text transform="matrix(1.56 0.002 0 1 637.12 286.25)" font-size="5.6" text-anchor="middle">839465</text>
<text transform="matrix(1.56 0.002 0 1 382.1 292.76)" font-size="5.6" text-anchor="middle">1</text>
<text transform="matrix(1.56 0.002 0 1 393.1 292.76)" font-size="5.6" text-anchor="middle">14</text>
<text transform="matrix(1.56 0.002 0 1 411.55 292.76)" font-size="5.6" text-anchor="middle">2-1402</text>
<text transform="matrix(1.29 0.002 0 1 439.9 292.91)" font-size="5.5" text-anchor="middle" class="k"><tspan>三</tspan>室两厅</text>
<text transform="matrix(1.56 0.002 0 1 461.85 292.76)" font-size="5.6" text-anchor="middle">3.0</text>
<text transform="matrix(1.56 0.002 0 1 481.15 292.76)" font-size="5.6" text-anchor="middle">111.99</text>
<text transform="matrix(1.56 0.002 0 1 505.4 292.76)" font-size="5.6" text-anchor="middle">86.18</text>
<text transform="matrix(1.56 0.002 0 1 528.1 292.76)" font-size="5.6" text-anchor="middle">25.81</text>
<text transform="matrix(1.56 0.002 0 1 550.3 292.76)" font-size="5.6" text-anchor="middle">6978</text>
<text transform="matrix(1.56 0.002 0 1 637.12 292.76)" font-size="5.6" text-anchor="middle">781466</text>
<text transform="matrix(1.56 0.002 0 1 382.1 299.26)" font-size="5.6" text-anchor="middle">1</text>
<text transform="matrix(1.56 0.002 0 1 393.1 299.26)" font-size="5.6" text-anchor="middle">14</text>
<text transform="matrix(1.56 0.002 0 1 411.55 299.26)" font-size="5.6" text-anchor="middle">2-1403</text>
<text transform="matrix(1.29 0.002 0 1 439.9 299.41)" font-size="5.5" text-anchor="middle" class="k"><tspan>三</tspan>室两厅</text>
<text transform="matrix(1.56 0.002 0 1 461.85 299.26)" font-size="5.6" text-anchor="middle">3.0</text>
<text transform="matrix(1.56 0.002 0 1 481.15 299.26)" font-size="5.6" text-anchor="middle">111.99</text>
<text transform="matrix(1.56 0.002 0 1 505.4 299.26)" font-size="5.6" text-anchor="middle">86.18</text>
<text transform="matrix(1.56 0.002 0 1 528.1 299.26)" font-size="5.6" text-anchor="middle">25.81</text>
<text transform="matrix(1.56 0.002 0 1 550.3 299.26)" font-size="5.6" text-anchor="middle">6978</text>
<text transform="matrix(1.56 0.002 0 1 637.12 299.26)" font-size="5.6" text-anchor="middle">781466</text>
<text transform="matrix(1.56 0.002 0 1 382.1 305.77)" font-size="5.6" text-anchor="middle">1</text>
<text transform="matrix(1.56 0.002 0 1 393.1 305.77)" font-size="5.6" text-anchor="middle">14</text>
<text transform="matrix(1.56 0.002 0 1 411.55 305.77)" font-size="5.6" text-anchor="middle">2-1404</text>
<text transform="matrix(1.29 0.002 0 1 439.9 305.92)" font-size="5.5" text-anchor="middle" class="k"><tspan>三</tspan>室两厅</text>
<text transform="matrix(1.56 0.002 0 1 461.85 305.77)" font-size="5.6" text-anchor="middle">3.0</text>
<text transform="matrix(1.56 0.002 0 1 481.15 305.77)" font-size="5.6" text-anchor="middle">125.97</text>
<text transform="matrix(1.56 0.002 0 1 505.4 305.77)" font-size="5.6" text-anchor="middle">96.94</text>
<text transform="matrix(1.56 0.002 0 1 528.1 305.77)" font-size="5.6" text-anchor="middle">29.03</text>
<text transform="matrix(1.56 0.002 0 1 550.3 305.77)" font-size="5.6" text-anchor="middle">6728</text>
<text transform="matrix(1.56 0.002 0 1 637.12 305.77)" font-size="5.6" text-anchor="middle">847526</text>
<text transform="matrix(1.56 0.002 0 1 382.1 312.28)" font-size="5.6" text-anchor="middle">1</text>
<text transform="matrix(1.56 0.002 0 1 393.1 312.28)" font-size="5.6" text-anchor="middle">15</text>
<text transform="matrix(1.56 0.002 0 1 411.55 312.28)" font-size="5.6" text-anchor="middle">1-1501</text>
<text transform="matrix(1.29 0.002 0 1 439.9 312.43)" font-size="5.5" text-anchor="middle" class="k"><tspan>三</tspan>室两厅</text>
<text transform="matrix(1.56 0.002 0 1 461.85 312.28)" font-size="5.6" text-anchor="middle">3.0</text>
<text transform="matrix(1.56 0.002 0 1 481.15 312.28)" font-size="5.6" text-anchor="middle">125.97</text>
<text transform="matrix(1.56 0.002 0 1 505.4 312.28)" font-size="5.6" text-anchor="middle">96.94</text>
<text transform="matrix(1.56 0.002 0 1 528.1 312.28)" font-size="5.6" text-anchor="middle">29.03</text>
<text transform="matrix(1.56 0.002 0 1 550.3 312.28)" font-size="5.6" text-anchor="middle">6768</text>
<text transform="matrix(1.56 0.002 0 1 637.12 312.28)" font-size="5.6" text-anchor="middle">852565</text>
<text transform="matrix(1.56 0.002 0 1 382.1 318.79)" font-size="5.6" text-anchor="middle">1</text>
<text transform="matrix(1.56 0.002 0 1 393.1 318.79)" font-size="5.6" text-anchor="middle">15</text>
<text transform="matrix(1.56 0.002 0 1 411.55 318.79)" font-size="5.6" text-anchor="middle">1-1502</text>
<text transform="matrix(1.29 0.002 0 1 439.9 318.94)" font-size="5.5" text-anchor="middle" class="k"><tspan>三</tspan>室两厅</text>
<text transform="matrix(1.56 0.002 0 1 461.85 318.79)" font-size="5.6" text-anchor="middle">3.0</text>
<text transform="matrix(1.56 0.002 0 1 481.15 318.79)" font-size="5.6" text-anchor="middle">111.99</text>
<text transform="matrix(1.56 0.002 0 1 505.4 318.79)" font-size="5.6" text-anchor="middle">86.18</text>
<text transform="matrix(1.56 0.002 0 1 528.1 318.79)" font-size="5.6" text-anchor="middle">25.81</text>
<text transform="matrix(1.56 0.002 0 1 550.3 318.79)" font-size="5.6" text-anchor="middle">7018</text>
<text transform="matrix(1.56 0.002 0 1 637.12 318.79)" font-size="5.6" text-anchor="middle">785946</text>
<text transform="matrix(1.56 0.002 0 1 382.1 325.29)" font-size="5.6" text-anchor="middle">1</text>
<text transform="matrix(1.56 0.002 0 1 393.1 325.29)" font-size="5.6" text-anchor="middle">15</text>
<text transform="matrix(1.56 0.002 0 1 411.55 325.29)" font-size="5.6" text-anchor="middle">1-1503</text>
<text transform="matrix(1.29 0.002 0 1 439.9 325.44)" font-size="5.5" text-anchor="middle" class="k"><tspan>三</tspan>室两厅</text>
<text transform="matrix(1.56 0.002 0 1 461.85 325.29)" font-size="5.6" text-anchor="middle">3.0</text>
<text transform="matrix(1.56 0.002 0 1 481.15 325.29)" font-size="5.6" text-anchor="middle">111.99</text>
<text transform="matrix(1.56 0.002 0 1 505.4 325.29)" font-size="5.6" text-anchor="middle">86.18</text>
<text transform="matrix(1.56 0.002 0 1 528.1 325.29)" font-size="5.6" text-anchor="middle">25.81</text>
<text transform="matrix(1.56 0.002 0 1 550.3 325.29)" font-size="5.6" text-anchor="middle">7018</text>
<text transform="matrix(1.56 0.002 0 1 637.12 325.29)" font-size="5.6" text-anchor="middle">785946</text>
<text transform="matrix(1.56 0.002 0 1 382.1 331.8)" font-size="5.6" text-anchor="middle">1</text>
<text transform="matrix(1.56 0.002 0 1 393.1 331.8)" font-size="5.6" text-anchor="middle">15</text>
<text transform="matrix(1.56 0.002 0 1 411.55 331.8)" font-size="5.6" text-anchor="middle">1-1504</text>
<text transform="matrix(1.29 0.002 0 1 439.9 331.95)" font-size="5.5" text-anchor="middle" class="k"><tspan>三</tspan>室两厅</text>
<text transform="matrix(1.56 0.002 0 1 461.85 331.8)" font-size="5.6" text-anchor="middle">3.0</text>
<text transform="matrix(1.56 0.002 0 1 481.15 331.8)" font-size="5.6" text-anchor="middle">130.19</text>
<text transform="matrix(1.56 0.002 0 1 505.4 331.8)" font-size="5.6" text-anchor="middle">100.19</text>
<text transform="matrix(1.56 0.002 0 1 528.1 331.8)" font-size="5.6" text-anchor="middle">30.00</text>
<text transform="matrix(1.56 0.002 0 1 550.3 331.8)" font-size="5.6" text-anchor="middle">6488</text>
<text transform="matrix(1.56 0.002 0 1 637.12 331.8)" font-size="5.6" text-anchor="middle">844673</text>
<text transform="matrix(1.56 0.002 0 1 382.1 338.31)" font-size="5.6" text-anchor="middle">1</text>
<text transform="matrix(1.56 0.002 0 1 393.1 338.31)" font-size="5.6" text-anchor="middle">15</text>
<text transform="matrix(1.56 0.002 0 1 411.55 338.31)" font-size="5.6" text-anchor="middle">2-1501</text>
<text transform="matrix(1.29 0.002 0 1 439.9 338.46)" font-size="5.5" text-anchor="middle" class="k"><tspan>三</tspan>室两厅</text>
<text transform="matrix(1.56 0.002 0 1 461.85 338.31)" font-size="5.6" text-anchor="middle">3.0</text>
<text transform="matrix(1.56 0.002 0 1 481.15 338.31)" font-size="5.6" text-anchor="middle">130.19</text>
<text transform="matrix(1.56 0.002 0 1 505.4 338.31)" font-size="5.6" text-anchor="middle">100.19</text>
<text transform="matrix(1.56 0.002 0 1 528.1 338.31)" font-size="5.6" text-anchor="middle">30.00</text>
<text transform="matrix(1.56 0.002 0 1 550.3 338.31)" font-size="5.6" text-anchor="middle">6488</text>
<text transform="matrix(1.56 0.002 0 1 637.12 338.31)" font-size="5.6" text-anchor="middle">844673</text>
<text transform="matrix(1.56 0.002 0 1 382.1 344.81)" font-size="5.6" text-anchor="middle">1</text>
<text transform="matrix(1.56 0.002 0 1 393.1 344.81)" font-size="5.6" text-anchor="middle">15</text>
<text transform="matrix(1.56 0.002 0 1 411.55 344.81)" font-size="5.6" text-anchor="middle">2-1502</text>
<text transform="matrix(1.29 0.002 0 1 439.9 344.96)" font-size="5.5" text-anchor="middle" class="k"><tspan>三</tspan>室两厅</text>
<text transform="matrix(1.56 0.002 0 1 461.85 344.81)" font-size="5.6" text-anchor="middle">3.0</text>
<text transform="matrix(1.56 0.002 0 1 481.15 344.81)" font-size="5.6" text-anchor="middle">111.99</text>
<text transform="matrix(1.56 0.002 0 1 505.4 344.81)" font-size="5.6" text-anchor="middle">86.18</text>
<text transform="matrix(1.56 0.002 0 1 528.1 344.81)" font-size="5.6" text-anchor="middle">25.81</text>
<text transform="matrix(1.56 0.002 0 1 550.3 344.81)" font-size="5.6" text-anchor="middle">7018</text>
<text transform="matrix(1.56 0.002 0 1 637.12 344.81)" font-size="5.6" text-anchor="middle">785946</text>
<text transform="matrix(1.56 0.002 0 1 382.1 351.32)" font-size="5.6" text-anchor="middle">1</text>
<text transform="matrix(1.56 0.002 0 1 393.1 351.32)" font-size="5.6" text-anchor="middle">15</text>
<text transform="matrix(1.56 0.002 0 1 411.55 351.32)" font-size="5.6" text-anchor="middle">2-1503</text>
<text transform="matrix(1.29 0.002 0 1 439.9 351.47)" font-size="5.5" text-anchor="middle" class="k"><tspan>三</tspan>室两厅</text>
<text transform="matrix(1.56 0.002 0 1 461.85 351.32)" font-size="5.6" text-anchor="middle">3.0</text>
<text transform="matrix(1.56 0.002 0 1 481.15 351.32)" font-size="5.6" text-anchor="middle">111.99</text>
<text transform="matrix(1.56 0.002 0 1 505.4 351.32)" font-size="5.6" text-anchor="middle">86.18</text>
<text transform="matrix(1.56 0.002 0 1 528.1 351.32)" font-size="5.6" text-anchor="middle">25.81</text>
<text transform="matrix(1.56 0.002 0 1 550.3 351.32)" font-size="5.6" text-anchor="middle">7018</text>
<text transform="matrix(1.56 0.002 0 1 637.12 351.32)" font-size="5.6" text-anchor="middle">785946</text>
<text transform="matrix(1.56 0.002 0 1 382.1 357.83)" font-size="5.6" text-anchor="middle">1</text>
<text transform="matrix(1.56 0.002 0 1 393.1 357.83)" font-size="5.6" text-anchor="middle">15</text>
<text transform="matrix(1.56 0.002 0 1 411.55 357.83)" font-size="5.6" text-anchor="middle">2-1504</text>
<text transform="matrix(1.29 0.002 0 1 439.9 357.98)" font-size="5.5" text-anchor="middle" class="k"><tspan>三</tspan>室两厅</text>
<text transform="matrix(1.56 0.002 0 1 461.85 357.83)" font-size="5.6" text-anchor="middle">3.0</text>
<text transform="matrix(1.56 0.002 0 1 481.15 357.83)" font-size="5.6" text-anchor="middle">125.97</text>
<text transform="matrix(1.56 0.002 0 1 505.4 357.83)" font-size="5.6" text-anchor="middle">96.94</text>
<text transform="matrix(1.56 0.002 0 1 528.1 357.83)" font-size="5.6" text-anchor="middle">29.03</text>
<text transform="matrix(1.56 0.002 0 1 550.3 357.83)" font-size="5.6" text-anchor="middle">6768</text>
<text transform="matrix(1.56 0.002 0 1 637.12 357.83)" font-size="5.6" text-anchor="middle">852565</text>
<text transform="matrix(1.56 0.002 0 1 382.1 364.34)" font-size="5.6" text-anchor="middle">1</text>
<text transform="matrix(1.56 0.002 0 1 393.1 364.34)" font-size="5.6" text-anchor="middle">16</text>
<text transform="matrix(1.56 0.002 0 1 411.55 364.34)" font-size="5.6" text-anchor="middle">1-1601</text>
<text transform="matrix(1.29 0.002 0 1 439.9 364.49)" font-size="5.5" text-anchor="middle" class="k"><tspan>三</tspan>室两厅</text>
<text transform="matrix(1.56 0.002 0 1 461.85 364.34)" font-size="5.6" text-anchor="middle">3.0</text>
<text transform="matrix(1.56 0.002 0 1 481.15 364.34)" font-size="5.6" text-anchor="middle">125.97</text>
<text transform="matrix(1.56 0.002 0 1 505.4 364.34)" font-size="5.6" text-anchor="middle">96.94</text>
<text transform="matrix(1.56 0.002 0 1 528.1 364.34)" font-size="5.6" text-anchor="middle">29.03</text>
<text transform="matrix(1.56 0.002 0 1 550.3 364.34)" font-size="5.6" text-anchor="middle">6788</text>
<text transform="matrix(1.56 0.002 0 1 637.12 364.34)" font-size="5.6" text-anchor="middle">855084</text>
<text transform="matrix(1.56 0.002 0 1 382.1 370.84)" font-size="5.6" text-anchor="middle">1</text>
<text transform="matrix(1.56 0.002 0 1 393.1 370.84)" font-size="5.6" text-anchor="middle">16</text>
<text transform="matrix(1.56 0.002 0 1 411.55 370.84)" font-size="5.6" text-anchor="middle">1-1602</text>
<text transform="matrix(1.29 0.002 0 1 439.9 370.99)" font-size="5.5" text-anchor="middle" class="k"><tspan>三</tspan>室两厅</text>
<text transform="matrix(1.56 0.002 0 1 461.85 370.84)" font-size="5.6" text-anchor="middle">3.0</text>
<text transform="matrix(1.56 0.002 0 1 481.15 370.84)" font-size="5.6" text-anchor="middle">111.99</text>
<text transform="matrix(1.56 0.002 0 1 505.4 370.84)" font-size="5.6" text-anchor="middle">86.18</text>
<text transform="matrix(1.56 0.002 0 1 528.1 370.84)" font-size="5.6" text-anchor="middle">25.81</text>
<text transform="matrix(1.56 0.002 0 1 550.3 370.84)" font-size="5.6" text-anchor="middle">7038</text>
<text transform="matrix(1.56 0.002 0 1 637.12 370.84)" font-size="5.6" text-anchor="middle">788186</text>
<text transform="matrix(1.56 0.002 0 1 382.1 377.35)" font-size="5.6" text-anchor="middle">1</text>
<text transform="matrix(1.56 0.002 0 1 393.1 377.35)" font-size="5.6" text-anchor="middle">16</text>
<text transform="matrix(1.56 0.002 0 1 411.55 377.35)" font-size="5.6" text-anchor="middle">1-1603</text>
<text transform="matrix(1.29 0.002 0 1 439.9 377.5)" font-size="5.5" text-anchor="middle" class="k"><tspan>三</tspan>室两厅</text>
<text transform="matrix(1.56 0.002 0 1 461.85 377.35)" font-size="5.6" text-anchor="middle">3.0</text>
<text transform="matrix(1.56 0.002 0 1 481.15 377.35)" font-size="5.6" text-anchor="middle">111.99</text>
<text transform="matrix(1.56 0.002 0 1 505.4 377.35)" font-size="5.6" text-anchor="middle">86.18</text>
<text transform="matrix(1.56 0.002 0 1 528.1 377.35)" font-size="5.6" text-anchor="middle">25.81</text>
<text transform="matrix(1.56 0.002 0 1 550.3 377.35)" font-size="5.6" text-anchor="middle">7038</text>
<text transform="matrix(1.56 0.002 0 1 637.12 377.35)" font-size="5.6" text-anchor="middle">788186</text>
<text transform="matrix(1.56 0.002 0 1 382.1 383.86)" font-size="5.6" text-anchor="middle">1</text>
<text transform="matrix(1.56 0.002 0 1 393.1 383.86)" font-size="5.6" text-anchor="middle">16</text>
<text transform="matrix(1.56 0.002 0 1 411.55 383.86)" font-size="5.6" text-anchor="middle">1-1604</text>
<text transform="matrix(1.29 0.002 0 1 439.9 384.01)" font-size="5.5" text-anchor="middle" class="k"><tspan>三</tspan>室两厅</text>
<text transform="matrix(1.56 0.002 0 1 461.85 383.86)" font-size="5.6" text-anchor="middle">3.0</text>
<text transform="matrix(1.56 0.002 0 1 481.15 383.86)" font-size="5.6" text-anchor="middle">130.19</text>
<text transform="matrix(1.56 0.002 0 1 505.4 383.86)" font-size="5.6" text-anchor="middle">100.19</text>
<text transform="matrix(1.56 0.002 0 1 528.1 383.86)" font-size="5.6" text-anchor="middle">30.00</text>
<text transform="matrix(1.56 0.002 0 1 550.3 383.86)" font-size="5.6" text-anchor="middle">6508</text>
<text transform="matrix(1.56 0.002 0 1 637.12 383.86)" font-size="5.6" text-anchor="middle">847277</text>
<text transform="matrix(1.56 0.002 0 1 382.1 390.36)" font-size="5.6" text-anchor="middle">1</text>
<text transform="matrix(1.56 0.002 0 1 393.1 390.36)" font-size="5.6" text-anchor="middle">16</text>
<text transform="matrix(1.56 0.002 0 1 411.55 390.36)" font-size="5.6" text-anchor="middle">2-1601</text>
<text transform="matrix(1.29 0.002 0 1 439.9 390.51)" font-size="5.5" text-anchor="middle" class="k"><tspan>三</tspan>室两厅</text>
<text transform="matrix(1.56 0.002 0 1 461.85 390.36)" font-size="5.6" text-anchor="middle">3.0</text>
<text transform="matrix(1.56 0.002 0 1 481.15 390.36)" font-size="5.6" text-anchor="middle">130.19</text>
<text transform="matrix(1.56 0.002 0 1 505.4 390.36)" font-size="5.6" text-anchor="middle">100.19</text>
<text transform="matrix(1.56 0.002 0 1 528.1 390.36)" font-size="5.6" text-anchor="middle">30.00</text>
<text transform="matrix(1.56 0.002 0 1 550.3 390.36)" font-size="5.6" text-anchor="middle">6508</text>
<text transform="matrix(1.56 0.002 0 1 637.12 390.36)" font-size="5.6" text-anchor="middle">847277</text>
<text transform="matrix(1.56 0.002 0 1 382.1 396.87)" font-size="5.6" text-anchor="middle">1</text>
<text transform="matrix(1.56 0.002 0 1 393.1 396.87)" font-size="5.6" text-anchor="middle">16</text>
<text transform="matrix(1.56 0.002 0 1 411.55 396.87)" font-size="5.6" text-anchor="middle">2-1602</text>
<text transform="matrix(1.29 0.002 0 1 439.9 397.02)" font-size="5.5" text-anchor="middle" class="k"><tspan>三</tspan>室两厅</text>
<text transform="matrix(1.56 0.002 0 1 461.85 396.87)" font-size="5.6" text-anchor="middle">3.0</text>
<text transform="matrix(1.56 0.002 0 1 481.15 396.87)" font-size="5.6" text-anchor="middle">111.99</text>
<text transform="matrix(1.56 0.002 0 1 505.4 396.87)" font-size="5.6" text-anchor="middle">86.18</text>
<text transform="matrix(1.56 0.002 0 1 528.1 396.87)" font-size="5.6" text-anchor="middle">25.81</text>
<text transform="matrix(1.56 0.002 0 1 550.3 396.87)" font-size="5.6" text-anchor="middle">7038</text>
<text transform="matrix(1.56 0.002 0 1 637.12 396.87)" font-size="5.6" text-anchor="middle">788186</text>
<text transform="matrix(1.56 0.002 0 1 382.1 403.38)" font-size="5.6" text-anchor="middle">1</text>
<text transform="matrix(1.56 0.002 0 1 393.1 403.38)" font-size="5.6" text-anchor="middle">16</text>
<text transform="matrix(1.56 0.002 0 1 411.55 403.38)" font-size="5.6" text-anchor="middle">2-1603</text>
<text transform="matrix(1.29 0.002 0 1 439.9 403.53)" font-size="5.5" text-anchor="middle" class="k"><tspan>三</tspan>室两厅</text>
<text transform="matrix(1.56 0.002 0 1 461.85 403.38)" font-size="5.6" text-anchor="middle">3.0</text>
<text transform="matrix(1.56 0.002 0 1 481.15 403.38)" font-size="5.6" text-anchor="middle">111.99</text>
<text transform="matrix(1.56 0.002 0 1 505.4 403.38)" font-size="5.6" text-anchor="middle">86.18</text>
<text transform="matrix(1.56 0.002 0 1 528.1 403.38)" font-size="5.6" text-anchor="middle">25.81</text>
<text transform="matrix(1.56 0.002 0 1 550.3 403.38)" font-size="5.6" text-anchor="middle">7038</text>
<text transform="matrix(1.56 0.002 0 1 637.12 403.38)" font-size="5.6" text-anchor="middle">788186</text>
<text transform="matrix(1.56 0.002 0 1 382.1 409.89)" font-size="5.6" text-anchor="middle">1</text>
<text transform="matrix(1.56 0.002 0 1 393.1 409.89)" font-size="5.6" text-anchor="middle">16</text>
<text transform="matrix(1.56 0.002 0 1 411.55 409.89)" font-size="5.6" text-anchor="middle">2-1604</text>
<text transform="matrix(1.29 0.002 0 1 439.9 410.04)" font-size="5.5" text-anchor="middle" class="k"><tspan>三</tspan>室两厅</text>
<text transform="matrix(1.56 0.002 0 1 461.85 409.89)" font-size="5.6" text-anchor="middle">3.0</text>
<text transform="matrix(1.56 0.002 0 1 481.15 409.89)" font-size="5.6" text-anchor="middle">125.97</text>
<text transform="matrix(1.56 0.002 0 1 505.4 409.89)" font-size="5.6" text-anchor="middle">96.94</text>
<text transform="matrix(1.56 0.002 0 1 528.1 409.89)" font-size="5.6" text-anchor="middle">29.03</text>
<text transform="matrix(1.56 0.002 0 1 550.3 409.89)" font-size="5.6" text-anchor="middle">6788</text>
<text transform="matrix(1.56 0.002 0 1 637.12 409.89)" font-size="5.6" text-anchor="middle">855084</text>
<text transform="matrix(1.56 0.002 0 1 382.1 416.39)" font-size="5.6" text-anchor="middle">1</text>
<text transform="matrix(1.56 0.002 0 1 393.1 416.39)" font-size="5.6" text-anchor="middle">17</text>
<text transform="matrix(1.56 0.002 0 1 411.55 416.39)" font-size="5.6" text-anchor="middle">1-1701</text>
<text transform="matrix(1.29 0.002 0 1 439.9 416.54)" font-size="5.5" text-anchor="middle" class="k"><tspan>三</tspan>室两厅</text>
<text transform="matrix(1.56 0.002 0 1 461.85 416.39)" font-size="5.6" text-anchor="middle">3.0</text>
<text transform="matrix(1.56 0.002 0 1 481.15 416.39)" font-size="5.6" text-anchor="middle">125.97</text>
<text transform="matrix(1.56 0.002 0 1 505.4 416.39)" font-size="5.6" text-anchor="middle">96.94</text>
<text transform="matrix(1.56 0.002 0 1 528.1 416.39)" font-size="5.6" text-anchor="middle">29.03</text>
<text transform="matrix(1.56 0.002 0 1 550.3 416.39)" font-size="5.6" text-anchor="middle">6808</text>
<text transform="matrix(1.56 0.002 0 1 637.12 416.39)" font-size="5.6" text-anchor="middle">857604</text>
<text transform="matrix(1.56 0.002 0 1 382.1 422.9)" font-size="5.6" text-anchor="middle">1</text>
<text transform="matrix(1.56 0.002 0 1 393.1 422.9)" font-size="5.6" text-anchor="middle">17</text>
<text transform="matrix(1.56 0.002 0 1 411.55 422.9)" font-size="5.6" text-anchor="middle">1-1702</text>
<text transform="matrix(1.29 0.002 0 1 439.9 423.05)" font-size="5.5" text-anchor="middle" class="k"><tspan>三</tspan>室两厅</text>
<text transform="matrix(1.56 0.002 0 1 461.85 422.9)" font-size="5.6" text-anchor="middle">3.0</text>
<text transform="matrix(1.56 0.002 0 1 481.15 422.9)" font-size="5.6" text-anchor="middle">111.99</text>
<text transform="matrix(1.56 0.002 0 1 505.4 422.9)" font-size="5.6" text-anchor="middle">86.18</text>
<text transform="matrix(1.56 0.002 0 1 528.1 422.9)" font-size="5.6" text-anchor="middle">25.81</text>
<text transform="matrix(1.56 0.002 0 1 550.3 422.9)" font-size="5.6" text-anchor="middle">7058</text>
<text transform="matrix(1.56 0.002 0 1 637.12 422.9)" font-size="5.6" text-anchor="middle">790425</text>
<text transform="matrix(1.56 0.002 0 1 382.1 429.41)" font-size="5.6" text-anchor="middle">1</text>
<text transform="matrix(1.56 0.002 0 1 393.1 429.41)" font-size="5.6" text-anchor="middle">17</text>
<text transform="matrix(1.56 0.002 0 1 411.55 429.41)" font-size="5.6" text-anchor="middle">1-1703</text>
<text transform="matrix(1.29 0.002 0 1 439.9 429.56)" font-size="5.5" text-anchor="middle" class="k"><tspan>三</tspan>室两厅</text>
<text transform="matrix(1.56 0.002 0 1 461.85 429.41)" font-size="5.6" text-anchor="middle">3.0</text>
<text transform="matrix(1.56 0.002 0 1 481.15 429.41)" font-size="5.6" text-anchor="middle">111.99</text>
<text transform="matrix(1.56 0.002 0 1 505.4 429.41)" font-size="5.6" text-anchor="middle">86.18</text>
<text transform="matrix(1.56 0.002 0 1 528.1 429.41)" font-size="5.6" text-anchor="middle">25.81</text>
<text transform="matrix(1.56 0.002 0 1 550.3 429.41)" font-size="5.6" text-anchor="middle">7058</text>
<text transform="matrix(1.56 0.002 0 1 637.12 429.41)" font-size="5.6" text-anchor="middle">790425</text>
<text transform="matrix(1.56 0.002 0 1 382.1 435.91)" font-size="5.6" text-anchor="middle">1</text>
<text transform="matrix(1.56 0.002 0 1 393.1 435.91)" font-size="5.6" text-anchor="middle">17</text>
<text transform="matrix(1.56 0.002 0 1 411.55 435.91)" font-size="5.6" text-anchor="middle">1-1704</text>
<text transform="matrix(1.29 0.002 0 1 439.9 436.06)" font-size="5.5" text-anchor="middle" class="k"><tspan>三</tspan>室两厅</text>
<text transform="matrix(1.56 0.002 0 1 461.85 435.91)" font-size="5.6" text-anchor="middle">3.0</text>
<text transform="matrix(1.56 0.002 0 1 481.15 435.91)" font-size="5.6" text-anchor="middle">130.19</text>
<text transform="matrix(1.56 0.002 0 1 505.4 435.91)" font-size="5.6" text-anchor="middle">100.19</text>
<text transform="matrix(1.56 0.002 0 1 528.1 435.91)" font-size="5.6" text-anchor="middle">30.00</text>
<text transform="matrix(1.56 0.002 0 1 550.3 435.91)" font-size="5.6" text-anchor="middle">6528</text>
<text transform="matrix(1.56 0.002 0 1 637.12 435.91)" font-size="5.6" text-anchor="middle">849880</text>
<text transform="matrix(1.56 0.002 0 1 382.1 442.42)" font-size="5.6" text-anchor="middle">1</text>
<text transform="matrix(1.56 0.002 0 1 393.1 442.42)" font-size="5.6" text-anchor="middle">17</text>
<text transform="matrix(1.56 0.002 0 1 411.55 442.42)" font-size="5.6" text-anchor="middle">2-1701</text>
<text transform="matrix(1.29 0.002 0 1 439.9 442.57)" font-size="5.5" text-anchor="middle" class="k"><tspan>三</tspan>室两厅</text>
<text transform="matrix(1.56 0.002 0 1 461.85 442.42)" font-size="5.6" text-anchor="middle">3.0</text>
<text transform="matrix(1.56 0.002 0 1 481.15 442.42)" font-size="5.6" text-anchor="middle">130.19</text>
<text transform="matrix(1.56 0.002 0 1 505.4 442.42)" font-size="5.6" text-anchor="middle">100.19</text>
<text transform="matrix(1.56 0.002 0 1 528.1 442.42)" font-size="5.6" text-anchor="middle">30.00</text>
<text transform="matrix(1.56 0.002 0 1 550.3 442.42)" font-size="5.6" text-anchor="middle">6528</text>
<text transform="matrix(1.56 0.002 0 1 637.12 442.42)" font-size="5.6" text-anchor="middle">849880</text>
<text transform="matrix(1.56 0.002 0 1 382.1 448.93)" font-size="5.6" text-anchor="middle">1</text>
<text transform="matrix(1.56 0.002 0 1 393.1 448.93)" font-size="5.6" text-anchor="middle">17</text>
<text transform="matrix(1.56 0.002 0 1 411.55 448.93)" font-size="5.6" text-anchor="middle">2-1702</text>
<text transform="matrix(1.29 0.002 0 1 439.9 449.08)" font-size="5.5" text-anchor="middle" class="k"><tspan>三</tspan>室两厅</text>
<text transform="matrix(1.56 0.002 0 1 461.85 448.93)" font-size="5.6" text-anchor="middle">3.0</text>
<text transform="matrix(1.56 0.002 0 1 481.15 448.93)" font-size="5.6" text-anchor="middle">111.99</text>
<text transform="matrix(1.56 0.002 0 1 505.4 448.93)" font-size="5.6" text-anchor="middle">86.18</text>
<text transform="matrix(1.56 0.002 0 1 528.1 448.93)" font-size="5.6" text-anchor="middle">25.81</text>
<text transform="matrix(1.56 0.002 0 1 550.3 448.93)" font-size="5.6" text-anchor="middle">7058</text>
<text transform="matrix(1.56 0.002 0 1 637.12 448.93)" font-size="5.6" text-anchor="middle">790425</text>
<text transform="matrix(1.56 0.002 0 1 382.1 455.43)" font-size="5.6" text-anchor="middle">1</text>
<text transform="matrix(1.56 0.002 0 1 393.1 455.43)" font-size="5.6" text-anchor="middle">17</text>
<text transform="matrix(1.56 0.002 0 1 411.55 455.43)" font-size="5.6" text-anchor="middle">2-1703</text>
<text transform="matrix(1.29 0.002 0 1 439.9 455.58)" font-size="5.5" text-anchor="middle" class="k"><tspan>三</tspan>室两厅</text>
<text transform="matrix(1.56 0.002 0 1 461.85 455.43)" font-size="5.6" text-anchor="middle">3.0</text>
<text transform="matrix(1.56 0.002 0 1 481.15 455.43)" font-size="5.6" text-anchor="middle">111.99</text>
<text transform="matrix(1.56 0.002 0 1 505.4 455.43)" font-size="5.6" text-anchor="middle">86.18</text>
<text transform="matrix(1.56 0.002 0 1 528.1 455.43)" font-size="5.6" text-anchor="middle">25.81</text>
<text transform="matrix(1.56 0.002 0 1 550.3 455.43)" font-size="5.6" text-anchor="middle">7058</text>
<text transform="matrix(1.56 0.002 0 1 637.12 455.43)" font-size="5.6" text-anchor="middle">790425</text>
<text transform="matrix(1.56 0.002 0 1 382.1 461.94)" font-size="5.6" text-anchor="middle">1</text>
<text transform="matrix(1.56 0.002 0 1 393.1 461.94)" font-size="5.6" text-anchor="middle">17</text>
<text transform="matrix(1.56 0.002 0 1 411.55 461.94)" font-size="5.6" text-anchor="middle">2-1704</text>
<text transform="matrix(1.29 0.002 0 1 439.9 462.09)" font-size="5.5" text-anchor="middle" class="k"><tspan>三</tspan>室两厅</text>
<text transform="matrix(1.56 0.002 0 1 461.85 461.94)" font-size="5.6" text-anchor="middle">3.0</text>
<text transform="matrix(1.56 0.002 0 1 481.15 461.94)" font-size="5.6" text-anchor="middle">125.97</text>
<text transform="matrix(1.56 0.002 0 1 505.4 461.94)" font-size="5.6" text-anchor="middle">96.94</text>
<text transform="matrix(1.56 0.002 0 1 528.1 461.94)" font-size="5.6" text-anchor="middle">29.03</text>
<text transform="matrix(1.56 0.002 0 1 550.3 461.94)" font-size="5.6" text-anchor="middle">6808</text>
<text transform="matrix(1.56 0.002 0 1 637.12 461.94)" font-size="5.6" text-anchor="middle">857604</text>
<text transform="matrix(1.56 0.002 0 1 382.1 468.45)" font-size="5.6" text-anchor="middle">1</text>
<text transform="matrix(1.56 0.002 0 1 393.1 468.45)" font-size="5.6" text-anchor="middle">18</text>
<text transform="matrix(1.56 0.002 0 1 411.55 468.45)" font-size="5.6" text-anchor="middle">1-1801</text>
<text transform="matrix(1.29 0.002 0 1 439.9 468.6)" font-size="5.5" text-anchor="middle" class="k"><tspan>三</tspan>室两厅</text>
<text transform="matrix(1.56 0.002 0 1 461.85 468.45)" font-size="5.6" text-anchor="middle">3.0</text>
<text transform="matrix(1.56 0.002 0 1 481.15 468.45)" font-size="5.6" text-anchor="middle">125.97</text>
<text transform="matrix(1.56 0.002 0 1 505.4 468.45)" font-size="5.6" text-anchor="middle">96.94</text>
<text transform="matrix(1.56 0.002 0 1 528.1 468.45)" font-size="5.6" text-anchor="middle">29.03</text>
<text transform="matrix(1.56 0.002 0 1 550.3 468.45)" font-size="5.6" text-anchor="middle">6828</text>
<text transform="matrix(1.56 0.002 0 1 637.12 468.45)" font-size="5.6" text-anchor="middle">860123</text>
<text transform="matrix(1.56 0.002 0 1 382.1 474.96)" font-size="5.6" text-anchor="middle">1</text>
<text transform="matrix(1.56 0.002 0 1 393.1 474.96)" font-size="5.6" text-anchor="middle">18</text>
<text transform="matrix(1.56 0.002 0 1 411.55 474.96)" font-size="5.6" text-anchor="middle">1-1802</text>
<text transform="matrix(1.29 0.002 0 1 439.9 475.11)" font-size="5.5" text-anchor="middle" class="k"><tspan>三</tspan>室两厅</text>
<text transform="matrix(1.56 0.002 0 1 461.85 474.96)" font-size="5.6" text-anchor="middle">3.0</text>
<text transform="matrix(1.56 0.002 0 1 481.15 474.96)" font-size="5.6" text-anchor="middle">111.99</text>
<text transform="matrix(1.56 0.002 0 1 505.4 474.96)" font-size="5.6" text-anchor="middle">86.18</text>
<text transform="matrix(1.56 0.002 0 1 528.1 474.96)" font-size="5.6" text-anchor="middle">25.81</text>
<text transform="matrix(1.56 0.002 0 1 550.3 474.96)" font-size="5.6" text-anchor="middle">7078</text>
<text transform="matrix(1.56 0.002 0 1 637.12 474.96)" font-size="5.6" text-anchor="middle">792665</text>
<text transform="matrix(1.56 0.002 0 1 382.1 481.46)" font-size="5.6" text-anchor="middle">1</text>
<text transform="matrix(1.56 0.002 0 1 393.1 481.46)" font-size="5.6" text-anchor="middle">18</text>
<text transform="matrix(1.56 0.002 0 1 411.55 481.46)" font-size="5.6" text-anchor="middle">1-1803</text>
<text transform="matrix(1.29 0.002 0 1 439.9 481.61)" font-size="5.5" text-anchor="middle" class="k"><tspan>三</tspan>室两厅</text>
<text transform="matrix(1.56 0.002 0 1 461.85 481.46)" font-size="5.6" text-anchor="middle">3.0</text>
<text transform="matrix(1.56 0.002 0 1 481.15 481.46)" font-size="5.6" text-anchor="middle">111.99</text>
<text transform="matrix(1.56 0.002 0 1 505.4 481.46)" font-size="5.6" text-anchor="middle">86.18</text>
<text transform="matrix(1.56 0.002 0 1 528.1 481.46)" font-size="5.6" text-anchor="middle">25.81</text>
<text transform="matrix(1.56 0.002 0 1 550.3 481.46)" font-size="5.6" text-anchor="middle">7078</text>
<text transform="matrix(1.56 0.002 0 1 637.12 481.46)" font-size="5.6" text-anchor="middle">792665</text>
<text transform="matrix(1.56 0.002 0 1 382.1 487.97)" font-size="5.6" text-anchor="middle">1</text>
<text transform="matrix(1.56 0.002 0 1 393.1 487.97)" font-size="5.6" text-anchor="middle">18</text>
<text transform="matrix(1.56 0.002 0 1 411.55 487.97)" font-size="5.6" text-anchor="middle">1-1804</text>
<text transform="matrix(1.29 0.002 0 1 439.9 488.12)" font-size="5.5" text-anchor="middle" class="k"><tspan>三</tspan>室两厅</text>
<text transform="matrix(1.56 0.002 0 1 461.85 487.97)" font-size="5.6" text-anchor="middle">3.0</text>
<text transform="matrix(1.56 0.002 0 1 481.15 487.97)" font-size="5.6" text-anchor="middle">130.19</text>
<text transform="matrix(1.56 0.002 0 1 505.4 487.97)" font-size="5.6" text-anchor="middle">100.19</text>
<text transform="matrix(1.56 0.002 0 1 528.1 487.97)" font-size="5.6" text-anchor="middle">30.00</text>
<text transform="matrix(1.56 0.002 0 1 550.3 487.97)" font-size="5.6" text-anchor="middle">6548</text>
<text transform="matrix(1.56 0.002 0 1 637.12 487.97)" font-size="5.6" text-anchor="middle">852484</text>
<text transform="matrix(1.56 0.002 0 1 382.1 494.48)" font-size="5.6" text-anchor="middle">1</text>
<text transform="matrix(1.56 0.002 0 1 393.1 494.48)" font-size="5.6" text-anchor="middle">18</text>
<text transform="matrix(1.56 0.002 0 1 411.55 494.48)" font-size="5.6" text-anchor="middle">2-1801</text>
<text transform="matrix(1.29 0.002 0 1 439.9 494.63)" font-size="5.5" text-anchor="middle" class="k"><tspan>三</tspan>室两厅</text>
<text transform="matrix(1.56 0.002 0 1 461.85 494.48)" font-size="5.6" text-anchor="middle">3.0</text>
<text transform="matrix(1.56 0.002 0 1 481.15 494.48)" font-size="5.6" text-anchor="middle">130.19</text>
<text transform="matrix(1.56 0.002 0 1 505.4 494.48)" font-size="5.6" text-anchor="middle">100.19</text>
<text transform="matrix(1.56 0.002 0 1 528.1 494.48)" font-size="5.6" text-anchor="middle">30.00</text>
<text transform="matrix(1.56 0.002 0 1 550.3 494.48)" font-size="5.6" text-anchor="middle">6548</text>
<text transform="matrix(1.56 0.002 0 1 637.12 494.48)" font-size="5.6" text-anchor="middle">852484</text>
<text transform="matrix(1.56 0.002 0 1 382.1 500.98)" font-size="5.6" text-anchor="middle">1</text>
<text transform="matrix(1.56 0.002 0 1 393.1 500.98)" font-size="5.6" text-anchor="middle">18</text>
<text transform="matrix(1.56 0.002 0 1 411.55 500.98)" font-size="5.6" text-anchor="middle">2-1802</text>
<text transform="matrix(1.29 0.002 0 1 439.9 501.13)" font-size="5.5" text-anchor="middle" class="k"><tspan>三</tspan>室两厅</text>
<text transform="matrix(1.56 0.002 0 1 461.85 500.98)" font-size="5.6" text-anchor="middle">3.0</text>
<text transform="matrix(1.56 0.002 0 1 481.15 500.98)" font-size="5.6" text-anchor="middle">111.99</text>
<text transform="matrix(1.56 0.002 0 1 505.4 500.98)" font-size="5.6" text-anchor="middle">86.18</text>
<text transform="matrix(1.56 0.002 0 1 528.1 500.98)" font-size="5.6" text-anchor="middle">25.81</text>
<text transform="matrix(1.56 0.002 0 1 550.3 500.98)" font-size="5.6" text-anchor="middle">7078</text>
<text transform="matrix(1.56 0.002 0 1 637.12 500.98)" font-size="5.6" text-anchor="middle">792665</text>
<text transform="matrix(1.56 0.002 0 1 382.1 507.49)" font-size="5.6" text-anchor="middle">1</text>
<text transform="matrix(1.56 0.002 0 1 393.1 507.49)" font-size="5.6" text-anchor="middle">18</text>
<text transform="matrix(1.56 0.002 0 1 411.55 507.49)" font-size="5.6" text-anchor="middle">2-1803</text>
<text transform="matrix(1.29 0.002 0 1 439.9 507.64)" font-size="5.5" text-anchor="middle" class="k"><tspan>三</tspan>室两厅</text>
<text transform="matrix(1.56 0.002 0 1 461.85 507.49)" font-size="5.6" text-anchor="middle">3.0</text>
<text transform="matrix(1.56 0.002 0 1 481.15 507.49)" font-size="5.6" text-anchor="middle">111.99</text>
<text transform="matrix(1.56 0.002 0 1 505.4 507.49)" font-size="5.6" text-anchor="middle">86.18</text>
<text transform="matrix(1.56 0.002 0 1 528.1 507.49)" font-size="5.6" text-anchor="middle">25.81</text>
<text transform="matrix(1.56 0.002 0 1 550.3 507.49)" font-size="5.6" text-anchor="middle">7078</text>
<text transform="matrix(1.56 0.002 0 1 637.12 507.49)" font-size="5.6" text-anchor="middle">792665</text>
<text transform="matrix(1.56 0.002 0 1 382.1 514)" font-size="5.6" text-anchor="middle">1</text>
<text transform="matrix(1.56 0.002 0 1 393.1 514)" font-size="5.6" text-anchor="middle">18</text>
<text transform="matrix(1.56 0.002 0 1 411.55 514)" font-size="5.6" text-anchor="middle">2-1804</text>
<text transform="matrix(1.29 0.002 0 1 439.9 514.15)" font-size="5.5" text-anchor="middle" class="k"><tspan>三</tspan>室两厅</text>
<text transform="matrix(1.56 0.002 0 1 461.85 514)" font-size="5.6" text-anchor="middle">3.0</text>
<text transform="matrix(1.56 0.002 0 1 481.15 514)" font-size="5.6" text-anchor="middle">125.97</text>
<text transform="matrix(1.56 0.002 0 1 505.4 514)" font-size="5.6" text-anchor="middle">96.94</text>
<text transform="matrix(1.56 0.002 0 1 528.1 514)" font-size="5.6" text-anchor="middle">29.03</text>
<text transform="matrix(1.56 0.002 0 1 550.3 514)" font-size="5.6" text-anchor="middle">6828</text>
<text transform="matrix(1.56 0.002 0 1 637.12 514)" font-size="5.6" text-anchor="middle">860123</text>
<text transform="matrix(1.56 0.002 0 1 382.1 520.51)" font-size="5.6" text-anchor="middle">1</text>
<text transform="matrix(1.56 0.002 0 1 393.1 520.51)" font-size="5.6" text-anchor="middle">19</text>
<text transform="matrix(1.56 0.002 0 1 411.55 520.51)" font-size="5.6" text-anchor="middle">1-1901</text>
<text transform="matrix(1.29 0.002 0 1 439.9 520.66)" font-size="5.5" text-anchor="middle" class="k"><tspan>三</tspan>室两厅</text>
<text transform="matrix(1.56 0.002 0 1 461.85 520.51)" font-size="5.6" text-anchor="middle">3.0</text>
<text transform="matrix(1.56 0.002 0 1 481.15 520.51)" font-size="5.6" text-anchor="middle">125.97</text>
<text transform="matrix(1.56 0.002 0 1 505.4 520.51)" font-size="5.6" text-anchor="middle">96.94</text>
<text transform="matrix(1.56 0.002 0 1 528.1 520.51)" font-size="5.6" text-anchor="middle">29.03</text>
<text transform="matrix(1.56 0.002 0 1 550.3 520.51)" font-size="5.6" text-anchor="middle">6848</text>
<text transform="matrix(1.56 0.002 0 1 637.12 520.51)" font-size="5.6" text-anchor="middle">862643</text>
<text transform="matrix(1.56 0.002 0 1 382.1 527.01)" font-size="5.6" text-anchor="middle">1</text>
<text transform="matrix(1.56 0.002 0 1 393.1 527.01)" font-size="5.6" text-anchor="middle">19</text>
<text transform="matrix(1.56 0.002 0 1 411.55 527.01)" font-size="5.6" text-anchor="middle">1-1902</text>
<text transform="matrix(1.29 0.002 0 1 439.9 527.16)" font-size="5.5" text-anchor="middle" class="k"><tspan>三</tspan>室两厅</text>
<text transform="matrix(1.56 0.002 0 1 461.85 527.01)" font-size="5.6" text-anchor="middle">3.0</text>
<text transform="matrix(1.56 0.002 0 1 481.15 527.01)" font-size="5.6" text-anchor="middle">111.99</text>
<text transform="matrix(1.56 0.002 0 1 505.4 527.01)" font-size="5.6" text-anchor="middle">86.18</text>
<text transform="matrix(1.56 0.002 0 1 528.1 527.01)" font-size="5.6" text-anchor="middle">25.81</text>
<text transform="matrix(1.56 0.002 0 1 550.3 527.01)" font-size="5.6" text-anchor="middle">7098</text>
<text transform="matrix(1.56 0.002 0 1 637.12 527.01)" font-size="5.6" text-anchor="middle">794905</text>
<text transform="matrix(1.56 0.002 0 1 382.1 533.52)" font-size="5.6" text-anchor="middle">1</text>
<text transform="matrix(1.56 0.002 0 1 393.1 533.52)" font-size="5.6" text-anchor="middle">19</text>
<text transform="matrix(1.56 0.002 0 1 411.55 533.52)" font-size="5.6" text-anchor="middle">1-1903</text>
<text transform="matrix(1.29 0.002 0 1 439.9 533.67)" font-size="5.5" text-anchor="middle" class="k"><tspan>三</tspan>室两厅</text>
<text transform="matrix(1.56 0.002 0 1 461.85 533.52)" font-size="5.6" text-anchor="middle">3.0</text>
<text transform="matrix(1.56 0.002 0 1 481.15 533.52)" font-size="5.6" text-anchor="middle">111.99</text>
<text transform="matrix(1.56 0.002 0 1 505.4 533.52)" font-size="5.6" text-anchor="middle">86.18</text>
<text transform="matrix(1.56 0.002 0 1 528.1 533.52)" font-size="5.6" text-anchor="middle">25.81</text>
<text transform="matrix(1.56 0.002 0 1 550.3 533.52)" font-size="5.6" text-anchor="middle">7098</text>
<text transform="matrix(1.56 0.002 0 1 637.12 533.52)" font-size="5.6" text-anchor="middle">794905</text>
<text transform="matrix(1.56 0.002 0 1 382.1 540.03)" font-size="5.6" text-anchor="middle">1</text>
<text transform="matrix(1.56 0.002 0 1 393.1 540.03)" font-size="5.6" text-anchor="middle">19</text>
<text transform="matrix(1.56 0.002 0 1 411.55 540.03)" font-size="5.6" text-anchor="middle">1-1904</text>
<text transform="matrix(1.29 0.002 0 1 439.9 540.18)" font-size="5.5" text-anchor="middle" class="k"><tspan>三</tspan>室两厅</text>
<text transform="matrix(1.56 0.002 0 1 461.85 540.03)" font-size="5.6" text-anchor="middle">3.0</text>
<text transform="matrix(1.56 0.002 0 1 481.15 540.03)" font-size="5.6" text-anchor="middle">130.19</text>
<text transform="matrix(1.56 0.002 0 1 505.4 540.03)" font-size="5.6" text-anchor="middle">100.19</text>
<text transform="matrix(1.56 0.002 0 1 528.1 540.03)" font-size="5.6" text-anchor="middle">30.00</text>
<text transform="matrix(1.56 0.002 0 1 550.3 540.03)" font-size="5.6" text-anchor="middle">6568</text>
<text transform="matrix(1.56 0.002 0 1 637.12 540.03)" font-size="5.6" text-anchor="middle">855088</text>
<text transform="matrix(1.56 0.002 0 1 382.1 546.53)" font-size="5.6" text-anchor="middle">1</text>
<text transform="matrix(1.56 0.002 0 1 393.1 546.53)" font-size="5.6" text-anchor="middle">19</text>
<text transform="matrix(1.56 0.002 0 1 411.55 546.53)" font-size="5.6" text-anchor="middle">2-1901</text>
<text transform="matrix(1.29 0.002 0 1 439.9 546.68)" font-size="5.5" text-anchor="middle" class="k"><tspan>三</tspan>室两厅</text>
<text transform="matrix(1.56 0.002 0 1 461.85 546.53)" font-size="5.6" text-anchor="middle">3.0</text>
<text transform="matrix(1.56 0.002 0 1 481.15 546.53)" font-size="5.6" text-anchor="middle">130.19</text>
<text transform="matrix(1.56 0.002 0 1 505.4 546.53)" font-size="5.6" text-anchor="middle">100.19</text>
<text transform="matrix(1.56 0.002 0 1 528.1 546.53)" font-size="5.6" text-anchor="middle">30.00</text>
<text transform="matrix(1.56 0.002 0 1 550.3 546.53)" font-size="5.6" text-anchor="middle">6568</text>
<text transform="matrix(1.56 0.002 0 1 637.12 546.53)" font-size="5.6" text-anchor="middle">855088</text>
<text transform="matrix(1.56 0.002 0 1 382.1 553.04)" font-size="5.6" text-anchor="middle">1</text>
<text transform="matrix(1.56 0.002 0 1 393.1 553.04)" font-size="5.6" text-anchor="middle">19</text>
<text transform="matrix(1.56 0.002 0 1 411.55 553.04)" font-size="5.6" text-anchor="middle">2-1902</text>
<text transform="matrix(1.29 0.002 0 1 439.9 553.19)" font-size="5.5" text-anchor="middle" class="k"><tspan>三</tspan>室两厅</text>
<text transform="matrix(1.56 0.002 0 1 461.85 553.04)" font-size="5.6" text-anchor="middle">3.0</text>
<text transform="matrix(1.56 0.002 0 1 481.15 553.04)" font-size="5.6" text-anchor="middle">111.99</text>
<text transform="matrix(1.56 0.002 0 1 505.4 553.04)" font-size="5.6" text-anchor="middle">86.18</text>
<text transform="matrix(1.56 0.002 0 1 528.1 553.04)" font-size="5.6" text-anchor="middle">25.81</text>
<text transform="matrix(1.56 0.002 0 1 550.3 553.04)" font-size="5.6" text-anchor="middle">7098</text>
<text transform="matrix(1.56 0.002 0 1 637.12 553.04)" font-size="5.6" text-anchor="middle">794905</text>
<text transform="matrix(1.56 0.002 0 1 382.1 559.55)" font-size="5.6" text-anchor="middle">1</text>
<text transform="matrix(1.56 0.002 0 1 393.1 559.55)" font-size="5.6" text-anchor="middle">19</text>
<text transform="matrix(1.56 0.002 0 1 411.55 559.55)" font-size="5.6" text-anchor="middle">2-1903</text>
<text transform="matrix(1.29 0.002 0 1 439.9 559.7)" font-size="5.5" text-anchor="middle" class="k"><tspan>三</tspan>室两厅</text>
<text transform="matrix(1.56 0.002 0 1 461.85 559.55)" font-size="5.6" text-anchor="middle">3.0</text>
<text transform="matrix(1.56 0.002 0 1 481.15 559.55)" font-size="5.6" text-anchor="middle">111.99</text>
<text transform="matrix(1.56 0.002 0 1 505.4 559.55)" font-size="5.6" text-anchor="middle">86.18</text>
<text transform="matrix(1.56 0.002 0 1 528.1 559.55)" font-size="5.6" text-anchor="middle">25.81</text>
<text transform="matrix(1.56 0.002 0 1 550.3 559.55)" font-size="5.6" text-anchor="middle">7098</text>
<text transform="matrix(1.56 0.002 0 1 637.12 559.55)" font-size="5.6" text-anchor="middle">794905</text>
<text transform="matrix(1.56 0.002 0 1 382.1 566.05)" font-size="5.6" text-anchor="middle">1</text>
<text transform="matrix(1.56 0.002 0 1 393.1 566.05)" font-size="5.6" text-anchor="middle">19</text>
<text transform="matrix(1.56 0.002 0 1 411.55 566.05)" font-size="5.6" text-anchor="middle">2-1904</text>
<text transform="matrix(1.29 0.002 0 1 439.9 566.2)" font-size="5.5" text-anchor="middle" class="k"><tspan>三</tspan>室两厅</text>
<text transform="matrix(1.56 0.002 0 1 461.85 566.05)" font-size="5.6" text-anchor="middle">3.0</text>
<text transform="matrix(1.56 0.002 0 1 481.15 566.05)" font-size="5.6" text-anchor="middle">125.97</text>
<text transform="matrix(1.56 0.002 0 1 505.4 566.05)" font-size="5.6" text-anchor="middle">96.94</text>
<text transform="matrix(1.56 0.002 0 1 528.1 566.05)" font-size="5.6" text-anchor="middle">29.03</text>
<text transform="matrix(1.56 0.002 0 1 550.3 566.05)" font-size="5.6" text-anchor="middle">6848</text>
<text transform="matrix(1.56 0.002 0 1 637.12 566.05)" font-size="5.6" text-anchor="middle">862643</text>
<text transform="matrix(1.56 0.002 0 1 382.1 572.56)" font-size="5.6" text-anchor="middle">1</text>
<text transform="matrix(1.56 0.002 0 1 393.1 572.56)" font-size="5.6" text-anchor="middle">20</text>
<text transform="matrix(1.56 0.002 0 1 411.55 572.56)" font-size="5.6" text-anchor="middle">1-2001</text>
<text transform="matrix(1.29 0.002 0 1 439.9 572.71)" font-size="5.5" text-anchor="middle" class="k"><tspan>三</tspan>室两厅</text>
<text transform="matrix(1.56 0.002 0 1 461.85 572.56)" font-size="5.6" text-anchor="middle">3.0</text>
<text transform="matrix(1.56 0.002 0 1 481.15 572.56)" font-size="5.6" text-anchor="middle">125.97</text>
<text transform="matrix(1.56 0.002 0 1 505.4 572.56)" font-size="5.6" text-anchor="middle">96.94</text>
<text transform="matrix(1.56 0.002 0 1 528.1 572.56)" font-size="5.6" text-anchor="middle">29.03</text>
<text transform="matrix(1.56 0.002 0 1 550.3 572.56)" font-size="5.6" text-anchor="middle">6868</text>
<text transform="matrix(1.56 0.002 0 1 637.12 572.56)" font-size="5.6" text-anchor="middle">865162</text>
<text transform="matrix(1.56 0.002 0 1 382.1 579.07)" font-size="5.6" text-anchor="middle">1</text>
<text transform="matrix(1.56 0.002 0 1 393.1 579.07)" font-size="5.6" text-anchor="middle">20</text>
<text transform="matrix(1.56 0.002 0 1 411.55 579.07)" font-size="5.6" text-anchor="middle">1-2002</text>
<text transform="matrix(1.29 0.002 0 1 439.9 579.22)" font-size="5.5" text-anchor="middle" class="k"><tspan>三</tspan>室两厅</text>
<text transform="matrix(1.56 0.002 0 1 461.85 579.07)" font-size="5.6" text-anchor="middle">3.0</text>
<text transform="matrix(1.56 0.002 0 1 481.15 579.07)" font-size="5.6" text-anchor="middle">111.99</text>
<text transform="matrix(1.56 0.002 0 1 505.4 579.07)" font-size="5.6" text-anchor="middle">86.18</text>
<text transform="matrix(1.56 0.002 0 1 528.1 579.07)" font-size="5.6" text-anchor="middle">25.81</text>
<text transform="matrix(1.56 0.002 0 1 550.3 579.07)" font-size="5.6" text-anchor="middle">7118</text>
<text transform="matrix(1.56 0.002 0 1 637.12 579.07)" font-size="5.6" text-anchor="middle">797145</text>
<text transform="matrix(1.56 0.002 0 1 382.1 585.58)" font-size="5.6" text-anchor="middle">1</text>
<text transform="matrix(1.56 0.002 0 1 393.1 585.58)" font-size="5.6" text-anchor="middle">20</text>
<text transform="matrix(1.56 0.002 0 1 411.55 585.58)" font-size="5.6" text-anchor="middle">1-2003</text>
<text transform="matrix(1.29 0.002 0 1 439.9 585.73)" font-size="5.5" text-anchor="middle" class="k"><tspan>三</tspan>室两厅</text>
<text transform="matrix(1.56 0.002 0 1 461.85 585.58)" font-size="5.6" text-anchor="middle">3.0</text>
<text transform="matrix(1.56 0.002 0 1 481.15 585.58)" font-size="5.6" text-anchor="middle">111.99</text>
<text transform="matrix(1.56 0.002 0 1 505.4 585.58)" font-size="5.6" text-anchor="middle">86.18</text>
<text transform="matrix(1.56 0.002 0 1 528.1 585.58)" font-size="5.6" text-anchor="middle">25.81</text>
<text transform="matrix(1.56 0.002 0 1 550.3 585.58)" font-size="5.6" text-anchor="middle">7118</text>
<text transform="matrix(1.56 0.002 0 1 637.12 585.58)" font-size="5.6" text-anchor="middle">797145</text>
<text transform="matrix(1.56 0.002 0 1 382.1 592.08)" font-size="5.6" text-anchor="middle">1</text>
<text transform="matrix(1.56 0.002 0 1 393.1 592.08)" font-size="5.6" text-anchor="middle">20</text>
<text transform="matrix(1.56 0.002 0 1 411.55 592.08)" font-size="5.6" text-anchor="middle">1-2004</text>
<text transform="matrix(1.29 0.002 0 1 439.9 592.23)" font-size="5.5" text-anchor="middle" class="k"><tspan>三</tspan>室两厅</text>
<text transform="matrix(1.56 0.002 0 1 461.85 592.08)" font-size="5.6" text-anchor="middle">3.0</text>
<text transform="matrix(1.56 0.002 0 1 481.15 592.08)" font-size="5.6" text-anchor="middle">130.19</text>
<text transform="matrix(1.56 0.002 0 1 505.4 592.08)" font-size="5.6" text-anchor="middle">100.19</text>
<text transform="matrix(1.56 0.002 0 1 528.1 592.08)" font-size="5.6" text-anchor="middle">30.00</text>
<text transform="matrix(1.56 0.002 0 1 550.3 592.08)" font-size="5.6" text-anchor="middle">6588</text>
<text transform="matrix(1.56 0.002 0 1 637.12 592.08)" font-size="5.6" text-anchor="middle">857692</text>
<text transform="matrix(1.56 0.002 0 1 382.1 598.59)" font-size="5.6" text-anchor="middle">1</text>
<text transform="matrix(1.56 0.002 0 1 393.1 598.59)" font-size="5.6" text-anchor="middle">20</text>
<text transform="matrix(1.56 0.002 0 1 411.55 598.59)" font-size="5.6" text-anchor="middle">2-2001</text>
<text transform="matrix(1.29 0.002 0 1 439.9 598.74)" font-size="5.5" text-anchor="middle" class="k"><tspan>三</tspan>室两厅</text>
<text transform="matrix(1.56 0.002 0 1 461.85 598.59)" font-size="5.6" text-anchor="middle">3.0</text>
<text transform="matrix(1.56 0.002 0 1 481.15 598.59)" font-size="5.6" text-anchor="middle">130.19</text>
<text transform="matrix(1.56 0.002 0 1 505.4 598.59)" font-size="5.6" text-anchor="middle">100.19</text>
<text transform="matrix(1.56 0.002 0 1 528.1 598.59)" font-size="5.6" text-anchor="middle">30.00</text>
<text transform="matrix(1.56 0.002 0 1 550.3 598.59)" font-size="5.6" text-anchor="middle">6588</text>
<text transform="matrix(1.56 0.002 0 1 637.12 598.59)" font-size="5.6" text-anchor="middle">857692</text>
<text transform="matrix(1.56 0.002 0 1 382.1 605.1)" font-size="5.6" text-anchor="middle">1</text>
<text transform="matrix(1.56 0.002 0 1 393.1 605.1)" font-size="5.6" text-anchor="middle">20</text>
<text transform="matrix(1.56 0.002 0 1 411.55 605.1)" font-size="5.6" text-anchor="middle">2-2002</text>
<text transform="matrix(1.29 0.002 0 1 439.9 605.25)" font-size="5.5" text-anchor="middle" class="k"><tspan>三</tspan>室两厅</text>
<text transform="matrix(1.56 0.002 0 1 461.85 605.1)" font-size="5.6" text-anchor="middle">3.0</text>
<text transform="matrix(1.56 0.002 0 1 481.15 605.1)" font-size="5.6" text-anchor="middle">111.99</text>
<text transform="matrix(1.56 0.002 0 1 505.4 605.1)" font-size="5.6" text-anchor="middle">86.18</text>
<text transform="matrix(1.56 0.002 0 1 528.1 605.1)" font-size="5.6" text-anchor="middle">25.81</text>
<text transform="matrix(1.56 0.002 0 1 550.3 605.1)" font-size="5.6" text-anchor="middle">7118</text>
<text transform="matrix(1.56 0.002 0 1 637.12 605.1)" font-size="5.6" text-anchor="middle">797145</text>
<text transform="matrix(1.56 0.002 0 1 382.1 611.6)" font-size="5.6" text-anchor="middle">1</text>
<text transform="matrix(1.56 0.002 0 1 393.1 611.6)" font-size="5.6" text-anchor="middle">20</text>
<text transform="matrix(1.56 0.002 0 1 411.55 611.6)" font-size="5.6" text-anchor="middle">2-2003</text>
<text transform="matrix(1.29 0.002 0 1 439.9 611.75)" font-size="5.5" text-anchor="middle" class="k"><tspan>三</tspan>室两厅</text>
<text transform="matrix(1.56 0.002 0 1 461.85 611.6)" font-size="5.6" text-anchor="middle">3.0</text>
<text transform="matrix(1.56 0.002 0 1 481.15 611.6)" font-size="5.6" text-anchor="middle">111.99</text>
<text transform="matrix(1.56 0.002 0 1 505.4 611.6)" font-size="5.6" text-anchor="middle">86.18</text>
<text transform="matrix(1.56 0.002 0 1 528.1 611.6)" font-size="5.6" text-anchor="middle">25.81</text>
<text transform="matrix(1.56 0.002 0 1 550.3 611.6)" font-size="5.6" text-anchor="middle">7118</text>
<text transform="matrix(1.56 0.002 0 1 637.12 611.6)" font-size="5.6" text-anchor="middle">797145</text>
<text transform="matrix(1.56 0.002 0 1 382.1 618.11)" font-size="5.6" text-anchor="middle">1</text>
<text transform="matrix(1.56 0.002 0 1 393.1 618.11)" font-size="5.6" text-anchor="middle">20</text>
<text transform="matrix(1.56 0.002 0 1 411.55 618.11)" font-size="5.6" text-anchor="middle">2-2004</text>
<text transform="matrix(1.29 0.002 0 1 439.9 618.26)" font-size="5.5" text-anchor="middle" class="k"><tspan>三</tspan>室两厅</text>
<text transform="matrix(1.56 0.002 0 1 461.85 618.11)" font-size="5.6" text-anchor="middle">3.0</text>
<text transform="matrix(1.56 0.002 0 1 481.15 618.11)" font-size="5.6" text-anchor="middle">125.97</text>
<text transform="matrix(1.56 0.002 0 1 505.4 618.11)" font-size="5.6" text-anchor="middle">96.94</text>
<text transform="matrix(1.56 0.002 0 1 528.1 618.11)" font-size="5.6" text-anchor="middle">29.03</text>
<text transform="matrix(1.56 0.002 0 1 550.3 618.11)" font-size="5.6" text-anchor="middle">6868</text>
<text transform="matrix(1.56 0.002 0 1 637.12 618.11)" font-size="5.6" text-anchor="middle">865162</text>
<text transform="matrix(1.56 0.002 0 1 382.1 624.62)" font-size="5.6" text-anchor="middle">1</text>
<text transform="matrix(1.56 0.002 0 1 393.1 624.62)" font-size="5.6" text-anchor="middle">21</text>
<text transform="matrix(1.56 0.002 0 1 411.55 624.62)" font-size="5.6" text-anchor="middle">1-2101</text>
<text transform="matrix(1.29 0.002 0 1 439.9 624.77)" font-size="5.5" text-anchor="middle" class="k"><tspan>三</tspan>室两厅</text>
<text transform="matrix(1.56 0.002 0 1 461.85 624.62)" font-size="5.6" text-anchor="middle">3.0</text>
<text transform="matrix(1.56 0.002 0 1 481.15 624.62)" font-size="5.6" text-anchor="middle">125.97</text>
<text transform="matrix(1.56 0.002 0 1 505.4 624.62)" font-size="5.6" text-anchor="middle">96.94</text>
<text transform="matrix(1.56 0.002 0 1 528.1 624.62)" font-size="5.6" text-anchor="middle">29.03</text>
<text transform="matrix(1.56 0.002 0 1 550.3 624.62)" font-size="5.6" text-anchor="middle">6888</text>
<text transform="matrix(1.56 0.002 0 1 637.12 624.62)" font-size="5.6" text-anchor="middle">867681</text>
<text transform="matrix(1.56 0.002 0 1 382.1 631.13)" font-size="5.6" text-anchor="middle">1</text>
<text transform="matrix(1.56 0.002 0 1 393.1 631.13)" font-size="5.6" text-anchor="middle">21</text>
<text transform="matrix(1.56 0.002 0 1 411.55 631.13)" font-size="5.6" text-anchor="middle">1-2102</text>
<text transform="matrix(1.29 0.002 0 1 439.9 631.28)" font-size="5.5" text-anchor="middle" class="k"><tspan>三</tspan>室两厅</text>
<text transform="matrix(1.56 0.002 0 1 461.85 631.13)" font-size="5.6" text-anchor="middle">3.0</text>
<text transform="matrix(1.56 0.002 0 1 481.15 631.13)" font-size="5.6" text-anchor="middle">111.99</text>
<text transform="matrix(1.56 0.002 0 1 505.4 631.13)" font-size="5.6" text-anchor="middle">86.18</text>
<text transform="matrix(1.56 0.002 0 1 528.1 631.13)" font-size="5.6" text-anchor="middle">25.81</text>
<text transform="matrix(1.56 0.002 0 1 550.3 631.13)" font-size="5.6" text-anchor="middle">7138</text>
<text transform="matrix(1.56 0.002 0 1 637.12 631.13)" font-size="5.6" text-anchor="middle">799385</text>
<text transform="matrix(1.56 0.002 0 1 382.1 637.63)" font-size="5.6" text-anchor="middle">1</text>
<text transform="matrix(1.56 0.002 0 1 393.1 637.63)" font-size="5.6" text-anchor="middle">21</text>
<text transform="matrix(1.56 0.002 0 1 411.55 637.63)" font-size="5.6" text-anchor="middle">1-2103</text>
<text transform="matrix(1.29 0.002 0 1 439.9 637.78)" font-size="5.5" text-anchor="middle" class="k"><tspan>三</tspan>室两厅</text>
<text transform="matrix(1.56 0.002 0 1 461.85 637.63)" font-size="5.6" text-anchor="middle">3.0</text>
<text transform="matrix(1.56 0.002 0 1 481.15 637.63)" font-size="5.6" text-anchor="middle">111.99</text>
<text transform="matrix(1.56 0.002 0 1 505.4 637.63)" font-size="5.6" text-anchor="middle">86.18</text>
<text transform="matrix(1.56 0.002 0 1 528.1 637.63)" font-size="5.6" text-anchor="middle">25.81</text>
<text transform="matrix(1.56 0.002 0 1 550.3 637.63)" font-size="5.6" text-anchor="middle">7138</text>
<text transform="matrix(1.56 0.002 0 1 637.12 637.63)" font-size="5.6" text-anchor="middle">799385</text>
<text transform="matrix(1.56 0.002 0 1 382.1 644.14)" font-size="5.6" text-anchor="middle">1</text>
<text transform="matrix(1.56 0.002 0 1 393.1 644.14)" font-size="5.6" text-anchor="middle">21</text>
<text transform="matrix(1.56 0.002 0 1 411.55 644.14)" font-size="5.6" text-anchor="middle">1-2104</text>
<text transform="matrix(1.29 0.002 0 1 439.9 644.29)" font-size="5.5" text-anchor="middle" class="k"><tspan>三</tspan>室两厅</text>
<text transform="matrix(1.56 0.002 0 1 461.85 644.14)" font-size="5.6" text-anchor="middle">3.0</text>
<text transform="matrix(1.56 0.002 0 1 481.15 644.14)" font-size="5.6" text-anchor="middle">130.19</text>
<text transform="matrix(1.56 0.002 0 1 505.4 644.14)" font-size="5.6" text-anchor="middle">100.19</text>
<text transform="matrix(1.56 0.002 0 1 528.1 644.14)" font-size="5.6" text-anchor="middle">30.00</text>
<text transform="matrix(1.56 0.002 0 1 550.3 644.14)" font-size="5.6" text-anchor="middle">6608</text>
<text transform="matrix(1.56 0.002 0 1 637.12 644.14)" font-size="5.6" text-anchor="middle">860296</text>
<text transform="matrix(1.56 0.002 0 1 382.1 650.65)" font-size="5.6" text-anchor="middle">1</text>
<text transform="matrix(1.56 0.002 0 1 393.1 650.65)" font-size="5.6" text-anchor="middle">21</text>
<text transform="matrix(1.56 0.002 0 1 411.55 650.65)" font-size="5.6" text-anchor="middle">2-2101</text>
<text transform="matrix(1.29 0.002 0 1 439.9 650.8)" font-size="5.5" text-anchor="middle" class="k"><tspan>三</tspan>室两厅</text>
<text transform="matrix(1.56 0.002 0 1 461.85 650.65)" font-size="5.6" text-anchor="middle">3.0</text>
<text transform="matrix(1.56 0.002 0 1 481.15 650.65)" font-size="5.6" text-anchor="middle">130.19</text>
<text transform="matrix(1.56 0.002 0 1 505.4 650.65)" font-size="5.6" text-anchor="middle">100.19</text>
<text transform="matrix(1.56 0.002 0 1 528.1 650.65)" font-size="5.6" text-anchor="middle">30.00</text>
<text transform="matrix(1.56 0.002 0 1 550.3 650.65)" font-size="5.6" text-anchor="middle">6608</text>
<text transform="matrix(1.56 0.002 0 1 637.12 650.65)" font-size="5.6" text-anchor="middle">860296</text>
<text transform="matrix(1.56 0.002 0 1 681.8 58.5)" font-size="5.6" text-anchor="middle">1</text>
<text transform="matrix(1.56 0.002 0 1 692.7 58.5)" font-size="5.6" text-anchor="middle">21</text>
<text transform="matrix(1.56 0.002 0 1 710.95 58.5)" font-size="5.6" text-anchor="middle">2-2102</text>
<text transform="matrix(1.29 0.002 0 1 739.55 58.65)" font-size="5.5" text-anchor="middle" class="k"><tspan>三</tspan>室两厅</text>
<text transform="matrix(1.56 0.002 0 1 761.85 58.5)" font-size="5.6" text-anchor="middle">3.0</text>
<text transform="matrix(1.56 0.002 0 1 781.1 58.5)" font-size="5.6" text-anchor="middle">111.99</text>
<text transform="matrix(1.56 0.002 0 1 805.2 58.5)" font-size="5.6" text-anchor="middle">86.18</text>
<text transform="matrix(1.56 0.002 0 1 827.75 58.5)" font-size="5.6" text-anchor="middle">25.81</text>
<text transform="matrix(1.56 0.002 0 1 850.1 58.5)" font-size="5.6" text-anchor="middle">7138</text>
<text transform="matrix(1.56 0.002 0 1 936.6 58.5)" font-size="5.6" text-anchor="middle">799385</text>
<text transform="matrix(1.56 0.002 0 1 681.8 65.01)" font-size="5.6" text-anchor="middle">1</text>
<text transform="matrix(1.56 0.002 0 1 692.7 65.01)" font-size="5.6" text-anchor="middle">21</text>
<text transform="matrix(1.56 0.002 0 1 710.95 65.01)" font-size="5.6" text-anchor="middle">2-2103</text>
<text transform="matrix(1.29 0.002 0 1 739.55 65.16)" font-size="5.5" text-anchor="middle" class="k"><tspan>三</tspan>室两厅</text>
<text transform="matrix(1.56 0.002 0 1 761.85 65.01)" font-size="5.6" text-anchor="middle">3.0</text>
<text transform="matrix(1.56 0.002 0 1 781.1 65.01)" font-size="5.6" text-anchor="middle">111.99</text>
<text transform="matrix(1.56 0.002 0 1 805.2 65.01)" font-size="5.6" text-anchor="middle">86.18</text>
<text transform="matrix(1.56 0.002 0 1 827.75 65.01)" font-size="5.6" text-anchor="middle">25.81</text>
<text transform="matrix(1.56 0.002 0 1 850.1 65.01)" font-size="5.6" text-anchor="middle">7138</text>
<text transform="matrix(1.56 0.002 0 1 936.6 65.01)" font-size="5.6" text-anchor="middle">799385</text>
<text transform="matrix(1.56 0.002 0 1 681.8 71.52)" font-size="5.6" text-anchor="middle">1</text>
<text transform="matrix(1.56 0.002 0 1 692.7 71.52)" font-size="5.6" text-anchor="middle">21</text>
<text transform="matrix(1.56 0.002 0 1 710.95 71.52)" font-size="5.6" text-anchor="middle">2-2104</text>
<text transform="matrix(1.29 0.002 0 1 739.55 71.67)" font-size="5.5" text-anchor="middle" class="k"><tspan>三</tspan>室两厅</text>
<text transform="matrix(1.56 0.002 0 1 761.85 71.52)" font-size="5.6" text-anchor="middle">3.0</text>
<text transform="matrix(1.56 0.002 0 1 781.1 71.52)" font-size="5.6" text-anchor="middle">125.97</text>
<text transform="matrix(1.56 0.002 0 1 805.2 71.52)" font-size="5.6" text-anchor="middle">96.94</text>
<text transform="matrix(1.56 0.002 0 1 827.75 71.52)" font-size="5.6" text-anchor="middle">29.03</text>
<text transform="matrix(1.56 0.002 0 1 850.1 71.52)" font-size="5.6" text-anchor="middle">6888</text>
<text transform="matrix(1.56 0.002 0 1 936.6 71.52)" font-size="5.6" text-anchor="middle">867681</text>
<text transform="matrix(1.56 0.002 0 1 681.8 78.02)" font-size="5.6" text-anchor="middle">1</text>
<text transform="matrix(1.56 0.002 0 1 692.7 78.02)" font-size="5.6" text-anchor="middle">22</text>
<text transform="matrix(1.56 0.002 0 1 710.95 78.02)" font-size="5.6" text-anchor="middle">1-2201</text>
<text transform="matrix(1.29 0.002 0 1 739.55 78.17)" font-size="5.5" text-anchor="middle" class="k"><tspan>三</tspan>室两厅</text>
<text transform="matrix(1.56 0.002 0 1 761.85 78.02)" font-size="5.6" text-anchor="middle">3.0</text>
<text transform="matrix(1.56 0.002 0 1 781.1 78.02)" font-size="5.6" text-anchor="middle">125.97</text>
<text transform="matrix(1.56 0.002 0 1 805.2 78.02)" font-size="5.6" text-anchor="middle">96.94</text>
<text transform="matrix(1.56 0.002 0 1 827.75 78.02)" font-size="5.6" text-anchor="middle">29.03</text>
<text transform="matrix(1.56 0.002 0 1 850.1 78.02)" font-size="5.6" text-anchor="middle">6908</text>
<text transform="matrix(1.56 0.002 0 1 936.6 78.02)" font-size="5.6" text-anchor="middle">870201</text>
<text transform="matrix(1.56 0.002 0 1 681.8 84.53)" font-size="5.6" text-anchor="middle">1</text>
<text transform="matrix(1.56 0.002 0 1 692.7 84.53)" font-size="5.6" text-anchor="middle">22</text>
<text transform="matrix(1.56 0.002 0 1 710.95 84.53)" font-size="5.6" text-anchor="middle">1-2202</text>
<text transform="matrix(1.29 0.002 0 1 739.55 84.68)" font-size="5.5" text-anchor="middle" class="k"><tspan>三</tspan>室两厅</text>
<text transform="matrix(1.56 0.002 0 1 761.85 84.53)" font-size="5.6" text-anchor="middle">3.0</text>
<text transform="matrix(1.56 0.002 0 1 781.1 84.53)" font-size="5.6" text-anchor="middle">111.99</text>
<text transform="matrix(1.56 0.002 0 1 805.2 84.53)" font-size="5.6" text-anchor="middle">86.18</text>
<text transform="matrix(1.56 0.002 0 1 827.75 84.53)" font-size="5.6" text-anchor="middle">25.81</text>
<text transform="matrix(1.56 0.002 0 1 850.1 84.53)" font-size="5.6" text-anchor="middle">7158</text>
<text transform="matrix(1.56 0.002 0 1 936.6 84.53)" font-size="5.6" text-anchor="middle">801624</text>
<text transform="matrix(1.56 0.002 0 1 681.8 91.04)" font-size="5.6" text-anchor="middle">1</text>
<text transform="matrix(1.56 0.002 0 1 692.7 91.04)" font-size="5.6" text-anchor="middle">22</text>
<text transform="matrix(1.56 0.002 0 1 710.95 91.04)" font-size="5.6" text-anchor="middle">1-2203</text>
<text transform="matrix(1.29 0.002 0 1 739.55 91.19)" font-size="5.5" text-anchor="middle" class="k"><tspan>三</tspan>室两厅</text>
<text transform="matrix(1.56 0.002 0 1 761.85 91.04)" font-size="5.6" text-anchor="middle">3.0</text>
<text transform="matrix(1.56 0.002 0 1 781.1 91.04)" font-size="5.6" text-anchor="middle">111.99</text>
<text transform="matrix(1.56 0.002 0 1 805.2 91.04)" font-size="5.6" text-anchor="middle">86.18</text>
<text transform="matrix(1.56 0.002 0 1 827.75 91.04)" font-size="5.6" text-anchor="middle">25.81</text>
<text transform="matrix(1.56 0.002 0 1 850.1 91.04)" font-size="5.6" text-anchor="middle">7158</text>
<text transform="matrix(1.56 0.002 0 1 936.6 91.04)" font-size="5.6" text-anchor="middle">801624</text>
<text transform="matrix(1.56 0.002 0 1 681.8 97.55)" font-size="5.6" text-anchor="middle">1</text>
<text transform="matrix(1.56 0.002 0 1 692.7 97.55)" font-size="5.6" text-anchor="middle">22</text>
<text transform="matrix(1.56 0.002 0 1 710.95 97.55)" font-size="5.6" text-anchor="middle">1-2204</text>
<text transform="matrix(1.29 0.002 0 1 739.55 97.7)" font-size="5.5" text-anchor="middle" class="k"><tspan>三</tspan>室两厅</text>
<text transform="matrix(1.56 0.002 0 1 761.85 97.55)" font-size="5.6" text-anchor="middle">3.0</text>
<text transform="matrix(1.56 0.002 0 1 781.1 97.55)" font-size="5.6" text-anchor="middle">130.19</text>
<text transform="matrix(1.56 0.002 0 1 805.2 97.55)" font-size="5.6" text-anchor="middle">100.19</text>
<text transform="matrix(1.56 0.002 0 1 827.75 97.55)" font-size="5.6" text-anchor="middle">30.00</text>
<text transform="matrix(1.56 0.002 0 1 850.1 97.55)" font-size="5.6" text-anchor="middle">6628</text>
<text transform="matrix(1.56 0.002 0 1 936.6 97.55)" font-size="5.6" text-anchor="middle">862899</text>
<text transform="matrix(1.56 0.002 0 1 681.8 104.05)" font-size="5.6" text-anchor="middle">1</text>
<text transform="matrix(1.56 0.002 0 1 692.7 104.05)" font-size="5.6" text-anchor="middle">22</text>
<text transform="matrix(1.56 0.002 0 1 710.95 104.05)" font-size="5.6" text-anchor="middle">2-2201</text>
<text transform="matrix(1.29 0.002 0 1 739.55 104.2)" font-size="5.5" text-anchor="middle" class="k"><tspan>三</tspan>室两厅</text>
<text transform="matrix(1.56 0.002 0 1 761.85 104.05)" font-size="5.6" text-anchor="middle">3.0</text>
<text transform="matrix(1.56 0.002 0 1 781.1 104.05)" font-size="5.6" text-anchor="middle">130.19</text>
<text transform="matrix(1.56 0.002 0 1 805.2 104.05)" font-size="5.6" text-anchor="middle">100.19</text>
<text transform="matrix(1.56 0.002 0 1 827.75 104.05)" font-size="5.6" text-anchor="middle">30.00</text>
<text transform="matrix(1.56 0.002 0 1 850.1 104.05)" font-size="5.6" text-anchor="middle">6628</text>
<text transform="matrix(1.56 0.002 0 1 936.6 104.05)" font-size="5.6" text-anchor="middle">862899</text>
<text transform="matrix(1.56 0.002 0 1 681.8 110.56)" font-size="5.6" text-anchor="middle">1</text>
<text transform="matrix(1.56 0.002 0 1 692.7 110.56)" font-size="5.6" text-anchor="middle">22</text>
<text transform="matrix(1.56 0.002 0 1 710.95 110.56)" font-size="5.6" text-anchor="middle">2-2202</text>
<text transform="matrix(1.29 0.002 0 1 739.55 110.71)" font-size="5.5" text-anchor="middle" class="k"><tspan>三</tspan>室两厅</text>
<text transform="matrix(1.56 0.002 0 1 761.85 110.56)" font-size="5.6" text-anchor="middle">3.0</text>
<text transform="matrix(1.56 0.002 0 1 781.1 110.56)" font-size="5.6" text-anchor="middle">111.99</text>
<text transform="matrix(1.56 0.002 0 1 805.2 110.56)" font-size="5.6" text-anchor="middle">86.18</text>
<text transform="matrix(1.56 0.002 0 1 827.75 110.56)" font-size="5.6" text-anchor="middle">25.81</text>
<text transform="matrix(1.56 0.002 0 1 850.1 110.56)" font-size="5.6" text-anchor="middle">7158</text>
<text transform="matrix(1.56 0.002 0 1 936.6 110.56)" font-size="5.6" text-anchor="middle">801624</text>
<text transform="matrix(1.56 0.002 0 1 681.8 117.07)" font-size="5.6" text-anchor="middle">1</text>
<text transform="matrix(1.56 0.002 0 1 692.7 117.07)" font-size="5.6" text-anchor="middle">22</text>
<text transform="matrix(1.56 0.002 0 1 710.95 117.07)" font-size="5.6" text-anchor="middle">2-2203</text>
<text transform="matrix(1.29 0.002 0 1 739.55 117.22)" font-size="5.5" text-anchor="middle" class="k"><tspan>三</tspan>室两厅</text>
<text transform="matrix(1.56 0.002 0 1 761.85 117.07)" font-size="5.6" text-anchor="middle">3.0</text>
<text transform="matrix(1.56 0.002 0 1 781.1 117.07)" font-size="5.6" text-anchor="middle">111.99</text>
<text transform="matrix(1.56 0.002 0 1 805.2 117.07)" font-size="5.6" text-anchor="middle">86.18</text>
<text transform="matrix(1.56 0.002 0 1 827.75 117.07)" font-size="5.6" text-anchor="middle">25.81</text>
<text transform="matrix(1.56 0.002 0 1 850.1 117.07)" font-size="5.6" text-anchor="middle">7158</text>
<text transform="matrix(1.56 0.002 0 1 936.6 117.07)" font-size="5.6" text-anchor="middle">801624</text>
<text transform="matrix(1.56 0.002 0 1 681.8 123.57)" font-size="5.6" text-anchor="middle">1</text>
<text transform="matrix(1.56 0.002 0 1 692.7 123.57)" font-size="5.6" text-anchor="middle">22</text>
<text transform="matrix(1.56 0.002 0 1 710.95 123.57)" font-size="5.6" text-anchor="middle">2-2204</text>
<text transform="matrix(1.29 0.002 0 1 739.55 123.72)" font-size="5.5" text-anchor="middle" class="k"><tspan>三</tspan>室两厅</text>
<text transform="matrix(1.56 0.002 0 1 761.85 123.57)" font-size="5.6" text-anchor="middle">3.0</text>
<text transform="matrix(1.56 0.002 0 1 781.1 123.57)" font-size="5.6" text-anchor="middle">125.97</text>
<text transform="matrix(1.56 0.002 0 1 805.2 123.57)" font-size="5.6" text-anchor="middle">96.94</text>
<text transform="matrix(1.56 0.002 0 1 827.75 123.57)" font-size="5.6" text-anchor="middle">29.03</text>
<text transform="matrix(1.56 0.002 0 1 850.1 123.57)" font-size="5.6" text-anchor="middle">6908</text>
<text transform="matrix(1.56 0.002 0 1 936.6 123.57)" font-size="5.6" text-anchor="middle">870201</text>
<text transform="matrix(1.56 0.002 0 1 681.8 130.08)" font-size="5.6" text-anchor="middle">1</text>
<text transform="matrix(1.56 0.002 0 1 692.7 130.08)" font-size="5.6" text-anchor="middle">23</text>
<text transform="matrix(1.56 0.002 0 1 710.95 130.08)" font-size="5.6" text-anchor="middle">1-2301</text>
<text transform="matrix(1.29 0.002 0 1 739.55 130.23)" font-size="5.5" text-anchor="middle" class="k"><tspan>三</tspan>室两厅</text>
<text transform="matrix(1.56 0.002 0 1 761.85 130.08)" font-size="5.6" text-anchor="middle">3.0</text>
<text transform="matrix(1.56 0.002 0 1 781.1 130.08)" font-size="5.6" text-anchor="middle">125.97</text>
<text transform="matrix(1.56 0.002 0 1 805.2 130.08)" font-size="5.6" text-anchor="middle">96.94</text>
<text transform="matrix(1.56 0.002 0 1 827.75 130.08)" font-size="5.6" text-anchor="middle">29.03</text>
<text transform="matrix(1.56 0.002 0 1 850.1 130.08)" font-size="5.6" text-anchor="middle">6928</text>
<text transform="matrix(1.56 0.002 0 1 936.6 130.08)" font-size="5.6" text-anchor="middle">872720</text>
<text transform="matrix(1.56 0.002 0 1 681.8 136.59)" font-size="5.6" text-anchor="middle">1</text>
<text transform="matrix(1.56 0.002 0 1 692.7 136.59)" font-size="5.6" text-anchor="middle">23</text>
<text transform="matrix(1.56 0.002 0 1 710.95 136.59)" font-size="5.6" text-anchor="middle">1-2302</text>
<text transform="matrix(1.29 0.002 0 1 739.55 136.74)" font-size="5.5" text-anchor="middle" class="k"><tspan>三</tspan>室两厅</text>
<text transform="matrix(1.56 0.002 0 1 761.85 136.59)" font-size="5.6" text-anchor="middle">3.0</text>
<text transform="matrix(1.56 0.002 0 1 781.1 136.59)" font-size="5.6" text-anchor="middle">111.99</text>
<text transform="matrix(1.56 0.002 0 1 805.2 136.59)" font-size="5.6" text-anchor="middle">86.18</text>
<text transform="matrix(1.56 0.002 0 1 827.75 136.59)" font-size="5.6" text-anchor="middle">25.81</text>
<text transform="matrix(1.56 0.002 0 1 850.1 136.59)" font-size="5.6" text-anchor="middle">7178</text>
<text transform="matrix(1.56 0.002 0 1 936.6 136.59)" font-size="5.6" text-anchor="middle">803864</text>
<text transform="matrix(1.56 0.002 0 1 681.8 143.1)" font-size="5.6" text-anchor="middle">1</text>
<text transform="matrix(1.56 0.002 0 1 692.7 143.1)" font-size="5.6" text-anchor="middle">23</text>
<text transform="matrix(1.56 0.002 0 1 710.95 143.1)" font-size="5.6" text-anchor="middle">1-2303</text>
<text transform="matrix(1.29 0.002 0 1 739.55 143.25)" font-size="5.5" text-anchor="middle" class="k"><tspan>三</tspan>室两厅</text>
<text transform="matrix(1.56 0.002 0 1 761.85 143.1)" font-size="5.6" text-anchor="middle">3.0</text>
<text transform="matrix(1.56 0.002 0 1 781.1 143.1)" font-size="5.6" text-anchor="middle">111.99</text>
<text transform="matrix(1.56 0.002 0 1 805.2 143.1)" font-size="5.6" text-anchor="middle">86.18</text>
<text transform="matrix(1.56 0.002 0 1 827.75 143.1)" font-size="5.6" text-anchor="middle">25.81</text>
<text transform="matrix(1.56 0.002 0 1 850.1 143.1)" font-size="5.6" text-anchor="middle">7178</text>
<text transform="matrix(1.56 0.002 0 1 936.6 143.1)" font-size="5.6" text-anchor="middle">803864</text>
<text transform="matrix(1.56 0.002 0 1 681.8 149.6)" font-size="5.6" text-anchor="middle">1</text>
<text transform="matrix(1.56 0.002 0 1 692.7 149.6)" font-size="5.6" text-anchor="middle">23</text>
<text transform="matrix(1.56 0.002 0 1 710.95 149.6)" font-size="5.6" text-anchor="middle">1-2304</text>
<text transform="matrix(1.29 0.002 0 1 739.55 149.75)" font-size="5.5" text-anchor="middle" class="k"><tspan>三</tspan>室两厅</text>
<text transform="matrix(1.56 0.002 0 1 761.85 149.6)" font-size="5.6" text-anchor="middle">3.0</text>
<text transform="matrix(1.56 0.002 0 1 781.1 149.6)" font-size="5.6" text-anchor="middle">130.19</text>
<text transform="matrix(1.56 0.002 0 1 805.2 149.6)" font-size="5.6" text-anchor="middle">100.19</text>
<text transform="matrix(1.56 0.002 0 1 827.75 149.6)" font-size="5.6" text-anchor="middle">30.00</text>
<text transform="matrix(1.56 0.002 0 1 850.1 149.6)" font-size="5.6" text-anchor="middle">6648</text>
<text transform="matrix(1.56 0.002 0 1 936.6 149.6)" font-size="5.6" text-anchor="middle">865503</text>
<text transform="matrix(1.56 0.002 0 1 681.8 156.11)" font-size="5.6" text-anchor="middle">1</text>
<text transform="matrix(1.56 0.002 0 1 692.7 156.11)" font-size="5.6" text-anchor="middle">23</text>
<text transform="matrix(1.56 0.002 0 1 710.95 156.11)" font-size="5.6" text-anchor="middle">2-2301</text>
<text transform="matrix(1.29 0.002 0 1 739.55 156.26)" font-size="5.5" text-anchor="middle" class="k"><tspan>三</tspan>室两厅</text>
<text transform="matrix(1.56 0.002 0 1 761.85 156.11)" font-size="5.6" text-anchor="middle">3.0</text>
<text transform="matrix(1.56 0.002 0 1 781.1 156.11)" font-size="5.6" text-anchor="middle">130.19</text>
<text transform="matrix(1.56 0.002 0 1 805.2 156.11)" font-size="5.6" text-anchor="middle">100.19</text>
<text transform="matrix(1.56 0.002 0 1 827.75 156.11)" font-size="5.6" text-anchor="middle">30.00</text>
<text transform="matrix(1.56 0.002 0 1 850.1 156.11)" font-size="5.6" text-anchor="middle">6648</text>
<text transform="matrix(1.56 0.002 0 1 936.6 156.11)" font-size="5.6" text-anchor="middle">865503</text>
<text transform="matrix(1.56 0.002 0 1 681.8 162.62)" font-size="5.6" text-anchor="middle">1</text>
<text transform="matrix(1.56 0.002 0 1 692.7 162.62)" font-size="5.6" text-anchor="middle">23</text>
<text transform="matrix(1.56 0.002 0 1 710.95 162.62)" font-size="5.6" text-anchor="middle">2-2302</text>
<text transform="matrix(1.29 0.002 0 1 739.55 162.77)" font-size="5.5" text-anchor="middle" class="k"><tspan>三</tspan>室两厅</text>
<text transform="matrix(1.56 0.002 0 1 761.85 162.62)" font-size="5.6" text-anchor="middle">3.0</text>
<text transform="matrix(1.56 0.002 0 1 781.1 162.62)" font-size="5.6" text-anchor="middle">111.99</text>
<text transform="matrix(1.56 0.002 0 1 805.2 162.62)" font-size="5.6" text-anchor="middle">86.18</text>
<text transform="matrix(1.56 0.002 0 1 827.75 162.62)" font-size="5.6" text-anchor="middle">25.81</text>
<text transform="matrix(1.56 0.002 0 1 850.1 162.62)" font-size="5.6" text-anchor="middle">7178</text>
<text transform="matrix(1.56 0.002 0 1 936.6 162.62)" font-size="5.6" text-anchor="middle">803864</text>
<text transform="matrix(1.56 0.002 0 1 681.8 169.12)" font-size="5.6" text-anchor="middle">1</text>
<text transform="matrix(1.56 0.002 0 1 692.7 169.12)" font-size="5.6" text-anchor="middle">23</text>
<text transform="matrix(1.56 0.002 0 1 710.95 169.12)" font-size="5.6" text-anchor="middle">2-2303</text>
<text transform="matrix(1.29 0.002 0 1 739.55 169.27)" font-size="5.5" text-anchor="middle" class="k"><tspan>三</tspan>室两厅</text>
<text transform="matrix(1.56 0.002 0 1 761.85 169.12)" font-size="5.6" text-anchor="middle">3.0</text>
<text transform="matrix(1.56 0.002 0 1 781.1 169.12)" font-size="5.6" text-anchor="middle">111.99</text>
<text transform="matrix(1.56 0.002 0 1 805.2 169.12)" font-size="5.6" text-anchor="middle">86.18</text>
<text transform="matrix(1.56 0.002 0 1 827.75 169.12)" font-size="5.6" text-anchor="middle">25.81</text>
<text transform="matrix(1.56 0.002 0 1 850.1 169.12)" font-size="5.6" text-anchor="middle">7178</text>
<text transform="matrix(1.56 0.002 0 1 936.6 169.12)" font-size="5.6" text-anchor="middle">803864</text>
<text transform="matrix(1.56 0.002 0 1 681.8 175.63)" font-size="5.6" text-anchor="middle">1</text>
<text transform="matrix(1.56 0.002 0 1 692.7 175.63)" font-size="5.6" text-anchor="middle">23</text>
<text transform="matrix(1.56 0.002 0 1 710.95 175.63)" font-size="5.6" text-anchor="middle">2-2304</text>
<text transform="matrix(1.29 0.002 0 1 739.55 175.78)" font-size="5.5" text-anchor="middle" class="k"><tspan>三</tspan>室两厅</text>
<text transform="matrix(1.56 0.002 0 1 761.85 175.63)" font-size="5.6" text-anchor="middle">3.0</text>
<text transform="matrix(1.56 0.002 0 1 781.1 175.63)" font-size="5.6" text-anchor="middle">125.97</text>
<text transform="matrix(1.56 0.002 0 1 805.2 175.63)" font-size="5.6" text-anchor="middle">96.94</text>
<text transform="matrix(1.56 0.002 0 1 827.75 175.63)" font-size="5.6" text-anchor="middle">29.03</text>
<text transform="matrix(1.56 0.002 0 1 850.1 175.63)" font-size="5.6" text-anchor="middle">6928</text>
<text transform="matrix(1.56 0.002 0 1 936.6 175.63)" font-size="5.6" text-anchor="middle">872720</text>
<text transform="matrix(1.56 0.002 0 1 681.8 182.14)" font-size="5.6" text-anchor="middle">1</text>
<text transform="matrix(1.56 0.002 0 1 692.7 182.14)" font-size="5.6" text-anchor="middle">24</text>
<text transform="matrix(1.56 0.002 0 1 710.95 182.14)" font-size="5.6" text-anchor="middle">1-2401</text>
<text transform="matrix(1.29 0.002 0 1 739.55 182.29)" font-size="5.5" text-anchor="middle" class="k"><tspan>三</tspan>室两厅</text>
<text transform="matrix(1.56 0.002 0 1 761.85 182.14)" font-size="5.6" text-anchor="middle">3.0</text>
<text transform="matrix(1.56 0.002 0 1 781.1 182.14)" font-size="5.6" text-anchor="middle">125.97</text>
<text transform="matrix(1.56 0.002 0 1 805.2 182.14)" font-size="5.6" text-anchor="middle">96.94</text>
<text transform="matrix(1.56 0.002 0 1 827.75 182.14)" font-size="5.6" text-anchor="middle">29.03</text>
<text transform="matrix(1.56 0.002 0 1 850.1 182.14)" font-size="5.6" text-anchor="middle">6928</text>
<text transform="matrix(1.56 0.002 0 1 936.6 182.14)" font-size="5.6" text-anchor="middle">872720</text>
<text transform="matrix(1.56 0.002 0 1 681.8 188.64)" font-size="5.6" text-anchor="middle">1</text>
<text transform="matrix(1.56 0.002 0 1 692.7 188.64)" font-size="5.6" text-anchor="middle">24</text>
<text transform="matrix(1.56 0.002 0 1 710.95 188.64)" font-size="5.6" text-anchor="middle">1-2402</text>
<text transform="matrix(1.29 0.002 0 1 739.55 188.79)" font-size="5.5" text-anchor="middle" class="k"><tspan>三</tspan>室两厅</text>
<text transform="matrix(1.56 0.002 0 1 761.85 188.64)" font-size="5.6" text-anchor="middle">3.0</text>
<text transform="matrix(1.56 0.002 0 1 781.1 188.64)" font-size="5.6" text-anchor="middle">111.99</text>
<text transform="matrix(1.56 0.002 0 1 805.2 188.64)" font-size="5.6" text-anchor="middle">86.18</text>
<text transform="matrix(1.56 0.002 0 1 827.75 188.64)" font-size="5.6" text-anchor="middle">25.81</text>
<text transform="matrix(1.56 0.002 0 1 850.1 188.64)" font-size="5.6" text-anchor="middle">7178</text>
<text transform="matrix(1.56 0.002 0 1 936.6 188.64)" font-size="5.6" text-anchor="middle">803864</text>
<text transform="matrix(1.56 0.002 0 1 681.8 195.15)" font-size="5.6" text-anchor="middle">1</text>
<text transform="matrix(1.56 0.002 0 1 692.7 195.15)" font-size="5.6" text-anchor="middle">24</text>
<text transform="matrix(1.56 0.002 0 1 710.95 195.15)" font-size="5.6" text-anchor="middle">1-2403</text>
<text transform="matrix(1.29 0.002 0 1 739.55 195.3)" font-size="5.5" text-anchor="middle" class="k"><tspan>三</tspan>室两厅</text>
<text transform="matrix(1.56 0.002 0 1 761.85 195.15)" font-size="5.6" text-anchor="middle">3.0</text>
<text transform="matrix(1.56 0.002 0 1 781.1 195.15)" font-size="5.6" text-anchor="middle">111.99</text>
<text transform="matrix(1.56 0.002 0 1 805.2 195.15)" font-size="5.6" text-anchor="middle">86.18</text>
<text transform="matrix(1.56 0.002 0 1 827.75 195.15)" font-size="5.6" text-anchor="middle">25.81</text>
<text transform="matrix(1.56 0.002 0 1 850.1 195.15)" font-size="5.6" text-anchor="middle">7178</text>
<text transform="matrix(1.56 0.002 0 1 936.6 195.15)" font-size="5.6" text-anchor="middle">803864</text>
<text transform="matrix(1.56 0.002 0 1 681.8 201.66)" font-size="5.6" text-anchor="middle">1</text>
<text transform="matrix(1.56 0.002 0 1 692.7 201.66)" font-size="5.6" text-anchor="middle">24</text>
<text transform="matrix(1.56 0.002 0 1 710.95 201.66)" font-size="5.6" text-anchor="middle">1-2404</text>
<text transform="matrix(1.29 0.002 0 1 739.55 201.81)" font-size="5.5" text-anchor="middle" class="k"><tspan>三</tspan>室两厅</text>
<text transform="matrix(1.56 0.002 0 1 761.85 201.66)" font-size="5.6" text-anchor="middle">3.0</text>
<text transform="matrix(1.56 0.002 0 1 781.1 201.66)" font-size="5.6" text-anchor="middle">130.19</text>
<text transform="matrix(1.56 0.002 0 1 805.2 201.66)" font-size="5.6" text-anchor="middle">100.19</text>
<text transform="matrix(1.56 0.002 0 1 827.75 201.66)" font-size="5.6" text-anchor="middle">30.00</text>
<text transform="matrix(1.56 0.002 0 1 850.1 201.66)" font-size="5.6" text-anchor="middle">6648</text>
<text transform="matrix(1.56 0.002 0 1 936.6 201.66)" font-size="5.6" text-anchor="middle">865503</text>
<text transform="matrix(1.56 0.002 0 1 681.8 208.17)" font-size="5.6" text-anchor="middle">1</text>
<text transform="matrix(1.56 0.002 0 1 692.7 208.17)" font-size="5.6" text-anchor="middle">24</text>
<text transform="matrix(1.56 0.002 0 1 710.95 208.17)" font-size="5.6" text-anchor="middle">2-2401</text>
<text transform="matrix(1.29 0.002 0 1 739.55 208.32)" font-size="5.5" text-anchor="middle" class="k"><tspan>三</tspan>室两厅</text>
<text transform="matrix(1.56 0.002 0 1 761.85 208.17)" font-size="5.6" text-anchor="middle">3.0</text>
<text transform="matrix(1.56 0.002 0 1 781.1 208.17)" font-size="5.6" text-anchor="middle">130.19</text>
<text transform="matrix(1.56 0.002 0 1 805.2 208.17)" font-size="5.6" text-anchor="middle">100.19</text>
<text transform="matrix(1.56 0.002 0 1 827.75 208.17)" font-size="5.6" text-anchor="middle">30.00</text>
<text transform="matrix(1.56 0.002 0 1 850.1 208.17)" font-size="5.6" text-anchor="middle">6648</text>
<text transform="matrix(1.56 0.002 0 1 936.6 208.17)" font-size="5.6" text-anchor="middle">865503</text>
<text transform="matrix(1.56 0.002 0 1 681.8 214.67)" font-size="5.6" text-anchor="middle">1</text>
<text transform="matrix(1.56 0.002 0 1 692.7 214.67)" font-size="5.6" text-anchor="middle">24</text>
<text transform="matrix(1.56 0.002 0 1 710.95 214.67)" font-size="5.6" text-anchor="middle">2-2402</text>
<text transform="matrix(1.29 0.002 0 1 739.55 214.82)" font-size="5.5" text-anchor="middle" class="k"><tspan>三</tspan>室两厅</text>
<text transform="matrix(1.56 0.002 0 1 761.85 214.67)" font-size="5.6" text-anchor="middle">3.0</text>
<text transform="matrix(1.56 0.002 0 1 781.1 214.67)" font-size="5.6" text-anchor="middle">111.99</text>
<text transform="matrix(1.56 0.002 0 1 805.2 214.67)" font-size="5.6" text-anchor="middle">86.18</text>
<text transform="matrix(1.56 0.002 0 1 827.75 214.67)" font-size="5.6" text-anchor="middle">25.81</text>
<text transform="matrix(1.56 0.002 0 1 850.1 214.67)" font-size="5.6" text-anchor="middle">7178</text>
<text transform="matrix(1.56 0.002 0 1 936.6 214.67)" font-size="5.6" text-anchor="middle">803864</text>
<text transform="matrix(1.56 0.002 0 1 681.8 221.18)" font-size="5.6" text-anchor="middle">1</text>
<text transform="matrix(1.56 0.002 0 1 692.7 221.18)" font-size="5.6" text-anchor="middle">24</text>
<text transform="matrix(1.56 0.002 0 1 710.95 221.18)" font-size="5.6" text-anchor="middle">2-2403</text>
<text transform="matrix(1.29 0.002 0 1 739.55 221.33)" font-size="5.5" text-anchor="middle" class="k"><tspan>三</tspan>室两厅</text>
<text transform="matrix(1.56 0.002 0 1 761.85 221.18)" font-size="5.6" text-anchor="middle">3.0</text>
<text transform="matrix(1.56 0.002 0 1 781.1 221.18)" font-size="5.6" text-anchor="middle">111.99</text>
<text transform="matrix(1.56 0.002 0 1 805.2 221.18)" font-size="5.6" text-anchor="middle">86.18</text>
<text transform="matrix(1.56 0.002 0 1 827.75 221.18)" font-size="5.6" text-anchor="middle">25.81</text>
<text transform="matrix(1.56 0.002 0 1 850.1 221.18)" font-size="5.6" text-anchor="middle">7178</text>
<text transform="matrix(1.56 0.002 0 1 936.6 221.18)" font-size="5.6" text-anchor="middle">803864</text>
<text transform="matrix(1.56 0.002 0 1 681.8 227.69)" font-size="5.6" text-anchor="middle">1</text>
<text transform="matrix(1.56 0.002 0 1 692.7 227.69)" font-size="5.6" text-anchor="middle">24</text>
<text transform="matrix(1.56 0.002 0 1 710.95 227.69)" font-size="5.6" text-anchor="middle">2-2404</text>
<text transform="matrix(1.29 0.002 0 1 739.55 227.84)" font-size="5.5" text-anchor="middle" class="k"><tspan>三</tspan>室两厅</text>
<text transform="matrix(1.56 0.002 0 1 761.85 227.69)" font-size="5.6" text-anchor="middle">3.0</text>
<text transform="matrix(1.56 0.002 0 1 781.1 227.69)" font-size="5.6" text-anchor="middle">125.97</text>
<text transform="matrix(1.56 0.002 0 1 805.2 227.69)" font-size="5.6" text-anchor="middle">96.94</text>
<text transform="matrix(1.56 0.002 0 1 827.75 227.69)" font-size="5.6" text-anchor="middle">29.03</text>
<text transform="matrix(1.56 0.002 0 1 850.1 227.69)" font-size="5.6" text-anchor="middle">6928</text>
<text transform="matrix(1.56 0.002 0 1 936.6 227.69)" font-size="5.6" text-anchor="middle">872720</text>
<text transform="matrix(1.56 0.002 0 1 681.8 234.19)" font-size="5.6" text-anchor="middle">1</text>
<text transform="matrix(1.56 0.002 0 1 692.7 234.19)" font-size="5.6" text-anchor="middle">25</text>
<text transform="matrix(1.56 0.002 0 1 710.95 234.19)" font-size="5.6" text-anchor="middle">1-2501</text>
<text transform="matrix(1.29 0.002 0 1 739.55 234.34)" font-size="5.5" text-anchor="middle" class="k"><tspan>三</tspan>室两厅</text>
<text transform="matrix(1.56 0.002 0 1 761.85 234.19)" font-size="5.6" text-anchor="middle">3.0</text>
<text transform="matrix(1.56 0.002 0 1 781.1 234.19)" font-size="5.6" text-anchor="middle">125.97</text>
<text transform="matrix(1.56 0.002 0 1 805.2 234.19)" font-size="5.6" text-anchor="middle">96.94</text>
<text transform="matrix(1.56 0.002 0 1 827.75 234.19)" font-size="5.6" text-anchor="middle">29.03</text>
<text transform="matrix(1.56 0.002 0 1 850.1 234.19)" font-size="5.6" text-anchor="middle">6938</text>
<text transform="matrix(1.56 0.002 0 1 936.6 234.19)" font-size="5.6" text-anchor="middle">873980</text>
<text transform="matrix(1.56 0.002 0 1 681.8 240.7)" font-size="5.6" text-anchor="middle">1</text>
<text transform="matrix(1.56 0.002 0 1 692.7 240.7)" font-size="5.6" text-anchor="middle">25</text>
<text transform="matrix(1.56 0.002 0 1 710.95 240.7)" font-size="5.6" text-anchor="middle">1-2502</text>
<text transform="matrix(1.29 0.002 0 1 739.55 240.85)" font-size="5.5" text-anchor="middle" class="k"><tspan>三</tspan>室两厅</text>
<text transform="matrix(1.56 0.002 0 1 761.85 240.7)" font-size="5.6" text-anchor="middle">3.0</text>
<text transform="matrix(1.56 0.002 0 1 781.1 240.7)" font-size="5.6" text-anchor="middle">111.99</text>
<text transform="matrix(1.56 0.002 0 1 805.2 240.7)" font-size="5.6" text-anchor="middle">86.18</text>
<text transform="matrix(1.56 0.002 0 1 827.75 240.7)" font-size="5.6" text-anchor="middle">25.81</text>
<text transform="matrix(1.56 0.002 0 1 850.1 240.7)" font-size="5.6" text-anchor="middle">7188</text>
<text transform="matrix(1.56 0.002 0 1 936.6 240.7)" font-size="5.6" text-anchor="middle">804984</text>
<text transform="matrix(1.56 0.002 0 1 681.8 247.21)" font-size="5.6" text-anchor="middle">1</text>
<text transform="matrix(1.56 0.002 0 1 692.7 247.21)" font-size="5.6" text-anchor="middle">25</text>
<text transform="matrix(1.56 0.002 0 1 710.95 247.21)" font-size="5.6" text-anchor="middle">1-2503</text>
<text transform="matrix(1.29 0.002 0 1 739.55 247.36)" font-size="5.5" text-anchor="middle" class="k"><tspan>三</tspan>室两厅</text>
<text transform="matrix(1.56 0.002 0 1 761.85 247.21)" font-size="5.6" text-anchor="middle">3.0</text>
<text transform="matrix(1.56 0.002 0 1 781.1 247.21)" font-size="5.6" text-anchor="middle">111.99</text>
<text transform="matrix(1.56 0.002 0 1 805.2 247.21)" font-size="5.6" text-anchor="middle">86.18</text>
<text transform="matrix(1.56 0.002 0 1 827.75 247.21)" font-size="5.6" text-anchor="middle">25.81</text>
<text transform="matrix(1.56 0.002 0 1 850.1 247.21)" font-size="5.6" text-anchor="middle">7188</text>
<text transform="matrix(1.56 0.002 0 1 936.6 247.21)" font-size="5.6" text-anchor="middle">804984</text>
<text transform="matrix(1.56 0.002 0 1 681.8 253.72)" font-size="5.6" text-anchor="middle">1</text>
<text transform="matrix(1.56 0.002 0 1 692.7 253.72)" font-size="5.6" text-anchor="middle">25</text>
<text transform="matrix(1.56 0.002 0 1 710.95 253.72)" font-size="5.6" text-anchor="middle">1-2504</text>
<text transform="matrix(1.29 0.002 0 1 739.55 253.87)" font-size="5.5" text-anchor="middle" class="k"><tspan>三</tspan>室两厅</text>
<text transform="matrix(1.56 0.002 0 1 761.85 253.72)" font-size="5.6" text-anchor="middle">3.0</text>
<text transform="matrix(1.56 0.002 0 1 781.1 253.72)" font-size="5.6" text-anchor="middle">130.19</text>
<text transform="matrix(1.56 0.002 0 1 805.2 253.72)" font-size="5.6" text-anchor="middle">100.19</text>
<text transform="matrix(1.56 0.002 0 1 827.75 253.72)" font-size="5.6" text-anchor="middle">30.00</text>
<text transform="matrix(1.56 0.002 0 1 850.1 253.72)" font-size="5.6" text-anchor="middle">6658</text>
<text transform="matrix(1.56 0.002 0 1 936.6 253.72)" font-size="5.6" text-anchor="middle">866805</text>
<text transform="matrix(1.56 0.002 0 1 681.8 260.22)" font-size="5.6" text-anchor="middle">1</text>
<text transform="matrix(1.56 0.002 0 1 692.7 260.22)" font-size="5.6" text-anchor="middle">25</text>
<text transform="matrix(1.56 0.002 0 1 710.95 260.22)" font-size="5.6" text-anchor="middle">2-2501</text>
<text transform="matrix(1.29 0.002 0 1 739.55 260.37)" font-size="5.5" text-anchor="middle" class="k"><tspan>三</tspan>室两厅</text>
<text transform="matrix(1.56 0.002 0 1 761.85 260.22)" font-size="5.6" text-anchor="middle">3.0</text>
<text transform="matrix(1.56 0.002 0 1 781.1 260.22)" font-size="5.6" text-anchor="middle">130.19</text>
<text transform="matrix(1.56 0.002 0 1 805.2 260.22)" font-size="5.6" text-anchor="middle">100.19</text>
<text transform="matrix(1.56 0.002 0 1 827.75 260.22)" font-size="5.6" text-anchor="middle">30.00</text>
<text transform="matrix(1.56 0.002 0 1 850.1 260.22)" font-size="5.6" text-anchor="middle">6658</text>
<text transform="matrix(1.56 0.002 0 1 936.6 260.22)" font-size="5.6" text-anchor="middle">866805</text>
<text transform="matrix(1.56 0.002 0 1 681.8 266.73)" font-size="5.6" text-anchor="middle">1</text>
<text transform="matrix(1.56 0.002 0 1 692.7 266.73)" font-size="5.6" text-anchor="middle">25</text>
<text transform="matrix(1.56 0.002 0 1 710.95 266.73)" font-size="5.6" text-anchor="middle">2-2502</text>
<text transform="matrix(1.29 0.002 0 1 739.55 266.88)" font-size="5.5" text-anchor="middle" class="k"><tspan>三</tspan>室两厅</text>
<text transform="matrix(1.56 0.002 0 1 761.85 266.73)" font-size="5.6" text-anchor="middle">3.0</text>
<text transform="matrix(1.56 0.002 0 1 781.1 266.73)" font-size="5.6" text-anchor="middle">111.99</text>
<text transform="matrix(1.56 0.002 0 1 805.2 266.73)" font-size="5.6" text-anchor="middle">86.18</text>
<text transform="matrix(1.56 0.002 0 1 827.75 266.73)" font-size="5.6" text-anchor="middle">25.81</text>
<text transform="matrix(1.56 0.002 0 1 850.1 266.73)" font-size="5.6" text-anchor="middle">7188</text>
<text transform="matrix(1.56 0.002 0 1 936.6 266.73)" font-size="5.6" text-anchor="middle">804984</text>
<text transform="matrix(1.56 0.002 0 1 681.8 273.24)" font-size="5.6" text-anchor="middle">1</text>
<text transform="matrix(1.56 0.002 0 1 692.7 273.24)" font-size="5.6" text-anchor="middle">25</text>
<text transform="matrix(1.56 0.002 0 1 710.95 273.24)" font-size="5.6" text-anchor="middle">2-2503</text>
<text transform="matrix(1.29 0.002 0 1 739.55 273.39)" font-size="5.5" text-anchor="middle" class="k"><tspan>三</tspan>室两厅</text>
<text transform="matrix(1.56 0.002 0 1 761.85 273.24)" font-size="5.6" text-anchor="middle">3.0</text>
<text transform="matrix(1.56 0.002 0 1 781.1 273.24)" font-size="5.6" text-anchor="middle">111.99</text>
<text transform="matrix(1.56 0.002 0 1 805.2 273.24)" font-size="5.6" text-anchor="middle">86.18</text>
<text transform="matrix(1.56 0.002 0 1 827.75 273.24)" font-size="5.6" text-anchor="middle">25.81</text>
<text transform="matrix(1.56 0.002 0 1 850.1 273.24)" font-size="5.6" text-anchor="middle">7188</text>
<text transform="matrix(1.56 0.002 0 1 936.6 273.24)" font-size="5.6" text-anchor="middle">804984</text>
<text transform="matrix(1.56 0.002 0 1 681.8 279.74)" font-size="5.6" text-anchor="middle">1</text>
<text transform="matrix(1.56 0.002 0 1 692.7 279.74)" font-size="5.6" text-anchor="middle">25</text>
<text transform="matrix(1.56 0.002 0 1 710.95 279.74)" font-size="5.6" text-anchor="middle">2-2504</text>
<text transform="matrix(1.29 0.002 0 1 739.55 279.89)" font-size="5.5" text-anchor="middle" class="k"><tspan>三</tspan>室两厅</text>
<text transform="matrix(1.56 0.002 0 1 761.85 279.74)" font-size="5.6" text-anchor="middle">3.0</text>
<text transform="matrix(1.56 0.002 0 1 781.1 279.74)" font-size="5.6" text-anchor="middle">125.97</text>
<text transform="matrix(1.56 0.002 0 1 805.2 279.74)" font-size="5.6" text-anchor="middle">96.94</text>
<text transform="matrix(1.56 0.002 0 1 827.75 279.74)" font-size="5.6" text-anchor="middle">29.03</text>
<text transform="matrix(1.56 0.002 0 1 850.1 279.74)" font-size="5.6" text-anchor="middle">6938</text>
<text transform="matrix(1.56 0.002 0 1 936.6 279.74)" font-size="5.6" text-anchor="middle">873980</text>
<text transform="matrix(1.56 0.002 0 1 681.8 286.25)" font-size="5.6" text-anchor="middle">1</text>
<text transform="matrix(1.56 0.002 0 1 692.7 286.25)" font-size="5.6" text-anchor="middle">26</text>
<text transform="matrix(1.56 0.002 0 1 710.95 286.25)" font-size="5.6" text-anchor="middle">1-2601</text>
<text transform="matrix(1.29 0.002 0 1 739.55 286.4)" font-size="5.5" text-anchor="middle" class="k"><tspan>三</tspan>室两厅</text>
<text transform="matrix(1.56 0.002 0 1 761.85 286.25)" font-size="5.6" text-anchor="middle">3.0</text>
<text transform="matrix(1.56 0.002 0 1 781.1 286.25)" font-size="5.6" text-anchor="middle">125.97</text>
<text transform="matrix(1.56 0.002 0 1 805.2 286.25)" font-size="5.6" text-anchor="middle">96.94</text>
<text transform="matrix(1.56 0.002 0 1 827.75 286.25)" font-size="5.6" text-anchor="middle">29.03</text>
<text transform="matrix(1.56 0.002 0 1 850.1 286.25)" font-size="5.6" text-anchor="middle">6948</text>
<text transform="matrix(1.56 0.002 0 1 936.6 286.25)" font-size="5.6" text-anchor="middle">875240</text>
<text transform="matrix(1.56 0.002 0 1 681.8 292.76)" font-size="5.6" text-anchor="middle">1</text>
<text transform="matrix(1.56 0.002 0 1 692.7 292.76)" font-size="5.6" text-anchor="middle">26</text>
<text transform="matrix(1.56 0.002 0 1 710.95 292.76)" font-size="5.6" text-anchor="middle">1-2602</text>
<text transform="matrix(1.29 0.002 0 1 739.55 292.91)" font-size="5.5" text-anchor="middle" class="k"><tspan>三</tspan>室两厅</text>
<text transform="matrix(1.56 0.002 0 1 761.85 292.76)" font-size="5.6" text-anchor="middle">3.0</text>
<text transform="matrix(1.56 0.002 0 1 781.1 292.76)" font-size="5.6" text-anchor="middle">111.99</text>
<text transform="matrix(1.56 0.002 0 1 805.2 292.76)" font-size="5.6" text-anchor="middle">86.18</text>
<text transform="matrix(1.56 0.002 0 1 827.75 292.76)" font-size="5.6" text-anchor="middle">25.81</text>
<text transform="matrix(1.56 0.002 0 1 850.1 292.76)" font-size="5.6" text-anchor="middle">7198</text>
<text transform="matrix(1.56 0.002 0 1 936.6 292.76)" font-size="5.6" text-anchor="middle">806104</text>
<text transform="matrix(1.56 0.002 0 1 681.8 299.26)" font-size="5.6" text-anchor="middle">1</text>
<text transform="matrix(1.56 0.002 0 1 692.7 299.26)" font-size="5.6" text-anchor="middle">26</text>
<text transform="matrix(1.56 0.002 0 1 710.95 299.26)" font-size="5.6" text-anchor="middle">1-2603</text>
<text transform="matrix(1.29 0.002 0 1 739.55 299.41)" font-size="5.5" text-anchor="middle" class="k"><tspan>三</tspan>室两厅</text>
<text transform="matrix(1.56 0.002 0 1 761.85 299.26)" font-size="5.6" text-anchor="middle">3.0</text>
<text transform="matrix(1.56 0.002 0 1 781.1 299.26)" font-size="5.6" text-anchor="middle">111.99</text>
<text transform="matrix(1.56 0.002 0 1 805.2 299.26)" font-size="5.6" text-anchor="middle">86.18</text>
<text transform="matrix(1.56 0.002 0 1 827.75 299.26)" font-size="5.6" text-anchor="middle">25.81</text>
<text transform="matrix(1.56 0.002 0 1 850.1 299.26)" font-size="5.6" text-anchor="middle">7198</text>
<text transform="matrix(1.56 0.002 0 1 936.6 299.26)" font-size="5.6" text-anchor="middle">806104</text>
<text transform="matrix(1.56 0.002 0 1 681.8 305.77)" font-size="5.6" text-anchor="middle">1</text>
<text transform="matrix(1.56 0.002 0 1 692.7 305.77)" font-size="5.6" text-anchor="middle">26</text>
<text transform="matrix(1.56 0.002 0 1 710.95 305.77)" font-size="5.6" text-anchor="middle">1-2604</text>
<text transform="matrix(1.29 0.002 0 1 739.55 305.92)" font-size="5.5" text-anchor="middle" class="k"><tspan>三</tspan>室两厅</text>
<text transform="matrix(1.56 0.002 0 1 761.85 305.77)" font-size="5.6" text-anchor="middle">3.0</text>
<text transform="matrix(1.56 0.002 0 1 781.1 305.77)" font-size="5.6" text-anchor="middle">130.19</text>
<text transform="matrix(1.56 0.002 0 1 805.2 305.77)" font-size="5.6" text-anchor="middle">100.19</text>
<text transform="matrix(1.56 0.002 0 1 827.75 305.77)" font-size="5.6" text-anchor="middle">30.00</text>
<text transform="matrix(1.56 0.002 0 1 850.1 305.77)" font-size="5.6" text-anchor="middle">6668</text>
<text transform="matrix(1.56 0.002 0 1 936.6 305.77)" font-size="5.6" text-anchor="middle">868107</text>
<text transform="matrix(1.56 0.002 0 1 681.8 312.28)" font-size="5.6" text-anchor="middle">1</text>
<text transform="matrix(1.56 0.002 0 1 692.7 312.28)" font-size="5.6" text-anchor="middle">26</text>
<text transform="matrix(1.56 0.002 0 1 710.95 312.28)" font-size="5.6" text-anchor="middle">2-2601</text>
<text transform="matrix(1.29 0.002 0 1 739.55 312.43)" font-size="5.5" text-anchor="middle" class="k"><tspan>三</tspan>室两厅</text>
<text transform="matrix(1.56 0.002 0 1 761.85 312.28)" font-size="5.6" text-anchor="middle">3.0</text>
<text transform="matrix(1.56 0.002 0 1 781.1 312.28)" font-size="5.6" text-anchor="middle">130.19</text>
<text transform="matrix(1.56 0.002 0 1 805.2 312.28)" font-size="5.6" text-anchor="middle">100.19</text>
<text transform="matrix(1.56 0.002 0 1 827.75 312.28)" font-size="5.6" text-anchor="middle">30.00</text>
<text transform="matrix(1.56 0.002 0 1 850.1 312.28)" font-size="5.6" text-anchor="middle">6668</text>
<text transform="matrix(1.56 0.002 0 1 936.6 312.28)" font-size="5.6" text-anchor="middle">868107</text>
<text transform="matrix(1.56 0.002 0 1 681.8 318.79)" font-size="5.6" text-anchor="middle">1</text>
<text transform="matrix(1.56 0.002 0 1 692.7 318.79)" font-size="5.6" text-anchor="middle">26</text>
<text transform="matrix(1.56 0.002 0 1 710.95 318.79)" font-size="5.6" text-anchor="middle">2-2602</text>
<text transform="matrix(1.29 0.002 0 1 739.55 318.94)" font-size="5.5" text-anchor="middle" class="k"><tspan>三</tspan>室两厅</text>
<text transform="matrix(1.56 0.002 0 1 761.85 318.79)" font-size="5.6" text-anchor="middle">3.0</text>
<text transform="matrix(1.56 0.002 0 1 781.1 318.79)" font-size="5.6" text-anchor="middle">111.99</text>
<text transform="matrix(1.56 0.002 0 1 805.2 318.79)" font-size="5.6" text-anchor="middle">86.18</text>
<text transform="matrix(1.56 0.002 0 1 827.75 318.79)" font-size="5.6" text-anchor="middle">25.81</text>
<text transform="matrix(1.56 0.002 0 1 850.1 318.79)" font-size="5.6" text-anchor="middle">7198</text>
<text transform="matrix(1.56 0.002 0 1 936.6 318.79)" font-size="5.6" text-anchor="middle">806104</text>
<text transform="matrix(1.56 0.002 0 1 681.8 325.29)" font-size="5.6" text-anchor="middle">1</text>
<text transform="matrix(1.56 0.002 0 1 692.7 325.29)" font-size="5.6" text-anchor="middle">26</text>
<text transform="matrix(1.56 0.002 0 1 710.95 325.29)" font-size="5.6" text-anchor="middle">2-2603</text>
<text transform="matrix(1.29 0.002 0 1 739.55 325.44)" font-size="5.5" text-anchor="middle" class="k"><tspan>三</tspan>室两厅</text>
<text transform="matrix(1.56 0.002 0 1 761.85 325.29)" font-size="5.6" text-anchor="middle">3.0</text>
<text transform="matrix(1.56 0.002 0 1 781.1 325.29)" font-size="5.6" text-anchor="middle">111.99</text>
<text transform="matrix(1.56 0.002 0 1 805.2 325.29)" font-size="5.6" text-anchor="middle">86.18</text>
<text transform="matrix(1.56 0.002 0 1 827.75 325.29)" font-size="5.6" text-anchor="middle">25.81</text>
<text transform="matrix(1.56 0.002 0 1 850.1 325.29)" font-size="5.6" text-anchor="middle">7198</text>
<text transform="matrix(1.56 0.002 0 1 936.6 325.29)" font-size="5.6" text-anchor="middle">806104</text>
<text transform="matrix(1.56 0.002 0 1 681.8 331.8)" font-size="5.6" text-anchor="middle">1</text>
<text transform="matrix(1.56 0.002 0 1 692.7 331.8)" font-size="5.6" text-anchor="middle">26</text>
<text transform="matrix(1.56 0.002 0 1 710.95 331.8)" font-size="5.6" text-anchor="middle">2-2604</text>
<text transform="matrix(1.29 0.002 0 1 739.55 331.95)" font-size="5.5" text-anchor="middle" class="k"><tspan>三</tspan>室两厅</text>
<text transform="matrix(1.56 0.002 0 1 761.85 331.8)" font-size="5.6" text-anchor="middle">3.0</text>
<text transform="matrix(1.56 0.002 0 1 781.1 331.8)" font-size="5.6" text-anchor="middle">125.97</text>
<text transform="matrix(1.56 0.002 0 1 805.2 331.8)" font-size="5.6" text-anchor="middle">96.94</text>
<text transform="matrix(1.56 0.002 0 1 827.75 331.8)" font-size="5.6" text-anchor="middle">29.03</text>
<text transform="matrix(1.56 0.002 0 1 850.1 331.8)" font-size="5.6" text-anchor="middle">6948</text>
<text transform="matrix(1.56 0.002 0 1 936.6 331.8)" font-size="5.6" text-anchor="middle">875240</text>
<text transform="matrix(1.56 0.002 0 1 681.8 338.31)" font-size="5.6" text-anchor="middle">1</text>
<text transform="matrix(1.56 0.002 0 1 692.7 338.31)" font-size="5.6" text-anchor="middle">27</text>
<text transform="matrix(1.56 0.002 0 1 710.95 338.31)" font-size="5.6" text-anchor="middle">1-2701</text>
<text transform="matrix(1.29 0.002 0 1 739.55 338.46)" font-size="5.5" text-anchor="middle" class="k"><tspan>三</tspan>室两厅</text>
<text transform="matrix(1.56 0.002 0 1 761.85 338.31)" font-size="5.6" text-anchor="middle">3.0</text>
<text transform="matrix(1.56 0.002 0 1 781.1 338.31)" font-size="5.6" text-anchor="middle">125.97</text>
<text transform="matrix(1.56 0.002 0 1 805.2 338.31)" font-size="5.6" text-anchor="middle">96.94</text>
<text transform="matrix(1.56 0.002 0 1 827.75 338.31)" font-size="5.6" text-anchor="middle">29.03</text>
<text transform="matrix(1.56 0.002 0 1 850.1 338.31)" font-size="5.6" text-anchor="middle">6958</text>
<text transform="matrix(1.56 0.002 0 1 936.6 338.31)" font-size="5.6" text-anchor="middle">876499</text>
<text transform="matrix(1.56 0.002 0 1 681.8 344.81)" font-size="5.6" text-anchor="middle">1</text>
<text transform="matrix(1.56 0.002 0 1 692.7 344.81)" font-size="5.6" text-anchor="middle">27</text>
<text transform="matrix(1.56 0.002 0 1 710.95 344.81)" font-size="5.6" text-anchor="middle">1-2702</text>
<text transform="matrix(1.29 0.002 0 1 739.55 344.96)" font-size="5.5" text-anchor="middle" class="k"><tspan>三</tspan>室两厅</text>
<text transform="matrix(1.56 0.002 0 1 761.85 344.81)" font-size="5.6" text-anchor="middle">3.0</text>
<text transform="matrix(1.56 0.002 0 1 781.1 344.81)" font-size="5.6" text-anchor="middle">111.99</text>
<text transform="matrix(1.56 0.002 0 1 805.2 344.81)" font-size="5.6" text-anchor="middle">86.18</text>
<text transform="matrix(1.56 0.002 0 1 827.75 344.81)" font-size="5.6" text-anchor="middle">25.81</text>
<text transform="matrix(1.56 0.002 0 1 850.1 344.81)" font-size="5.6" text-anchor="middle">7208</text>
<text transform="matrix(1.56 0.002 0 1 936.6 344.81)" font-size="5.6" text-anchor="middle">807224</text>
<text transform="matrix(1.56 0.002 0 1 681.8 351.32)" font-size="5.6" text-anchor="middle">1</text>
<text transform="matrix(1.56 0.002 0 1 692.7 351.32)" font-size="5.6" text-anchor="middle">27</text>
<text transform="matrix(1.56 0.002 0 1 710.95 351.32)" font-size="5.6" text-anchor="middle">1-2703</text>
<text transform="matrix(1.29 0.002 0 1 739.55 351.47)" font-size="5.5" text-anchor="middle" class="k"><tspan>三</tspan>室两厅</text>
<text transform="matrix(1.56 0.002 0 1 761.85 351.32)" font-size="5.6" text-anchor="middle">3.0</text>
<text transform="matrix(1.56 0.002 0 1 781.1 351.32)" font-size="5.6" text-anchor="middle">111.99</text>
<text transform="matrix(1.56 0.002 0 1 805.2 351.32)" font-size="5.6" text-anchor="middle">86.18</text>
<text transform="matrix(1.56 0.002 0 1 827.75 351.32)" font-size="5.6" text-anchor="middle">25.81</text>
<text transform="matrix(1.56 0.002 0 1 850.1 351.32)" font-size="5.6" text-anchor="middle">7208</text>
<text transform="matrix(1.56 0.002 0 1 936.6 351.32)" font-size="5.6" text-anchor="middle">807224</text>
<text transform="matrix(1.56 0.002 0 1 681.8 357.83)" font-size="5.6" text-anchor="middle">1</text>
<text transform="matrix(1.56 0.002 0 1 692.7 357.83)" font-size="5.6" text-anchor="middle">27</text>
<text transform="matrix(1.56 0.002 0 1 710.95 357.83)" font-size="5.6" text-anchor="middle">1-2704</text>
<text transform="matrix(1.29 0.002 0 1 739.55 357.98)" font-size="5.5" text-anchor="middle" class="k"><tspan>三</tspan>室两厅</text>
<text transform="matrix(1.56 0.002 0 1 761.85 357.83)" font-size="5.6" text-anchor="middle">3.0</text>
<text transform="matrix(1.56 0.002 0 1 781.1 357.83)" font-size="5.6" text-anchor="middle">130.19</text>
<text transform="matrix(1.56 0.002 0 1 805.2 357.83)" font-size="5.6" text-anchor="middle">100.19</text>
<text transform="matrix(1.56 0.002 0 1 827.75 357.83)" font-size="5.6" text-anchor="middle">30.00</text>
<text transform="matrix(1.56 0.002 0 1 850.1 357.83)" font-size="5.6" text-anchor="middle">6678</text>
<text transform="matrix(1.56 0.002 0 1 936.6 357.83)" font-size="5.6" text-anchor="middle">869409</text>
<text transform="matrix(1.56 0.002 0 1 681.8 364.34)" font-size="5.6" text-anchor="middle">1</text>
<text transform="matrix(1.56 0.002 0 1 692.7 364.34)" font-size="5.6" text-anchor="middle">27</text>
<text transform="matrix(1.56 0.002 0 1 710.95 364.34)" font-size="5.6" text-anchor="middle">2-2701</text>
<text transform="matrix(1.29 0.002 0 1 739.55 364.49)" font-size="5.5" text-anchor="middle" class="k"><tspan>三</tspan>室两厅</text>
<text transform="matrix(1.56 0.002 0 1 761.85 364.34)" font-size="5.6" text-anchor="middle">3.0</text>
<text transform="matrix(1.56 0.002 0 1 781.1 364.34)" font-size="5.6" text-anchor="middle">130.19</text>
<text transform="matrix(1.56 0.002 0 1 805.2 364.34)" font-size="5.6" text-anchor="middle">100.19</text>
<text transform="matrix(1.56 0.002 0 1 827.75 364.34)" font-size="5.6" text-anchor="middle">30.00</text>
<text transform="matrix(1.56 0.002 0 1 850.1 364.34)" font-size="5.6" text-anchor="middle">6678</text>
<text transform="matrix(1.56 0.002 0 1 936.6 364.34)" font-size="5.6" text-anchor="middle">869409</text>
<text transform="matrix(1.56 0.002 0 1 681.8 370.84)" font-size="5.6" text-anchor="middle">1</text>
<text transform="matrix(1.56 0.002 0 1 692.7 370.84)" font-size="5.6" text-anchor="middle">27</text>
<text transform="matrix(1.56 0.002 0 1 710.95 370.84)" font-size="5.6" text-anchor="middle">2-2702</text>
<text transform="matrix(1.29 0.002 0 1 739.55 370.99)" font-size="5.5" text-anchor="middle" class="k"><tspan>三</tspan>室两厅</text>
<text transform="matrix(1.56 0.002 0 1 761.85 370.84)" font-size="5.6" text-anchor="middle">3.0</text>
<text transform="matrix(1.56 0.002 0 1 781.1 370.84)" font-size="5.6" text-anchor="middle">111.99</text>
<text transform="matrix(1.56 0.002 0 1 805.2 370.84)" font-size="5.6" text-anchor="middle">86.18</text>
<text transform="matrix(1.56 0.002 0 1 827.75 370.84)" font-size="5.6" text-anchor="middle">25.81</text>
<text transform="matrix(1.56 0.002 0 1 850.1 370.84)" font-size="5.6" text-anchor="middle">7208</text>
<text transform="matrix(1.56 0.002 0 1 936.6 370.84)" font-size="5.6" text-anchor="middle">807224</text>
<text transform="matrix(1.56 0.002 0 1 681.8 377.35)" font-size="5.6" text-anchor="middle">1</text>
<text transform="matrix(1.56 0.002 0 1 692.7 377.35)" font-size="5.6" text-anchor="middle">27</text>
<text transform="matrix(1.56 0.002 0 1 710.95 377.35)" font-size="5.6" text-anchor="middle">2-2703</text>
<text transform="matrix(1.29 0.002 0 1 739.55 377.5)" font-size="5.5" text-anchor="middle" class="k"><tspan>三</tspan>室两厅</text>
<text transform="matrix(1.56 0.002 0 1 761.85 377.35)" font-size="5.6" text-anchor="middle">3.0</text>
<text transform="matrix(1.56 0.002 0 1 781.1 377.35)" font-size="5.6" text-anchor="middle">111.99</text>
<text transform="matrix(1.56 0.002 0 1 805.2 377.35)" font-size="5.6" text-anchor="middle">86.18</text>
<text transform="matrix(1.56 0.002 0 1 827.75 377.35)" font-size="5.6" text-anchor="middle">25.81</text>
<text transform="matrix(1.56 0.002 0 1 850.1 377.35)" font-size="5.6" text-anchor="middle">7208</text>
<text transform="matrix(1.56 0.002 0 1 936.6 377.35)" font-size="5.6" text-anchor="middle">807224</text>
<text transform="matrix(1.56 0.002 0 1 681.8 383.86)" font-size="5.6" text-anchor="middle">1</text>
<text transform="matrix(1.56 0.002 0 1 692.7 383.86)" font-size="5.6" text-anchor="middle">27</text>
<text transform="matrix(1.56 0.002 0 1 710.95 383.86)" font-size="5.6" text-anchor="middle">2-2704</text>
<text transform="matrix(1.29 0.002 0 1 739.55 384.01)" font-size="5.5" text-anchor="middle" class="k"><tspan>三</tspan>室两厅</text>
<text transform="matrix(1.56 0.002 0 1 761.85 383.86)" font-size="5.6" text-anchor="middle">3.0</text>
<text transform="matrix(1.56 0.002 0 1 781.1 383.86)" font-size="5.6" text-anchor="middle">125.97</text>
<text transform="matrix(1.56 0.002 0 1 805.2 383.86)" font-size="5.6" text-anchor="middle">96.94</text>
<text transform="matrix(1.56 0.002 0 1 827.75 383.86)" font-size="5.6" text-anchor="middle">29.03</text>
<text transform="matrix(1.56 0.002 0 1 850.1 383.86)" font-size="5.6" text-anchor="middle">6958</text>
<text transform="matrix(1.56 0.002 0 1 936.6 383.86)" font-size="5.6" text-anchor="middle">876499</text>
<text transform="matrix(1.56 0.002 0 1 681.8 390.36)" font-size="5.6" text-anchor="middle">1</text>
<text transform="matrix(1.56 0.002 0 1 692.7 390.36)" font-size="5.6" text-anchor="middle">28</text>
<text transform="matrix(1.56 0.002 0 1 710.95 390.36)" font-size="5.6" text-anchor="middle">1-2801</text>
<text transform="matrix(1.29 0.002 0 1 739.55 390.51)" font-size="5.5" text-anchor="middle" class="k"><tspan>三</tspan>室两厅</text>
<text transform="matrix(1.56 0.002 0 1 761.85 390.36)" font-size="5.6" text-anchor="middle">3.0</text>
<text transform="matrix(1.56 0.002 0 1 781.1 390.36)" font-size="5.6" text-anchor="middle">125.97</text>
<text transform="matrix(1.56 0.002 0 1 805.2 390.36)" font-size="5.6" text-anchor="middle">96.94</text>
<text transform="matrix(1.56 0.002 0 1 827.75 390.36)" font-size="5.6" text-anchor="middle">29.03</text>
<text transform="matrix(1.56 0.002 0 1 850.1 390.36)" font-size="5.6" text-anchor="middle">6968</text>
<text transform="matrix(1.56 0.002 0 1 936.6 390.36)" font-size="5.6" text-anchor="middle">877759</text>
<text transform="matrix(1.56 0.002 0 1 681.8 396.87)" font-size="5.6" text-anchor="middle">1</text>
<text transform="matrix(1.56 0.002 0 1 692.7 396.87)" font-size="5.6" text-anchor="middle">28</text>
<text transform="matrix(1.56 0.002 0 1 710.95 396.87)" font-size="5.6" text-anchor="middle">1-2802</text>
<text transform="matrix(1.29 0.002 0 1 739.55 397.02)" font-size="5.5" text-anchor="middle" class="k"><tspan>三</tspan>室两厅</text>
<text transform="matrix(1.56 0.002 0 1 761.85 396.87)" font-size="5.6" text-anchor="middle">3.0</text>
<text transform="matrix(1.56 0.002 0 1 781.1 396.87)" font-size="5.6" text-anchor="middle">111.99</text>
<text transform="matrix(1.56 0.002 0 1 805.2 396.87)" font-size="5.6" text-anchor="middle">86.18</text>
<text transform="matrix(1.56 0.002 0 1 827.75 396.87)" font-size="5.6" text-anchor="middle">25.81</text>
<text transform="matrix(1.56 0.002 0 1 850.1 396.87)" font-size="5.6" text-anchor="middle">7218</text>
<text transform="matrix(1.56 0.002 0 1 936.6 396.87)" font-size="5.6" text-anchor="middle">808344</text>
<text transform="matrix(1.56 0.002 0 1 681.8 403.38)" font-size="5.6" text-anchor="middle">1</text>
<text transform="matrix(1.56 0.002 0 1 692.7 403.38)" font-size="5.6" text-anchor="middle">28</text>
<text transform="matrix(1.56 0.002 0 1 710.95 403.38)" font-size="5.6" text-anchor="middle">1-2803</text>
<text transform="matrix(1.29 0.002 0 1 739.55 403.53)" font-size="5.5" text-anchor="middle" class="k"><tspan>三</tspan>室两厅</text>
<text transform="matrix(1.56 0.002 0 1 761.85 403.38)" font-size="5.6" text-anchor="middle">3.0</text>
<text transform="matrix(1.56 0.002 0 1 781.1 403.38)" font-size="5.6" text-anchor="middle">111.99</text>
<text transform="matrix(1.56 0.002 0 1 805.2 403.38)" font-size="5.6" text-anchor="middle">86.18</text>
<text transform="matrix(1.56 0.002 0 1 827.75 403.38)" font-size="5.6" text-anchor="middle">25.81</text>
<text transform="matrix(1.56 0.002 0 1 850.1 403.38)" font-size="5.6" text-anchor="middle">7218</text>
<text transform="matrix(1.56 0.002 0 1 936.6 403.38)" font-size="5.6" text-anchor="middle">808344</text>
<text transform="matrix(1.56 0.002 0 1 681.8 409.89)" font-size="5.6" text-anchor="middle">1</text>
<text transform="matrix(1.56 0.002 0 1 692.7 409.89)" font-size="5.6" text-anchor="middle">28</text>
<text transform="matrix(1.56 0.002 0 1 710.95 409.89)" font-size="5.6" text-anchor="middle">1-2804</text>
<text transform="matrix(1.29 0.002 0 1 739.55 410.04)" font-size="5.5" text-anchor="middle" class="k"><tspan>三</tspan>室两厅</text>
<text transform="matrix(1.56 0.002 0 1 761.85 409.89)" font-size="5.6" text-anchor="middle">3.0</text>
<text transform="matrix(1.56 0.002 0 1 781.1 409.89)" font-size="5.6" text-anchor="middle">130.19</text>
<text transform="matrix(1.56 0.002 0 1 805.2 409.89)" font-size="5.6" text-anchor="middle">100.19</text>
<text transform="matrix(1.56 0.002 0 1 827.75 409.89)" font-size="5.6" text-anchor="middle">30.00</text>
<text transform="matrix(1.56 0.002 0 1 850.1 409.89)" font-size="5.6" text-anchor="middle">6688</text>
<text transform="matrix(1.56 0.002 0 1 936.6 409.89)" font-size="5.6" text-anchor="middle">870711</text>
<text transform="matrix(1.56 0.002 0 1 681.8 416.39)" font-size="5.6" text-anchor="middle">1</text>
<text transform="matrix(1.56 0.002 0 1 692.7 416.39)" font-size="5.6" text-anchor="middle">28</text>
<text transform="matrix(1.56 0.002 0 1 710.95 416.39)" font-size="5.6" text-anchor="middle">2-2801</text>
<text transform="matrix(1.29 0.002 0 1 739.55 416.54)" font-size="5.5" text-anchor="middle" class="k"><tspan>三</tspan>室两厅</text>
<text transform="matrix(1.56 0.002 0 1 761.85 416.39)" font-size="5.6" text-anchor="middle">3.0</text>
<text transform="matrix(1.56 0.002 0 1 781.1 416.39)" font-size="5.6" text-anchor="middle">130.19</text>
<text transform="matrix(1.56 0.002 0 1 805.2 416.39)" font-size="5.6" text-anchor="middle">100.19</text>
<text transform="matrix(1.56 0.002 0 1 827.75 416.39)" font-size="5.6" text-anchor="middle">30.00</text>
<text transform="matrix(1.56 0.002 0 1 850.1 416.39)" font-size="5.6" text-anchor="middle">6688</text>
<text transform="matrix(1.56 0.002 0 1 936.6 416.39)" font-size="5.6" text-anchor="middle">870711</text>
<text transform="matrix(1.56 0.002 0 1 681.8 422.9)" font-size="5.6" text-anchor="middle">1</text>
<text transform="matrix(1.56 0.002 0 1 692.7 422.9)" font-size="5.6" text-anchor="middle">28</text>
<text transform="matrix(1.56 0.002 0 1 710.95 422.9)" font-size="5.6" text-anchor="middle">2-2802</text>
<text transform="matrix(1.29 0.002 0 1 739.55 423.05)" font-size="5.5" text-anchor="middle" class="k"><tspan>三</tspan>室两厅</text>
<text transform="matrix(1.56 0.002 0 1 761.85 422.9)" font-size="5.6" text-anchor="middle">3.0</text>
<text transform="matrix(1.56 0.002 0 1 781.1 422.9)" font-size="5.6" text-anchor="middle">111.99</text>
<text transform="matrix(1.56 0.002 0 1 805.2 422.9)" font-size="5.6" text-anchor="middle">86.18</text>
<text transform="matrix(1.56 0.002 0 1 827.75 422.9)" font-size="5.6" text-anchor="middle">25.81</text>
<text transform="matrix(1.56 0.002 0 1 850.1 422.9)" font-size="5.6" text-anchor="middle">7218</text>
<text transform="matrix(1.56 0.002 0 1 936.6 422.9)" font-size="5.6" text-anchor="middle">808344</text>
<text transform="matrix(1.56 0.002 0 1 681.8 429.41)" font-size="5.6" text-anchor="middle">1</text>
<text transform="matrix(1.56 0.002 0 1 692.7 429.41)" font-size="5.6" text-anchor="middle">28</text>
<text transform="matrix(1.56 0.002 0 1 710.95 429.41)" font-size="5.6" text-anchor="middle">2-2803</text>
<text transform="matrix(1.29 0.002 0 1 739.55 429.56)" font-size="5.5" text-anchor="middle" class="k"><tspan>三</tspan>室两厅</text>
<text transform="matrix(1.56 0.002 0 1 761.85 429.41)" font-size="5.6" text-anchor="middle">3.0</text>
<text transform="matrix(1.56 0.002 0 1 781.1 429.41)" font-size="5.6" text-anchor="middle">111.99</text>
<text transform="matrix(1.56 0.002 0 1 805.2 429.41)" font-size="5.6" text-anchor="middle">86.18</text>
<text transform="matrix(1.56 0.002 0 1 827.75 429.41)" font-size="5.6" text-anchor="middle">25.81</text>
<text transform="matrix(1.56 0.002 0 1 850.1 429.41)" font-size="5.6" text-anchor="middle">7218</text>
<text transform="matrix(1.56 0.002 0 1 936.6 429.41)" font-size="5.6" text-anchor="middle">808344</text>
<text transform="matrix(1.56 0.002 0 1 681.8 435.91)" font-size="5.6" text-anchor="middle">1</text>
<text transform="matrix(1.56 0.002 0 1 692.7 435.91)" font-size="5.6" text-anchor="middle">28</text>
<text transform="matrix(1.56 0.002 0 1 710.95 435.91)" font-size="5.6" text-anchor="middle">2-2804</text>
<text transform="matrix(1.29 0.002 0 1 739.55 436.06)" font-size="5.5" text-anchor="middle" class="k"><tspan>三</tspan>室两厅</text>
<text transform="matrix(1.56 0.002 0 1 761.85 435.91)" font-size="5.6" text-anchor="middle">3.0</text>
<text transform="matrix(1.56 0.002 0 1 781.1 435.91)" font-size="5.6" text-anchor="middle">125.97</text>
<text transform="matrix(1.56 0.002 0 1 805.2 435.91)" font-size="5.6" text-anchor="middle">96.94</text>
<text transform="matrix(1.56 0.002 0 1 827.75 435.91)" font-size="5.6" text-anchor="middle">29.03</text>
<text transform="matrix(1.56 0.002 0 1 850.1 435.91)" font-size="5.6" text-anchor="middle">6968</text>
<text transform="matrix(1.56 0.002 0 1 936.6 435.91)" font-size="5.6" text-anchor="middle">877759</text>
<text transform="matrix(1.56 0.002 0 1 681.8 442.42)" font-size="5.6" text-anchor="middle">1</text>
<text transform="matrix(1.56 0.002 0 1 692.7 442.42)" font-size="5.6" text-anchor="middle">29</text>
<text transform="matrix(1.56 0.002 0 1 710.95 442.42)" font-size="5.6" text-anchor="middle">1-2901</text>
<text transform="matrix(1.29 0.002 0 1 739.55 442.57)" font-size="5.5" text-anchor="middle" class="k"><tspan>三</tspan>室两厅</text>
<text transform="matrix(1.56 0.002 0 1 761.85 442.42)" font-size="5.6" text-anchor="middle">3.0</text>
<text transform="matrix(1.56 0.002 0 1 781.1 442.42)" font-size="5.6" text-anchor="middle">125.97</text>
<text transform="matrix(1.56 0.002 0 1 805.2 442.42)" font-size="5.6" text-anchor="middle">96.94</text>
<text transform="matrix(1.56 0.002 0 1 827.75 442.42)" font-size="5.6" text-anchor="middle">29.03</text>
<text transform="matrix(1.56 0.002 0 1 850.1 442.42)" font-size="5.6" text-anchor="middle">6978</text>
<text transform="matrix(1.56 0.002 0 1 936.6 442.42)" font-size="5.6" text-anchor="middle">879019</text>
<text transform="matrix(1.56 0.002 0 1 681.8 448.93)" font-size="5.6" text-anchor="middle">1</text>
<text transform="matrix(1.56 0.002 0 1 692.7 448.93)" font-size="5.6" text-anchor="middle">29</text>
<text transform="matrix(1.56 0.002 0 1 710.95 448.93)" font-size="5.6" text-anchor="middle">1-2902</text>
<text transform="matrix(1.29 0.002 0 1 739.55 449.08)" font-size="5.5" text-anchor="middle" class="k"><tspan>三</tspan>室两厅</text>
<text transform="matrix(1.56 0.002 0 1 761.85 448.93)" font-size="5.6" text-anchor="middle">3.0</text>
<text transform="matrix(1.56 0.002 0 1 781.1 448.93)" font-size="5.6" text-anchor="middle">111.99</text>
<text transform="matrix(1.56 0.002 0 1 805.2 448.93)" font-size="5.6" text-anchor="middle">86.18</text>
<text transform="matrix(1.56 0.002 0 1 827.75 448.93)" font-size="5.6" text-anchor="middle">25.81</text>
<text transform="matrix(1.56 0.002 0 1 850.1 448.93)" font-size="5.6" text-anchor="middle">7228</text>
<text transform="matrix(1.56 0.002 0 1 936.6 448.93)" font-size="5.6" text-anchor="middle">809464</text>
<text transform="matrix(1.56 0.002 0 1 681.8 455.43)" font-size="5.6" text-anchor="middle">1</text>
<text transform="matrix(1.56 0.002 0 1 692.7 455.43)" font-size="5.6" text-anchor="middle">29</text>
<text transform="matrix(1.56 0.002 0 1 710.95 455.43)" font-size="5.6" text-anchor="middle">1-2903</text>
<text transform="matrix(1.29 0.002 0 1 739.55 455.58)" font-size="5.5" text-anchor="middle" class="k"><tspan>三</tspan>室两厅</text>
<text transform="matrix(1.56 0.002 0 1 761.85 455.43)" font-size="5.6" text-anchor="middle">3.0</text>
<text transform="matrix(1.56 0.002 0 1 781.1 455.43)" font-size="5.6" text-anchor="middle">111.99</text>
<text transform="matrix(1.56 0.002 0 1 805.2 455.43)" font-size="5.6" text-anchor="middle">86.18</text>
<text transform="matrix(1.56 0.002 0 1 827.75 455.43)" font-size="5.6" text-anchor="middle">25.81</text>
<text transform="matrix(1.56 0.002 0 1 850.1 455.43)" font-size="5.6" text-anchor="middle">7228</text>
<text transform="matrix(1.56 0.002 0 1 936.6 455.43)" font-size="5.6" text-anchor="middle">809464</text>
<text transform="matrix(1.56 0.002 0 1 681.8 461.94)" font-size="5.6" text-anchor="middle">1</text>
<text transform="matrix(1.56 0.002 0 1 692.7 461.94)" font-size="5.6" text-anchor="middle">29</text>
<text transform="matrix(1.56 0.002 0 1 710.95 461.94)" font-size="5.6" text-anchor="middle">1-2904</text>
<text transform="matrix(1.29 0.002 0 1 739.55 462.09)" font-size="5.5" text-anchor="middle" class="k"><tspan>三</tspan>室两厅</text>
<text transform="matrix(1.56 0.002 0 1 761.85 461.94)" font-size="5.6" text-anchor="middle">3.0</text>
<text transform="matrix(1.56 0.002 0 1 781.1 461.94)" font-size="5.6" text-anchor="middle">130.19</text>
<text transform="matrix(1.56 0.002 0 1 805.2 461.94)" font-size="5.6" text-anchor="middle">100.19</text>
<text transform="matrix(1.56 0.002 0 1 827.75 461.94)" font-size="5.6" text-anchor="middle">30.00</text>
<text transform="matrix(1.56 0.002 0 1 850.1 461.94)" font-size="5.6" text-anchor="middle">6698</text>
<text transform="matrix(1.56 0.002 0 1 936.6 461.94)" font-size="5.6" text-anchor="middle">872013</text>
<text transform="matrix(1.56 0.002 0 1 681.8 468.45)" font-size="5.6" text-anchor="middle">1</text>
<text transform="matrix(1.56 0.002 0 1 692.7 468.45)" font-size="5.6" text-anchor="middle">29</text>
<text transform="matrix(1.56 0.002 0 1 710.95 468.45)" font-size="5.6" text-anchor="middle">2-2901</text>
<text transform="matrix(1.29 0.002 0 1 739.55 468.6)" font-size="5.5" text-anchor="middle" class="k"><tspan>三</tspan>室两厅</text>
<text transform="matrix(1.56 0.002 0 1 761.85 468.45)" font-size="5.6" text-anchor="middle">3.0</text>
<text transform="matrix(1.56 0.002 0 1 781.1 468.45)" font-size="5.6" text-anchor="middle">130.19</text>
<text transform="matrix(1.56 0.002 0 1 805.2 468.45)" font-size="5.6" text-anchor="middle">100.19</text>
<text transform="matrix(1.56 0.002 0 1 827.75 468.45)" font-size="5.6" text-anchor="middle">30.00</text>
<text transform="matrix(1.56 0.002 0 1 850.1 468.45)" font-size="5.6" text-anchor="middle">6698</text>
<text transform="matrix(1.56 0.002 0 1 936.6 468.45)" font-size="5.6" text-anchor="middle">872013</text>
<text transform="matrix(1.56 0.002 0 1 681.8 474.96)" font-size="5.6" text-anchor="middle">1</text>
<text transform="matrix(1.56 0.002 0 1 692.7 474.96)" font-size="5.6" text-anchor="middle">29</text>
<text transform="matrix(1.56 0.002 0 1 710.95 474.96)" font-size="5.6" text-anchor="middle">2-2902</text>
<text transform="matrix(1.29 0.002 0 1 739.55 475.11)" font-size="5.5" text-anchor="middle" class="k"><tspan>三</tspan>室两厅</text>
<text transform="matrix(1.56 0.002 0 1 761.85 474.96)" font-size="5.6" text-anchor="middle">3.0</text>
<text transform="matrix(1.56 0.002 0 1 781.1 474.96)" font-size="5.6" text-anchor="middle">111.99</text>
<text transform="matrix(1.56 0.002 0 1 805.2 474.96)" font-size="5.6" text-anchor="middle">86.18</text>
<text transform="matrix(1.56 0.002 0 1 827.75 474.96)" font-size="5.6" text-anchor="middle">25.81</text>
<text transform="matrix(1.56 0.002 0 1 850.1 474.96)" font-size="5.6" text-anchor="middle">7228</text>
<text transform="matrix(1.56 0.002 0 1 936.6 474.96)" font-size="5.6" text-anchor="middle">809464</text>
<text transform="matrix(1.56 0.002 0 1 681.8 481.46)" font-size="5.6" text-anchor="middle">1</text>
<text transform="matrix(1.56 0.002 0 1 692.7 481.46)" font-size="5.6" text-anchor="middle">29</text>
<text transform="matrix(1.56 0.002 0 1 710.95 481.46)" font-size="5.6" text-anchor="middle">2-2903</text>
<text transform="matrix(1.29 0.002 0 1 739.55 481.61)" font-size="5.5" text-anchor="middle" class="k"><tspan>三</tspan>室两厅</text>
<text transform="matrix(1.56 0.002 0 1 761.85 481.46)" font-size="5.6" text-anchor="middle">3.0</text>
<text transform="matrix(1.56 0.002 0 1 781.1 481.46)" font-size="5.6" text-anchor="middle">111.99</text>
<text transform="matrix(1.56 0.002 0 1 805.2 481.46)" font-size="5.6" text-anchor="middle">86.18</text>
<text transform="matrix(1.56 0.002 0 1 827.75 481.46)" font-size="5.6" text-anchor="middle">25.81</text>
<text transform="matrix(1.56 0.002 0 1 850.1 481.46)" font-size="5.6" text-anchor="middle">7228</text>
<text transform="matrix(1.56 0.002 0 1 936.6 481.46)" font-size="5.6" text-anchor="middle">809464</text>
<text transform="matrix(1.56 0.002 0 1 681.8 487.97)" font-size="5.6" text-anchor="middle">1</text>
<text transform="matrix(1.56 0.002 0 1 692.7 487.97)" font-size="5.6" text-anchor="middle">29</text>
<text transform="matrix(1.56 0.002 0 1 710.95 487.97)" font-size="5.6" text-anchor="middle">2-2904</text>
<text transform="matrix(1.29 0.002 0 1 739.55 488.12)" font-size="5.5" text-anchor="middle" class="k"><tspan>三</tspan>室两厅</text>
<text transform="matrix(1.56 0.002 0 1 761.85 487.97)" font-size="5.6" text-anchor="middle">3.0</text>
<text transform="matrix(1.56 0.002 0 1 781.1 487.97)" font-size="5.6" text-anchor="middle">125.97</text>
<text transform="matrix(1.56 0.002 0 1 805.2 487.97)" font-size="5.6" text-anchor="middle">96.94</text>
<text transform="matrix(1.56 0.002 0 1 827.75 487.97)" font-size="5.6" text-anchor="middle">29.03</text>
<text transform="matrix(1.56 0.002 0 1 850.1 487.97)" font-size="5.6" text-anchor="middle">6978</text>
<text transform="matrix(1.56 0.002 0 1 936.6 487.97)" font-size="5.6" text-anchor="middle">879019</text>
<text transform="matrix(1.56 0.002 0 1 681.8 494.48)" font-size="5.6" text-anchor="middle">1</text>
<text transform="matrix(1.56 0.002 0 1 692.7 494.48)" font-size="5.6" text-anchor="middle">30</text>
<text transform="matrix(1.56 0.002 0 1 710.95 494.48)" font-size="5.6" text-anchor="middle">1-3001</text>
<text transform="matrix(1.29 0.002 0 1 739.55 494.63)" font-size="5.5" text-anchor="middle" class="k"><tspan>三</tspan>室两厅</text>
<text transform="matrix(1.56 0.002 0 1 761.85 494.48)" font-size="5.6" text-anchor="middle">3.0</text>
<text transform="matrix(1.56 0.002 0 1 781.1 494.48)" font-size="5.6" text-anchor="middle">125.97</text>
<text transform="matrix(1.56 0.002 0 1 805.2 494.48)" font-size="5.6" text-anchor="middle">96.94</text>
<text transform="matrix(1.56 0.002 0 1 827.75 494.48)" font-size="5.6" text-anchor="middle">29.03</text>
<text transform="matrix(1.56 0.002 0 1 850.1 494.48)" font-size="5.6" text-anchor="middle">6988</text>
<text transform="matrix(1.56 0.002 0 1 936.6 494.48)" font-size="5.6" text-anchor="middle">880278</text>
<text transform="matrix(1.56 0.002 0 1 681.8 500.98)" font-size="5.6" text-anchor="middle">1</text>
<text transform="matrix(1.56 0.002 0 1 692.7 500.98)" font-size="5.6" text-anchor="middle">30</text>
<text transform="matrix(1.56 0.002 0 1 710.95 500.98)" font-size="5.6" text-anchor="middle">1-3002</text>
<text transform="matrix(1.29 0.002 0 1 739.55 501.13)" font-size="5.5" text-anchor="middle" class="k"><tspan>三</tspan>室两厅</text>
<text transform="matrix(1.56 0.002 0 1 761.85 500.98)" font-size="5.6" text-anchor="middle">3.0</text>
<text transform="matrix(1.56 0.002 0 1 781.1 500.98)" font-size="5.6" text-anchor="middle">111.99</text>
<text transform="matrix(1.56 0.002 0 1 805.2 500.98)" font-size="5.6" text-anchor="middle">86.18</text>
<text transform="matrix(1.56 0.002 0 1 827.75 500.98)" font-size="5.6" text-anchor="middle">25.81</text>
<text transform="matrix(1.56 0.002 0 1 850.1 500.98)" font-size="5.6" text-anchor="middle">7238</text>
<text transform="matrix(1.56 0.002 0 1 936.6 500.98)" font-size="5.6" text-anchor="middle">810584</text>
<text transform="matrix(1.56 0.002 0 1 681.8 507.49)" font-size="5.6" text-anchor="middle">1</text>
<text transform="matrix(1.56 0.002 0 1 692.7 507.49)" font-size="5.6" text-anchor="middle">30</text>
<text transform="matrix(1.56 0.002 0 1 710.95 507.49)" font-size="5.6" text-anchor="middle">1-3003</text>
<text transform="matrix(1.29 0.002 0 1 739.55 507.64)" font-size="5.5" text-anchor="middle" class="k"><tspan>三</tspan>室两厅</text>
<text transform="matrix(1.56 0.002 0 1 761.85 507.49)" font-size="5.6" text-anchor="middle">3.0</text>
<text transform="matrix(1.56 0.002 0 1 781.1 507.49)" font-size="5.6" text-anchor="middle">111.99</text>
<text transform="matrix(1.56 0.002 0 1 805.2 507.49)" font-size="5.6" text-anchor="middle">86.18</text>
<text transform="matrix(1.56 0.002 0 1 827.75 507.49)" font-size="5.6" text-anchor="middle">25.81</text>
<text transform="matrix(1.56 0.002 0 1 850.1 507.49)" font-size="5.6" text-anchor="middle">7238</text>
<text transform="matrix(1.56 0.002 0 1 936.6 507.49)" font-size="5.6" text-anchor="middle">810584</text>
<text transform="matrix(1.56 0.002 0 1 681.8 514)" font-size="5.6" text-anchor="middle">1</text>
<text transform="matrix(1.56 0.002 0 1 692.7 514)" font-size="5.6" text-anchor="middle">30</text>
<text transform="matrix(1.56 0.002 0 1 710.95 514)" font-size="5.6" text-anchor="middle">1-3004</text>
<text transform="matrix(1.29 0.002 0 1 739.55 514.15)" font-size="5.5" text-anchor="middle" class="k"><tspan>三</tspan>室两厅</text>
<text transform="matrix(1.56 0.002 0 1 761.85 514)" font-size="5.6" text-anchor="middle">3.0</text>
<text transform="matrix(1.56 0.002 0 1 781.1 514)" font-size="5.6" text-anchor="middle">130.19</text>
<text transform="matrix(1.56 0.002 0 1 805.2 514)" font-size="5.6" text-anchor="middle">100.19</text>
<text transform="matrix(1.56 0.002 0 1 827.75 514)" font-size="5.6" text-anchor="middle">30.00</text>
<text transform="matrix(1.56 0.002 0 1 850.1 514)" font-size="5.6" text-anchor="middle">6708</text>
<text transform="matrix(1.56 0.002 0 1 936.6 514)" font-size="5.6" text-anchor="middle">873315</text>
<text transform="matrix(1.56 0.002 0 1 681.8 520.51)" font-size="5.6" text-anchor="middle">1</text>
<text transform="matrix(1.56 0.002 0 1 692.7 520.51)" font-size="5.6" text-anchor="middle">30</text>
<text transform="matrix(1.56 0.002 0 1 710.95 520.51)" font-size="5.6" text-anchor="middle">2-3001</text>
<text transform="matrix(1.29 0.002 0 1 739.55 520.66)" font-size="5.5" text-anchor="middle" class="k"><tspan>三</tspan>室两厅</text>
<text transform="matrix(1.56 0.002 0 1 761.85 520.51)" font-size="5.6" text-anchor="middle">3.0</text>
<text transform="matrix(1.56 0.002 0 1 781.1 520.51)" font-size="5.6" text-anchor="middle">130.19</text>
<text transform="matrix(1.56 0.002 0 1 805.2 520.51)" font-size="5.6" text-anchor="middle">100.19</text>
<text transform="matrix(1.56 0.002 0 1 827.75 520.51)" font-size="5.6" text-anchor="middle">30.00</text>
<text transform="matrix(1.56 0.002 0 1 850.1 520.51)" font-size="5.6" text-anchor="middle">6708</text>
<text transform="matrix(1.56 0.002 0 1 936.6 520.51)" font-size="5.6" text-anchor="middle">873315</text>
<text transform="matrix(1.56 0.002 0 1 681.8 527.01)" font-size="5.6" text-anchor="middle">1</text>
<text transform="matrix(1.56 0.002 0 1 692.7 527.01)" font-size="5.6" text-anchor="middle">30</text>
<text transform="matrix(1.56 0.002 0 1 710.95 527.01)" font-size="5.6" text-anchor="middle">2-3002</text>
<text transform="matrix(1.29 0.002 0 1 739.55 527.16)" font-size="5.5" text-anchor="middle" class="k"><tspan>三</tspan>室两厅</text>
<text transform="matrix(1.56 0.002 0 1 761.85 527.01)" font-size="5.6" text-anchor="middle">3.0</text>
<text transform="matrix(1.56 0.002 0 1 781.1 527.01)" font-size="5.6" text-anchor="middle">111.99</text>
<text transform="matrix(1.56 0.002 0 1 805.2 527.01)" font-size="5.6" text-anchor="middle">86.18</text>
<text transform="matrix(1.56 0.002 0 1 827.75 527.01)" font-size="5.6" text-anchor="middle">25.81</text>
<text transform="matrix(1.56 0.002 0 1 850.1 527.01)" font-size="5.6" text-anchor="middle">7238</text>
<text transform="matrix(1.56 0.002 0 1 936.6 527.01)" font-size="5.6" text-anchor="middle">810584</text>
<text transform="matrix(1.56 0.002 0 1 681.8 533.52)" font-size="5.6" text-anchor="middle">1</text>
<text transform="matrix(1.56 0.002 0 1 692.7 533.52)" font-size="5.6" text-anchor="middle">30</text>
<text transform="matrix(1.56 0.002 0 1 710.95 533.52)" font-size="5.6" text-anchor="middle">2-3003</text>
<text transform="matrix(1.29 0.002 0 1 739.55 533.67)" font-size="5.5" text-anchor="middle" class="k"><tspan>三</tspan>室两厅</text>
<text transform="matrix(1.56 0.002 0 1 761.85 533.52)" font-size="5.6" text-anchor="middle">3.0</text>
<text transform="matrix(1.56 0.002 0 1 781.1 533.52)" font-size="5.6" text-anchor="middle">111.99</text>
<text transform="matrix(1.56 0.002 0 1 805.2 533.52)" font-size="5.6" text-anchor="middle">86.18</text>
<text transform="matrix(1.56 0.002 0 1 827.75 533.52)" font-size="5.6" text-anchor="middle">25.81</text>
<text transform="matrix(1.56 0.002 0 1 850.1 533.52)" font-size="5.6" text-anchor="middle">7238</text>
<text transform="matrix(1.56 0.002 0 1 936.6 533.52)" font-size="5.6" text-anchor="middle">810584</text>
<text transform="matrix(1.56 0.002 0 1 681.8 540.03)" font-size="5.6" text-anchor="middle">1</text>
<text transform="matrix(1.56 0.002 0 1 692.7 540.03)" font-size="5.6" text-anchor="middle">30</text>
<text transform="matrix(1.56 0.002 0 1 710.95 540.03)" font-size="5.6" text-anchor="middle">2-3004</text>
<text transform="matrix(1.29 0.002 0 1 739.55 540.18)" font-size="5.5" text-anchor="middle" class="k"><tspan>三</tspan>室两厅</text>
<text transform="matrix(1.56 0.002 0 1 761.85 540.03)" font-size="5.6" text-anchor="middle">3.0</text>
<text transform="matrix(1.56 0.002 0 1 781.1 540.03)" font-size="5.6" text-anchor="middle">125.97</text>
<text transform="matrix(1.56 0.002 0 1 805.2 540.03)" font-size="5.6" text-anchor="middle">96.94</text>
<text transform="matrix(1.56 0.002 0 1 827.75 540.03)" font-size="5.6" text-anchor="middle">29.03</text>
<text transform="matrix(1.56 0.002 0 1 850.1 540.03)" font-size="5.6" text-anchor="middle">6988</text>
<text transform="matrix(1.56 0.002 0 1 936.6 540.03)" font-size="5.6" text-anchor="middle">880278</text>
<text transform="matrix(1.56 0.002 0 1 681.8 546.53)" font-size="5.6" text-anchor="middle">1</text>
<text transform="matrix(1.56 0.002 0 1 692.7 546.53)" font-size="5.6" text-anchor="middle">31</text>
<text transform="matrix(1.56 0.002 0 1 710.95 546.53)" font-size="5.6" text-anchor="middle">1-3101</text>
<text transform="matrix(1.29 0.002 0 1 739.55 546.68)" font-size="5.5" text-anchor="middle" class="k"><tspan>三</tspan>室两厅</text>
<text transform="matrix(1.56 0.002 0 1 761.85 546.53)" font-size="5.6" text-anchor="middle">3.0</text>
<text transform="matrix(1.56 0.002 0 1 781.1 546.53)" font-size="5.6" text-anchor="middle">125.97</text>
<text transform="matrix(1.56 0.002 0 1 805.2 546.53)" font-size="5.6" text-anchor="middle">96.94</text>
<text transform="matrix(1.56 0.002 0 1 827.75 546.53)" font-size="5.6" text-anchor="middle">29.03</text>
<text transform="matrix(1.56 0.002 0 1 850.1 546.53)" font-size="5.6" text-anchor="middle">6998</text>
<text transform="matrix(1.56 0.002 0 1 936.6 546.53)" font-size="5.6" text-anchor="middle">881538</text>
<text transform="matrix(1.56 0.002 0 1 681.8 553.04)" font-size="5.6" text-anchor="middle">1</text>
<text transform="matrix(1.56 0.002 0 1 692.7 553.04)" font-size="5.6" text-anchor="middle">31</text>
<text transform="matrix(1.56 0.002 0 1 710.95 553.04)" font-size="5.6" text-anchor="middle">1-3102</text>
<text transform="matrix(1.29 0.002 0 1 739.55 553.19)" font-size="5.5" text-anchor="middle" class="k"><tspan>三</tspan>室两厅</text>
<text transform="matrix(1.56 0.002 0 1 761.85 553.04)" font-size="5.6" text-anchor="middle">3.0</text>
<text transform="matrix(1.56 0.002 0 1 781.1 553.04)" font-size="5.6" text-anchor="middle">111.99</text>
<text transform="matrix(1.56 0.002 0 1 805.2 553.04)" font-size="5.6" text-anchor="middle">86.18</text>
<text transform="matrix(1.56 0.002 0 1 827.75 553.04)" font-size="5.6" text-anchor="middle">25.81</text>
<text transform="matrix(1.56 0.002 0 1 850.1 553.04)" font-size="5.6" text-anchor="middle">7248</text>
<text transform="matrix(1.56 0.002 0 1 936.6 553.04)" font-size="5.6" text-anchor="middle">811704</text>
<text transform="matrix(1.56 0.002 0 1 681.8 559.55)" font-size="5.6" text-anchor="middle">1</text>
<text transform="matrix(1.56 0.002 0 1 692.7 559.55)" font-size="5.6" text-anchor="middle">31</text>
<text transform="matrix(1.56 0.002 0 1 710.95 559.55)" font-size="5.6" text-anchor="middle">1-3103</text>
<text transform="matrix(1.29 0.002 0 1 739.55 559.7)" font-size="5.5" text-anchor="middle" class="k"><tspan>三</tspan>室两厅</text>
<text transform="matrix(1.56 0.002 0 1 761.85 559.55)" font-size="5.6" text-anchor="middle">3.0</text>
<text transform="matrix(1.56 0.002 0 1 781.1 559.55)" font-size="5.6" text-anchor="middle">111.99</text>
<text transform="matrix(1.56 0.002 0 1 805.2 559.55)" font-size="5.6" text-anchor="middle">86.18</text>
<text transform="matrix(1.56 0.002 0 1 827.75 559.55)" font-size="5.6" text-anchor="middle">25.81</text>
<text transform="matrix(1.56 0.002 0 1 850.1 559.55)" font-size="5.6" text-anchor="middle">7248</text>
<text transform="matrix(1.56 0.002 0 1 936.6 559.55)" font-size="5.6" text-anchor="middle">811704</text>
<text transform="matrix(1.56 0.002 0 1 681.8 566.05)" font-size="5.6" text-anchor="middle">1</text>
<text transform="matrix(1.56 0.002 0 1 692.7 566.05)" font-size="5.6" text-anchor="middle">31</text>
<text transform="matrix(1.56 0.002 0 1 710.95 566.05)" font-size="5.6" text-anchor="middle">1-3104</text>
<text transform="matrix(1.29 0.002 0 1 739.55 566.2)" font-size="5.5" text-anchor="middle" class="k"><tspan>三</tspan>室两厅</text>
<text transform="matrix(1.56 0.002 0 1 761.85 566.05)" font-size="5.6" text-anchor="middle">3.0</text>
<text transform="matrix(1.56 0.002 0 1 781.1 566.05)" font-size="5.6" text-anchor="middle">130.19</text>
<text transform="matrix(1.56 0.002 0 1 805.2 566.05)" font-size="5.6" text-anchor="middle">100.19</text>
<text transform="matrix(1.56 0.002 0 1 827.75 566.05)" font-size="5.6" text-anchor="middle">30.00</text>
<text transform="matrix(1.56 0.002 0 1 850.1 566.05)" font-size="5.6" text-anchor="middle">6718</text>
<text transform="matrix(1.56 0.002 0 1 936.6 566.05)" font-size="5.6" text-anchor="middle">874616</text>
<text transform="matrix(1.56 0.002 0 1 681.8 572.56)" font-size="5.6" text-anchor="middle">1</text>
<text transform="matrix(1.56 0.002 0 1 692.7 572.56)" font-size="5.6" text-anchor="middle">31</text>
<text transform="matrix(1.56 0.002 0 1 710.95 572.56)" font-size="5.6" text-anchor="middle">2-3101</text>
<text transform="matrix(1.29 0.002 0 1 739.55 572.71)" font-size="5.5" text-anchor="middle" class="k"><tspan>三</tspan>室两厅</text>
<text transform="matrix(1.56 0.002 0 1 761.85 572.56)" font-size="5.6" text-anchor="middle">3.0</text>
<text transform="matrix(1.56 0.002 0 1 781.1 572.56)" font-size="5.6" text-anchor="middle">130.19</text>
<text transform="matrix(1.56 0.002 0 1 805.2 572.56)" font-size="5.6" text-anchor="middle">100.19</text>
<text transform="matrix(1.56 0.002 0 1 827.75 572.56)" font-size="5.6" text-anchor="middle">30.00</text>
<text transform="matrix(1.56 0.002 0 1 850.1 572.56)" font-size="5.6" text-anchor="middle">6718</text>
<text transform="matrix(1.56 0.002 0 1 936.6 572.56)" font-size="5.6" text-anchor="middle">874616</text>
<text transform="matrix(1.56 0.002 0 1 681.8 579.07)" font-size="5.6" text-anchor="middle">1</text>
<text transform="matrix(1.56 0.002 0 1 692.7 579.07)" font-size="5.6" text-anchor="middle">31</text>
<text transform="matrix(1.56 0.002 0 1 710.95 579.07)" font-size="5.6" text-anchor="middle">2-3102</text>
<text transform="matrix(1.29 0.002 0 1 739.55 579.22)" font-size="5.5" text-anchor="middle" class="k"><tspan>三</tspan>室两厅</text>
<text transform="matrix(1.56 0.002 0 1 761.85 579.07)" font-size="5.6" text-anchor="middle">3.0</text>
<text transform="matrix(1.56 0.002 0 1 781.1 579.07)" font-size="5.6" text-anchor="middle">111.99</text>
<text transform="matrix(1.56 0.002 0 1 805.2 579.07)" font-size="5.6" text-anchor="middle">86.18</text>
<text transform="matrix(1.56 0.002 0 1 827.75 579.07)" font-size="5.6" text-anchor="middle">25.81</text>
<text transform="matrix(1.56 0.002 0 1 850.1 579.07)" font-size="5.6" text-anchor="middle">7248</text>
<text transform="matrix(1.56 0.002 0 1 936.6 579.07)" font-size="5.6" text-anchor="middle">811704</text>
<text transform="matrix(1.56 0.002 0 1 681.8 585.58)" font-size="5.6" text-anchor="middle">1</text>
<text transform="matrix(1.56 0.002 0 1 692.7 585.58)" font-size="5.6" text-anchor="middle">31</text>
<text transform="matrix(1.56 0.002 0 1 710.95 585.58)" font-size="5.6" text-anchor="middle">2-3103</text>
<text transform="matrix(1.29 0.002 0 1 739.55 585.73)" font-size="5.5" text-anchor="middle" class="k"><tspan>三</tspan>室两厅</text>
<text transform="matrix(1.56 0.002 0 1 761.85 585.58)" font-size="5.6" text-anchor="middle">3.0</text>
<text transform="matrix(1.56 0.002 0 1 781.1 585.58)" font-size="5.6" text-anchor="middle">111.99</text>
<text transform="matrix(1.56 0.002 0 1 805.2 585.58)" font-size="5.6" text-anchor="middle">86.18</text>
<text transform="matrix(1.56 0.002 0 1 827.75 585.58)" font-size="5.6" text-anchor="middle">25.81</text>
<text transform="matrix(1.56 0.002 0 1 850.1 585.58)" font-size="5.6" text-anchor="middle">7248</text>
<text transform="matrix(1.56 0.002 0 1 936.6 585.58)" font-size="5.6" text-anchor="middle">811704</text>
<text transform="matrix(1.56 0.002 0 1 681.8 592.08)" font-size="5.6" text-anchor="middle">1</text>
<text transform="matrix(1.56 0.002 0 1 692.7 592.08)" font-size="5.6" text-anchor="middle">31</text>
<text transform="matrix(1.56 0.002 0 1 710.95 592.08)" font-size="5.6" text-anchor="middle">2-3104</text>
<text transform="matrix(1.29 0.002 0 1 739.55 592.23)" font-size="5.5" text-anchor="middle" class="k"><tspan>三</tspan>室两厅</text>
<text transform="matrix(1.56 0.002 0 1 761.85 592.08)" font-size="5.6" text-anchor="middle">3.0</text>
<text transform="matrix(1.56 0.002 0 1 781.1 592.08)" font-size="5.6" text-anchor="middle">125.97</text>
<text transform="matrix(1.56 0.002 0 1 805.2 592.08)" font-size="5.6" text-anchor="middle">96.94</text>
<text transform="matrix(1.56 0.002 0 1 827.75 592.08)" font-size="5.6" text-anchor="middle">29.03</text>
<text transform="matrix(1.56 0.002 0 1 850.1 592.08)" font-size="5.6" text-anchor="middle">6998</text>
<text transform="matrix(1.56 0.002 0 1 936.6 592.08)" font-size="5.6" text-anchor="middle">881538</text>
<text transform="matrix(1.56 0.002 0 1 681.8 598.59)" font-size="5.6" text-anchor="middle">1</text>
<text transform="matrix(1.56 0.002 0 1 692.7 598.59)" font-size="5.6" text-anchor="middle">32</text>
<text transform="matrix(1.56 0.002 0 1 710.95 598.59)" font-size="5.6" text-anchor="middle">1-3201</text>
<text transform="matrix(1.29 0.002 0 1 739.55 598.74)" font-size="5.5" text-anchor="middle" class="k"><tspan>三</tspan>室两厅</text>
<text transform="matrix(1.56 0.002 0 1 761.85 598.59)" font-size="5.6" text-anchor="middle">3.0</text>
<text transform="matrix(1.56 0.002 0 1 781.1 598.59)" font-size="5.6" text-anchor="middle">125.97</text>
<text transform="matrix(1.56 0.002 0 1 805.2 598.59)" font-size="5.6" text-anchor="middle">96.94</text>
<text transform="matrix(1.56 0.002 0 1 827.75 598.59)" font-size="5.6" text-anchor="middle">29.03</text>
<text transform="matrix(1.56 0.002 0 1 850.1 598.59)" font-size="5.6" text-anchor="middle">6948</text>
<text transform="matrix(1.56 0.002 0 1 936.6 598.59)" font-size="5.6" text-anchor="middle">875240</text>
<text transform="matrix(1.56 0.002 0 1 681.8 605.1)" font-size="5.6" text-anchor="middle">1</text>
<text transform="matrix(1.56 0.002 0 1 692.7 605.1)" font-size="5.6" text-anchor="middle">32</text>
<text transform="matrix(1.56 0.002 0 1 710.95 605.1)" font-size="5.6" text-anchor="middle">1-3202</text>
<text transform="matrix(1.29 0.002 0 1 739.55 605.25)" font-size="5.5" text-anchor="middle" class="k"><tspan>三</tspan>室两厅</text>
<text transform="matrix(1.56 0.002 0 1 761.85 605.1)" font-size="5.6" text-anchor="middle">3.0</text>
<text transform="matrix(1.56 0.002 0 1 781.1 605.1)" font-size="5.6" text-anchor="middle">111.99</text>
<text transform="matrix(1.56 0.002 0 1 805.2 605.1)" font-size="5.6" text-anchor="middle">86.18</text>
<text transform="matrix(1.56 0.002 0 1 827.75 605.1)" font-size="5.6" text-anchor="middle">25.81</text>
<text transform="matrix(1.56 0.002 0 1 850.1 605.1)" font-size="5.6" text-anchor="middle">7198</text>
<text transform="matrix(1.56 0.002 0 1 936.6 605.1)" font-size="5.6" text-anchor="middle">806104</text>
<text transform="matrix(1.56 0.002 0 1 681.8 611.6)" font-size="5.6" text-anchor="middle">1</text>
<text transform="matrix(1.56 0.002 0 1 692.7 611.6)" font-size="5.6" text-anchor="middle">32</text>
<text transform="matrix(1.56 0.002 0 1 710.95 611.6)" font-size="5.6" text-anchor="middle">1-3203</text>
<text transform="matrix(1.29 0.002 0 1 739.55 611.75)" font-size="5.5" text-anchor="middle" class="k"><tspan>三</tspan>室两厅</text>
<text transform="matrix(1.56 0.002 0 1 761.85 611.6)" font-size="5.6" text-anchor="middle">3.0</text>
<text transform="matrix(1.56 0.002 0 1 781.1 611.6)" font-size="5.6" text-anchor="middle">111.99</text>
<text transform="matrix(1.56 0.002 0 1 805.2 611.6)" font-size="5.6" text-anchor="middle">86.18</text>
<text transform="matrix(1.56 0.002 0 1 827.75 611.6)" font-size="5.6" text-anchor="middle">25.81</text>
<text transform="matrix(1.56 0.002 0 1 850.1 611.6)" font-size="5.6" text-anchor="middle">7198</text>
<text transform="matrix(1.56 0.002 0 1 936.6 611.6)" font-size="5.6" text-anchor="middle">806104</text>
<text transform="matrix(1.56 0.002 0 1 681.8 618.11)" font-size="5.6" text-anchor="middle">1</text>
<text transform="matrix(1.56 0.002 0 1 692.7 618.11)" font-size="5.6" text-anchor="middle">32</text>
<text transform="matrix(1.56 0.002 0 1 710.95 618.11)" font-size="5.6" text-anchor="middle">1-3204</text>
<text transform="matrix(1.29 0.002 0 1 739.55 618.26)" font-size="5.5" text-anchor="middle" class="k"><tspan>三</tspan>室两厅</text>
<text transform="matrix(1.56 0.002 0 1 761.85 618.11)" font-size="5.6" text-anchor="middle">3.0</text>
<text transform="matrix(1.56 0.002 0 1 781.1 618.11)" font-size="5.6" text-anchor="middle">130.19</text>
<text transform="matrix(1.56 0.002 0 1 805.2 618.11)" font-size="5.6" text-anchor="middle">100.19</text>
<text transform="matrix(1.56 0.002 0 1 827.75 618.11)" font-size="5.6" text-anchor="middle">30.00</text>
<text transform="matrix(1.56 0.002 0 1 850.1 618.11)" font-size="5.6" text-anchor="middle">6668</text>
<text transform="matrix(1.56 0.002 0 1 936.6 618.11)" font-size="5.6" text-anchor="middle">868107</text>
<text transform="matrix(1.56 0.002 0 1 681.8 624.62)" font-size="5.6" text-anchor="middle">1</text>
<text transform="matrix(1.56 0.002 0 1 692.7 624.62)" font-size="5.6" text-anchor="middle">32</text>
<text transform="matrix(1.56 0.002 0 1 710.95 624.62)" font-size="5.6" text-anchor="middle">2-3201</text>
<text transform="matrix(1.29 0.002 0 1 739.55 624.77)" font-size="5.5" text-anchor="middle" class="k"><tspan>三</tspan>室两厅</text>
<text transform="matrix(1.56 0.002 0 1 761.85 624.62)" font-size="5.6" text-anchor="middle">3.0</text>
<text transform="matrix(1.56 0.002 0 1 781.1 624.62)" font-size="5.6" text-anchor="middle">130.19</text>
<text transform="matrix(1.56 0.002 0 1 805.2 624.62)" font-size="5.6" text-anchor="middle">100.19</text>
<text transform="matrix(1.56 0.002 0 1 827.75 624.62)" font-size="5.6" text-anchor="middle">30.00</text>
<text transform="matrix(1.56 0.002 0 1 850.1 624.62)" font-size="5.6" text-anchor="middle">6668</text>
<text transform="matrix(1.56 0.002 0 1 936.6 624.62)" font-size="5.6" text-anchor="middle">868107</text>
<text transform="matrix(1.56 0.002 0 1 681.8 631.13)" font-size="5.6" text-anchor="middle">1</text>
<text transform="matrix(1.56 0.002 0 1 692.7 631.13)" font-size="5.6" text-anchor="middle">32</text>
<text transform="matrix(1.56 0.002 0 1 710.95 631.13)" font-size="5.6" text-anchor="middle">2-3202</text>
<text transform="matrix(1.29 0.002 0 1 739.55 631.28)" font-size="5.5" text-anchor="middle" class="k"><tspan>三</tspan>室两厅</text>
<text transform="matrix(1.56 0.002 0 1 761.85 631.13)" font-size="5.6" text-anchor="middle">3.0</text>
<text transform="matrix(1.56 0.002 0 1 781.1 631.13)" font-size="5.6" text-anchor="middle">111.99</text>
<text transform="matrix(1.56 0.002 0 1 805.2 631.13)" font-size="5.6" text-anchor="middle">86.18</text>
<text transform="matrix(1.56 0.002 0 1 827.75 631.13)" font-size="5.6" text-anchor="middle">25.81</text>
<text transform="matrix(1.56 0.002 0 1 850.1 631.13)" font-size="5.6" text-anchor="middle">7198</text>
<text transform="matrix(1.56 0.002 0 1 936.6 631.13)" font-size="5.6" text-anchor="middle">806104</text>
<text transform="matrix(1.56 0.002 0 1 681.8 637.63)" font-size="5.6" text-anchor="middle">1</text>
<text transform="matrix(1.56 0.002 0 1 692.7 637.63)" font-size="5.6" text-anchor="middle">32</text>
<text transform="matrix(1.56 0.002 0 1 710.95 637.63)" font-size="5.6" text-anchor="middle">2-3203</text>
<text transform="matrix(1.29 0.002 0 1 739.55 637.78)" font-size="5.5" text-anchor="middle" class="k"><tspan>三</tspan>室两厅</text>
<text transform="matrix(1.56 0.002 0 1 761.85 637.63)" font-size="5.6" text-anchor="middle">3.0</text>
<text transform="matrix(1.56 0.002 0 1 781.1 637.63)" font-size="5.6" text-anchor="middle">111.99</text>
<text transform="matrix(1.56 0.002 0 1 805.2 637.63)" font-size="5.6" text-anchor="middle">86.18</text>
<text transform="matrix(1.56 0.002 0 1 827.75 637.63)" font-size="5.6" text-anchor="middle">25.81</text>
<text transform="matrix(1.56 0.002 0 1 850.1 637.63)" font-size="5.6" text-anchor="middle">7198</text>
<text transform="matrix(1.56 0.002 0 1 936.6 637.63)" font-size="5.6" text-anchor="middle">806104</text>
<text transform="matrix(1.56 0.002 0 1 681.8 644.14)" font-size="5.6" text-anchor="middle">1</text>
<text transform="matrix(1.56 0.002 0 1 692.7 644.14)" font-size="5.6" text-anchor="middle">32</text>
<text transform="matrix(1.56 0.002 0 1 710.95 644.14)" font-size="5.6" text-anchor="middle">2-3204</text>
<text transform="matrix(1.29 0.002 0 1 739.55 644.29)" font-size="5.5" text-anchor="middle" class="k"><tspan>三</tspan>室两厅</text>
<text transform="matrix(1.56 0.002 0 1 761.85 644.14)" font-size="5.6" text-anchor="middle">3.0</text>
<text transform="matrix(1.56 0.002 0 1 781.1 644.14)" font-size="5.6" text-anchor="middle">125.97</text>
<text transform="matrix(1.56 0.002 0 1 805.2 644.14)" font-size="5.6" text-anchor="middle">96.94</text>
<text transform="matrix(1.56 0.002 0 1 827.75 644.14)" font-size="5.6" text-anchor="middle">29.03</text>
<text transform="matrix(1.56 0.002 0 1 850.1 644.14)" font-size="5.6" text-anchor="middle">6948</text>
<text transform="matrix(1.56 0.002 0 1 936.6 644.14)" font-size="5.6" text-anchor="middle">875240</text>
</g>
</g>
<g class="wm">
<text transform="matrix(1.23 0 -0.1 1 13.6 660)" font-size="22" font-weight="900" style="fill:#fff;stroke:#fff;stroke-width:0.7;stroke-linejoin:round;filter:drop-shadow(0.5px 0.6px 0.5px rgba(110,100,80,0.75))" class="wm">昵享网</text>
<text x="99.8" y="659" font-size="17" font-weight="bold" font-style="italic" textLength="111" lengthAdjust="spacingAndGlyphs" style="fill:#fff;filter:drop-shadow(0.7px 0.7px 0.4px rgba(110,100,80,0.6))" class="wm">www.nipic.cn</text>
<rect x="787" y="641" width="227" height="19.6" fill="#8c8676" fill-opacity="0.6"/>
<text x="797.4" y="654.7" font-size="10.9" textLength="205.5" lengthAdjust="spacingAndGlyphs" style="fill:#fff" class="wm">ID:23632861 NO:20181004113335485000</text>
</g>
</svg></div>
</body></html>
